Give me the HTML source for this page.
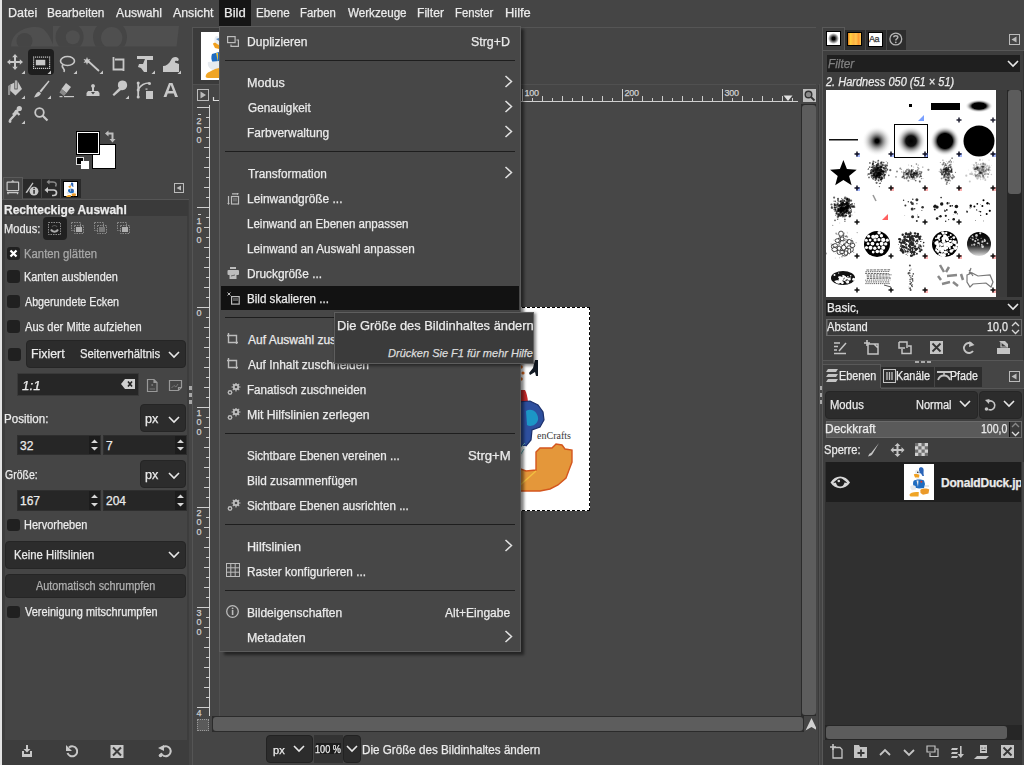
<!DOCTYPE html><html><head><meta charset="utf-8"><style>
html,body{margin:0;padding:0;width:1024px;height:765px;overflow:hidden;background:#454545;}
body{position:relative;font-family:"Liberation Sans", sans-serif;}
div{-webkit-text-stroke:0.25px currentColor;}
div,svg{position:absolute;box-sizing:border-box;}
</style></head><body>
<div style="left:0px;top:0px;width:2px;height:765px;background:#e4e4e4;"></div>
<div style="left:2px;top:0px;width:1022px;height:26px;background:#454545;"></div>
<div style="top:6.8px;font-size:12px;line-height:12px;color:#ebebeb;white-space:pre;left:7.86px;transform:scaleX(1.0423);transform-origin:0 0;">Datei</div>
<div style="top:6.8px;font-size:12px;line-height:12px;color:#ebebeb;white-space:pre;left:47.21px;transform:scaleX(0.9893);transform-origin:0 0;">Bearbeiten</div>
<div style="top:6.8px;font-size:12px;line-height:12px;color:#ebebeb;white-space:pre;left:115.50px;transform:scaleX(1.0156);transform-origin:0 0;">Auswahl</div>
<div style="top:6.8px;font-size:12px;line-height:12px;color:#ebebeb;white-space:pre;left:172.60px;transform:scaleX(1.0282);transform-origin:0 0;">Ansicht</div>
<div style="top:6.8px;font-size:12px;line-height:12px;color:#ebebeb;white-space:pre;left:256.13px;transform:scaleX(0.9697);transform-origin:0 0;">Ebene</div>
<div style="top:6.8px;font-size:12px;line-height:12px;color:#ebebeb;white-space:pre;left:300.06px;transform:scaleX(0.9444);transform-origin:0 0;">Farben</div>
<div style="top:6.8px;font-size:12px;line-height:12px;color:#ebebeb;white-space:pre;left:347.70px;transform:scaleX(0.9683);transform-origin:0 0;">Werkzeuge</div>
<div style="top:6.8px;font-size:12px;line-height:12px;color:#ebebeb;white-space:pre;left:416.69px;transform:scaleX(1.0115);transform-origin:0 0;">Filter</div>
<div style="top:6.8px;font-size:12px;line-height:12px;color:#ebebeb;white-space:pre;left:455.06px;transform:scaleX(0.9400);transform-origin:0 0;">Fenster</div>
<div style="top:6.8px;font-size:12px;line-height:12px;color:#ebebeb;white-space:pre;left:504.73px;transform:scaleX(1.0739);transform-origin:0 0;">Hilfe</div>
<div style="left:219px;top:0px;width:32px;height:26px;background:#151515;"></div>
<div style="top:6.8px;font-size:12px;line-height:12px;color:#ebebeb;white-space:pre;left:223.51px;transform:scaleX(1.0889);transform-origin:0 0;">Bild</div>
<div style="left:2px;top:26px;width:188px;height:739px;background:#454545;"></div>
<svg style="left:0px;top:26px;" width="190" height="21" viewBox="0 0 190 21">
<defs><clipPath id="wb"><rect x="0" y="0" width="190" height="20.5"/></clipPath></defs>
<g clip-path="url(#wb)">
<path d="M11 21 C11 8 22 1 36 1 C44 1 48 6 54 21 Z" fill="#4f4f4f"/>
<circle cx="24.5" cy="15" r="8" fill="#454545"/>
<path d="M53 0 L179 0 L176.5 21 L53 21 Z" fill="#4f4f4f"/>
<circle cx="69.6" cy="11" r="14" fill="#454545"/>
<circle cx="110" cy="11" r="17" fill="#454545"/>
<circle cx="72.8" cy="11.3" r="7" fill="#4f4f4f"/>
<circle cx="111.7" cy="11.8" r="10.7" fill="#4f4f4f"/>
</g>
</svg>
<div style="left:28px;top:49px;width:26px;height:26px;background:#1e1e1e;border-radius:4px;"></div>
<svg style="left:0px;top:26px;" width="190" height="100" viewBox="0 0 190 100">
<g fill="#c8c8c8" stroke="none">
<!-- move -->
<rect x="10" y="35" width="10" height="2"/><rect x="14" y="31" width="2" height="10"/>
<path d="M7 36 L10.2 33.2 L10.2 38.8 Z M23 36 L19.8 33.2 L19.8 38.8 Z M15 28 L12.2 31.2 L17.8 31.2 Z M15 44 L12.2 40.8 L17.8 40.8 Z"/>
<path d="M21.5 48 L25 48 L25 44.5 Z" fill="#c8c8c8"/>
<!-- rect select dots -->
<rect x="35.8" y="33.8" width="9.5" height="5.5"/>
</g>
<g fill="#c8c8c8"><rect x="33" y="30.5" width="1.2" height="1.2"/><rect x="33" y="41.8" width="1.2" height="1.2"/><rect x="35" y="30.5" width="1.2" height="1.2"/><rect x="35" y="41.8" width="1.2" height="1.2"/><rect x="37" y="30.5" width="1.2" height="1.2"/><rect x="37" y="41.8" width="1.2" height="1.2"/><rect x="39" y="30.5" width="1.2" height="1.2"/><rect x="39" y="41.8" width="1.2" height="1.2"/><rect x="41" y="30.5" width="1.2" height="1.2"/><rect x="41" y="41.8" width="1.2" height="1.2"/><rect x="43" y="30.5" width="1.2" height="1.2"/><rect x="43" y="41.8" width="1.2" height="1.2"/><rect x="45" y="30.5" width="1.2" height="1.2"/><rect x="45" y="41.8" width="1.2" height="1.2"/><rect x="47" y="30.5" width="1.2" height="1.2"/><rect x="47" y="41.8" width="1.2" height="1.2"/><rect x="49" y="30.5" width="1.2" height="1.2"/><rect x="49" y="41.8" width="1.2" height="1.2"/><rect x="33" y="32.4" width="1.2" height="1.2"/><rect x="49" y="32.4" width="1.2" height="1.2"/><rect x="33" y="34.3" width="1.2" height="1.2"/><rect x="49" y="34.3" width="1.2" height="1.2"/><rect x="33" y="36.2" width="1.2" height="1.2"/><rect x="49" y="36.2" width="1.2" height="1.2"/><rect x="33" y="38.1" width="1.2" height="1.2"/><rect x="49" y="38.1" width="1.2" height="1.2"/><rect x="33" y="40.0" width="1.2" height="1.2"/><rect x="49" y="40.0" width="1.2" height="1.2"/></g>
<path d="M47.5 48 L51 48 L51 44.5 Z" fill="#c8c8c8"/>
<!-- lasso -->
<g fill="none" stroke="#c8c8c8" stroke-width="1.6">
<ellipse cx="67.5" cy="35" rx="7" ry="4.5"/>
<path d="M63 38.5 C60 42 66 42 64 46"/>
</g>
<path d="M73.5 48 L77 48 L77 44.5 Z" fill="#c8c8c8"/>
<!-- fuzzy wand -->
<path d="M88 35 L99 45" stroke="#c8c8c8" stroke-width="1.8"/>
<path d="M87 31 L88 33.5 L90.5 33 L89 35 L90.5 37 L88 36.5 L87 39 L86 36.5 L83.5 37 L85 35 L83.5 33 L86 33.5 Z" fill="#c8c8c8"/>
<path d="M99.5 48 L103 48 L103 44.5 Z" fill="#c8c8c8"/>
<!-- crop -->
<g fill="none" stroke="#c8c8c8" stroke-width="1.8">
<path d="M113.5 31 L113.5 43.5 L124 43.5"/>
<path d="M115 33.5 L123.5 33.5 L123.5 45"/>
</g>
<!-- unified transform -->
<path d="M137 30 L153 30 L153 34 L147 34 L147 46 L144 46 L141 42 L138 41 L139 38 L143 38 L145 33 L137 33 Z" fill="#c8c8c8"/>
<path d="M151.5 48 L155 48 L155 44.5 Z" fill="#c8c8c8"/>
<!-- warp -->
<path d="M163 46 L163 40 C166 40 169 38 171 34 C172 31 176 30 178 32 C179.5 33.5 178.5 35.5 177 35 C176 34.5 174.5 35 175 36.5 L179 38 L179 46 Z" fill="#c8c8c8"/>
<path d="M177.5 48 L181 48 L181 44.5 Z" fill="#c8c8c8"/>
<!-- bucket -->
<path d="M10.5 58.5 L17.5 55 L22 63 L15.5 69.5 L9.5 64 Z" fill="#c8c8c8"/>
<path d="M8 60 L11 58 L10 69 L8 69 Z" fill="#8e8e8e"/>
<rect x="14.8" y="54" width="2.4" height="9" fill="#c8c8c8" stroke="#454545" stroke-width="0.8"/>
<path d="M21.5 73 L25 73 L25 69.5 Z" fill="#c8c8c8"/>
<!-- brush -->
<path d="M48.5 54.5 L49.5 55.5 L41 66.5 L39.5 65 Z" fill="#c8c8c8"/>
<path d="M39 65.5 L41 67.5 C40 70 37.5 71 34 71.5 C35.5 69 36 66.5 39 65.5 Z" fill="#c8c8c8"/>
<path d="M47.5 73 L51 73 L51 69.5 Z" fill="#c8c8c8"/>
<!-- eraser -->
<path d="M66 57 L71 61 L66.5 67 L61.5 63 Z" fill="#c8c8c8"/>
<path d="M61.5 63 L66.5 67 L64 70 L59.5 66.5 Z" fill="#8a8a8a"/>
<rect x="59.5" y="70" width="3" height="1.2" fill="#c8c8c8"/><rect x="64" y="70" width="10" height="1.2" fill="#c8c8c8"/>
<!-- clone -->
<circle cx="93" cy="60" r="2"/>
<g fill="#c8c8c8"><circle cx="93" cy="60" r="2"/><rect x="92" y="61" width="2" height="4"/><path d="M88 65 L98 65 L99.5 67 L99.5 70 L86.5 70 L86.5 67 Z"/></g>
<path d="M91 66 L95 66 L93 68.5 Z" fill="#454545"/>
<!-- smudge -->
<path d="M118 58 C118 54 126 53 127 58 C128 62 124 65 121 64 L114 70 L112.5 68.5 L119 62 C117.5 61 118 59 118 58 Z" fill="#c8c8c8"/>
<path d="M125.5 73 L129 73 L129 69.5 Z" fill="#c8c8c8"/>
<!-- paths -->
<g fill="#c8c8c8"><rect x="137.3" y="56" width="1.8" height="16"/><circle cx="138.2" cy="57" r="1.5"/><circle cx="138.2" cy="64" r="1.5"/><circle cx="138.2" cy="71" r="1.5"/>
<rect x="145.5" y="62.5" width="2" height="1.2"/><rect x="146" y="65" width="7" height="8"/></g>
<path d="M138.5 63 C141 59 145 57 149 57" fill="none" stroke="#c8c8c8" stroke-width="1.5"/>
<circle cx="149.5" cy="57.5" r="1.5" fill="#c8c8c8"/>
<!-- text A -->
<path d="M169 57 L172.5 57 L178 71 L175 71 L173.8 67.5 L167.7 67.5 L166.5 71 L163.5 71 Z M168.5 65 L173 65 L170.7 59 Z" fill="#c8c8c8" fill-rule="evenodd"/>
<!-- color picker -->
<circle cx="19.3" cy="82.5" r="2.6" fill="#c8c8c8"/>
<path d="M15 84.5 L19.5 89 M17 86.5 L11 93 L9.5 95" stroke="#c8c8c8" stroke-width="2.2" fill="none"/>
<path d="M18.5 83.5 L13 89" stroke="#c8c8c8" stroke-width="2.6"/>
<circle cx="10" cy="95.5" r="1.4" fill="#c8c8c8"/>
<path d="M21.5 98 L25 98 L25 94.5 Z" fill="#c8c8c8"/>
<!-- zoom -->
<circle cx="39.5" cy="86.5" r="4.3" fill="none" stroke="#c8c8c8" stroke-width="1.8"/>
<path d="M42.5 89.5 L47.5 94.5" stroke="#c8c8c8" stroke-width="2.2"/>
</svg>
<div style="left:92px;top:144px;width:24px;height:25px;background:#ffffff;border:1px solid #000;"></div>
<div style="left:76px;top:131px;width:24px;height:24px;background:#000;border:1px solid #000;box-shadow:inset 0 0 0 1px #fff, inset 0 0 0 2px #000;"></div>
<div style="left:76px;top:157px;width:8px;height:8px;background:#000;border:1px solid #ddd;"></div>
<div style="left:81px;top:161px;width:8px;height:8px;background:#fff;"></div>
<svg style="left:104px;top:130px;" width="13" height="14" viewBox="0 0 13 14"><path d="M1 3.5 L4.5 0.5 L4.5 2.5 L9.5 2.5 L9.5 9 L11.5 9 L8.5 12.5 L5.5 9 L7.5 9 L7.5 4.5 L4.5 4.5 L4.5 6.5 Z" fill="#bdbdbd"/></svg>
<div style="left:3px;top:177px;width:20px;height:23px;background:#454545;border:1px solid #5a5a5a;border-bottom:none;"></div>
<div style="left:23px;top:179px;width:18px;height:19px;background:#2a2a2a;"></div>
<div style="left:42px;top:179px;width:18px;height:19px;background:#2a2a2a;"></div>
<div style="left:61px;top:179px;width:20px;height:19px;background:#2a2a2a;"></div>
<svg style="left:3px;top:176px;" width="80" height="24" viewBox="0 0 80 24">
<g fill="none" stroke="#c8c8c8" stroke-width="1.2">
<rect x="4.1" y="6.1" width="11.5" height="8.5" rx="0.5"/>
<path d="M4 16.6 L15.5 16.6 M5 16.6 L5 18.3 M14.5 16.6 L14.5 18.3"/>
</g>
<path d="M8 5.8 L9.8 4 L11.6 5.8 Z" fill="#c8c8c8"/>
<path d="M22.5 16.5 L29.5 6.5 L30.5 7.3 L24 17 Z" fill="#c8c8c8"/>
<circle cx="31" cy="15.2" r="4.4" fill="#c8c8c8"/>
<rect x="30.3" y="14" width="1.5" height="3.8" fill="#2a2a2a"/><rect x="30.3" y="11.8" width="1.5" height="1.3" fill="#2a2a2a"/>
<path d="M52.5 10.5 C54 8 53 6 50 6 L46 6" fill="none" stroke="#8a8a8a" stroke-width="1.5"/>
<path d="M46.5 3.5 L43.5 6 L46.5 8.5 Z" fill="#8a8a8a"/>
<path d="M44.5 14 L50.5 14 C54.5 14 54.5 19.5 50.5 19.5 L49 19.5" fill="none" stroke="#c8c8c8" stroke-width="1.7"/>
<path d="M45 11 L41.5 14 L45 17 Z" fill="#c8c8c8"/>
</svg>
<div style="left:63px;top:181px;width:15px;height:16px;background:#ffffff;border:1px solid #000;"></div>
<svg style="left:63px;top:181px;" width="15" height="16" viewBox="0 0 15 16"><g transform="translate(0.5,0) scale(0.5)"><g>
<path d="M15 5 C15 2.5 19 2.5 19.5 5 C20 7 19 9 20 12 L18.5 12 L17 9.5 L15 9 Z" fill="#2a64b8"/>
<path d="M11 8 C11 5.5 15 5 15.5 7.5 L15.5 12.5 L12 12.5 Z" fill="#e6ebf0"/>
<circle cx="13.8" cy="8.2" r="0.8" fill="#222"/>
<path d="M9.8 10.5 C11 9.8 14 10 15.3 11 L15 13.7 L11 13.5 Z" fill="#f0a020"/>
<path d="M12 13.7 L16 13.7 L16.5 16.5 L12.5 16.5 Z" fill="#f0f2f4"/>
<path d="M9.5 17 C11 15.5 17 15 20 16.5 L21 20 L20 24 L15 24.5 L10 23.5 C8.8 21 8.8 19 9.5 17 Z" fill="#1f6cc0"/>
<path d="M12.5 16.5 L14.5 16.5 L14 23 Z" fill="#e8e8e8"/>
<circle cx="17.4" cy="17.8" r="1" fill="#d83a2a"/>
<path d="M6.4 22 C8 21 10 21 11.6 22 L12 25.5 L8 26.3 C6.5 25 6 23.5 6.4 22 Z" fill="#e4e8ec"/>
<path d="M21 21 L25 21 L25 23 L21 23 Z" fill="#e4e8ec"/>
<path d="M5.3 31 C6 28.5 10 27.5 14.8 28 L14.5 32.6 L6.5 32.6 Z" fill="#f0a526"/>
<path d="M16.3 26 C18 24 23 24 25.2 25.5 L24.5 29.5 L19 30.7 L16.5 29 Z" fill="#eb9a2a"/>
</g></g></svg>
<div style="left:174px;top:183px;width:10px;height:10px;border:1px solid #bbb;"></div>
<svg style="left:174px;top:183px;" width="10" height="10" viewBox="0 0 10 10"><path d="M7 2.5 L7 7.5 L2.5 5 Z" fill="#bbb"/></svg>
<div style="left:2px;top:199px;width:188px;height:566px;background:#3d3d3d;"></div>
<div style="left:2px;top:199px;width:188px;height:1px;background:#555;"></div>
<div style="left:189px;top:199px;width:1px;height:566px;background:#4e4e4e;"></div>
<div style="left:5px;top:216px;width:182px;height:524px;background:#454545;"></div>
<div style="left:4px;top:200px;width:184px;height:16px;background:#3a3a3a;"></div>
<div style="top:203.8px;font-size:12px;line-height:12px;color:#ebebeb;white-space:pre;font-weight:bold;left:4.20px;transform:scaleX(0.9983);transform-origin:0 0;">Rechteckige Auswahl</div>
<div style="top:222.8px;font-size:12px;line-height:12px;color:#ebebeb;white-space:pre;left:3.68px;transform:scaleX(0.9237);transform-origin:0 0;">Modus:</div>
<div style="left:43px;top:217px;width:24px;height:23px;background:#202020;border-radius:4px;"></div>
<svg style="left:43px;top:217px;" width="90" height="23" viewBox="0 0 90 23">
<g fill="none" stroke="#8a8a8a" stroke-width="1" stroke-dasharray="1.5 1">
<rect x="5.5" y="5.5" width="12" height="12"/>
<rect x="28.5" y="5.5" width="9" height="8"/><rect x="31.5" y="8.5" width="9" height="8"/>
<rect x="51.5" y="5.5" width="9" height="8"/><rect x="54.5" y="8.5" width="9" height="8"/>
<rect x="74.5" y="5.5" width="9" height="8"/><rect x="77.5" y="8.5" width="9" height="8"/>
</g>
<path d="M8 12.5 C9.5 15.5 13.5 15.5 15 12.5" fill="none" stroke="#aaa" stroke-width="2"/>
<path d="M9 10 C10 8 13 8 14 10" fill="none" stroke="#555" stroke-width="1.2"/>
<rect x="33" y="10" width="6" height="5" fill="#b0b0b0"/>
<rect x="56" y="10" width="6" height="5" fill="#777"/>
<rect x="79" y="10" width="6" height="5" fill="#b0b0b0"/>
</svg>
<div style="left:7px;top:247px;width:13px;height:13px;background:#202020;border-radius:3px;"></div>
<div style="top:247.8px;font-size:12px;line-height:12px;color:#a8a8a8;white-space:pre;left:23.56px;transform:scaleX(0.9434);transform-origin:0 0;">Kanten glätten</div>
<div style="left:7px;top:270px;width:13px;height:13px;background:#202020;border-radius:3px;"></div>
<div style="top:270.8px;font-size:12px;line-height:12px;color:#ebebeb;white-space:pre;left:23.59px;transform:scaleX(0.9069);transform-origin:0 0;">Kanten ausblenden</div>
<div style="left:7px;top:295px;width:13px;height:13px;background:#202020;border-radius:3px;"></div>
<div style="top:295.8px;font-size:12px;line-height:12px;color:#ebebeb;white-space:pre;left:24.50px;transform:scaleX(0.8924);transform-origin:0 0;">Abgerundete Ecken</div>
<div style="left:7px;top:320px;width:13px;height:13px;background:#202020;border-radius:3px;"></div>
<div style="top:320.8px;font-size:12px;line-height:12px;color:#ebebeb;white-space:pre;left:24.50px;transform:scaleX(0.9262);transform-origin:0 0;">Aus der Mitte aufziehen</div>
<svg style="left:7px;top:247px;" width="13" height="13" viewBox="0 0 13 13"><path d="M3.5 3.5 L9.5 9.5 M9.5 3.5 L3.5 9.5" stroke="#fff" stroke-width="2.2"/></svg>
<div style="left:8px;top:348px;width:13px;height:13px;background:#202020;border-radius:3px;"></div>
<div style="left:26px;top:340px;width:160px;height:28px;background:#2c2c2c;border-radius:4px;border:1px solid #252525;"></div>
<div style="top:347.8px;font-size:12px;line-height:12px;color:#ebebeb;white-space:pre;left:30.97px;transform:scaleX(1.0281);transform-origin:0 0;">Fixiert</div>
<div style="top:347.8px;font-size:12px;line-height:12px;color:#ebebeb;white-space:pre;left:80.26px;transform:scaleX(0.9381);transform-origin:0 0;">Seitenverhältnis</div>
<svg style="left:168px;top:351px;" width="12" height="8" viewBox="0 0 12 8"><path d="M1 1 L6 6 L11 1" fill="none" stroke="#e8e8e8" stroke-width="1.6"/></svg>
<div style="left:17px;top:373px;width:122px;height:23px;background:#262626;border:1px solid #393939;"></div>
<div style="top:379.8px;font-size:12px;line-height:12px;color:#ebebeb;white-space:pre;font-style:italic;left:22.00px;transform:scaleX(1.1250);transform-origin:0 0;">1:1</div>
<svg style="left:121px;top:377px;" width="16" height="14" viewBox="0 0 16 14"><path d="M4 2 L14 2 L14 12 L4 12 L0 7 Z" fill="#d0d0d0"/><path d="M7 4.5 L11 9.5 M11 4.5 L7 9.5" stroke="#222" stroke-width="1.6"/></svg>
<svg style="left:145px;top:378px;" width="40" height="16" viewBox="0 0 40 16"><path d="M2.5 1.5 L9 1.5 L12 4.5 L12 13.5 L2.5 13.5 Z M9 1.5 L9 4.5 L12 4.5" fill="none" stroke="#999" stroke-width="1.2"/><circle cx="7.2" cy="7" r="1" fill="#777"/><path d="M4.5 11 L10 11" stroke="#777" stroke-width="1"/><path d="M24.5 2.5 L36.5 2.5 L36.5 9.5 L33.5 12.5 L24.5 12.5 Z M33.5 12.5 L33.5 9.5 L36.5 9.5" fill="none" stroke="#999" stroke-width="1.2"/><path d="M26.5 10 L29 7.5 L31 9 L33 6" fill="none" stroke="#777" stroke-width="1"/></svg>
<div style="top:412.8px;font-size:12px;line-height:12px;color:#ebebeb;white-space:pre;left:3.64px;transform:scaleX(0.9636);transform-origin:0 0;">Position:</div>
<div style="left:140px;top:404px;width:46px;height:28px;background:#2c2c2c;border-radius:4px;border:1px solid #252525;"></div>
<div style="top:412.8px;font-size:12px;line-height:12px;color:#ebebeb;white-space:pre;left:144.75px;transform:scaleX(1.0500);transform-origin:0 0;">px</div>
<svg style="left:168px;top:416px;" width="12" height="8" viewBox="0 0 12 8"><path d="M1 1 L6 6 L11 1" fill="none" stroke="#e8e8e8" stroke-width="1.6"/></svg>
<div style="left:17px;top:435px;width:84px;height:20px;background:#262626;border:1px solid #2e2e2e;"></div>
<div style="left:89px;top:436px;width:11px;height:18px;background:#1c1c1c;"></div>
<svg style="left:89px;top:436px;" width="11" height="18" viewBox="0 0 11 18"><path d="M2 7 L5.5 3.5 L9 7 Z M2 11 L5.5 14.5 L9 11 Z" fill="#d8d8d8"/></svg>
<div style="top:439.8px;font-size:12px;line-height:12px;color:#ebebeb;white-space:pre;left:20px;">32</div>
<div style="left:103px;top:435px;width:84px;height:20px;background:#262626;border:1px solid #2e2e2e;"></div>
<div style="left:175px;top:436px;width:11px;height:18px;background:#1c1c1c;"></div>
<svg style="left:175px;top:436px;" width="11" height="18" viewBox="0 0 11 18"><path d="M2 7 L5.5 3.5 L9 7 Z M2 11 L5.5 14.5 L9 11 Z" fill="#d8d8d8"/></svg>
<div style="top:439.8px;font-size:12px;line-height:12px;color:#ebebeb;white-space:pre;left:106px;">7</div>
<div style="top:468.8px;font-size:12px;line-height:12px;color:#ebebeb;white-space:pre;left:4.60px;transform:scaleX(0.8757);transform-origin:0 0;">Größe:</div>
<div style="left:140px;top:460px;width:46px;height:28px;background:#2c2c2c;border-radius:4px;border:1px solid #252525;"></div>
<div style="top:468.8px;font-size:12px;line-height:12px;color:#ebebeb;white-space:pre;left:144.75px;transform:scaleX(1.0500);transform-origin:0 0;">px</div>
<svg style="left:168px;top:472px;" width="12" height="8" viewBox="0 0 12 8"><path d="M1 1 L6 6 L11 1" fill="none" stroke="#e8e8e8" stroke-width="1.6"/></svg>
<div style="left:17px;top:490px;width:84px;height:21px;background:#262626;border:1px solid #2e2e2e;"></div>
<div style="left:89px;top:491px;width:11px;height:19px;background:#1c1c1c;"></div>
<svg style="left:89px;top:491px;" width="11" height="19" viewBox="0 0 11 19"><path d="M2 7 L5.5 3.5 L9 7 Z M2 12 L5.5 15.5 L9 12 Z" fill="#d8d8d8"/></svg>
<div style="top:494.8px;font-size:12px;line-height:12px;color:#ebebeb;white-space:pre;left:20px;">167</div>
<div style="left:103px;top:490px;width:84px;height:21px;background:#262626;border:1px solid #2e2e2e;"></div>
<div style="left:175px;top:491px;width:11px;height:19px;background:#1c1c1c;"></div>
<svg style="left:175px;top:491px;" width="11" height="19" viewBox="0 0 11 19"><path d="M2 7 L5.5 3.5 L9 7 Z M2 12 L5.5 15.5 L9 12 Z" fill="#d8d8d8"/></svg>
<div style="top:494.8px;font-size:12px;line-height:12px;color:#ebebeb;white-space:pre;left:106px;">204</div>
<div style="left:7px;top:519px;width:13px;height:12px;background:#202020;border-radius:3px;"></div>
<div style="top:518.8px;font-size:12px;line-height:12px;color:#ebebeb;white-space:pre;left:23.79px;transform:scaleX(0.9132);transform-origin:0 0;">Hervorheben</div>
<div style="left:5px;top:541px;width:181px;height:28px;background:#2c2c2c;border-radius:4px;border:1px solid #252525;"></div>
<div style="top:548.8px;font-size:12px;line-height:12px;color:#ebebeb;white-space:pre;left:14.06px;transform:scaleX(0.9405);transform-origin:0 0;">Keine Hilfslinien</div>
<svg style="left:168px;top:551px;" width="12" height="8" viewBox="0 0 12 8"><path d="M1 1 L6 6 L11 1" fill="none" stroke="#e8e8e8" stroke-width="1.6"/></svg>
<div style="left:5px;top:574px;width:181px;height:24px;background:#2c2c2c;border-radius:4px;border:1px solid #252525;"></div>
<div style="top:579.8px;font-size:12px;line-height:12px;color:#b0b0b0;white-space:pre;left:36.00px;transform:scaleX(0.9030);transform-origin:0 0;">Automatisch schrumpfen</div>
<div style="left:7px;top:606px;width:13px;height:12px;background:#202020;border-radius:3px;"></div>
<div style="top:605.8px;font-size:12px;line-height:12px;color:#ebebeb;white-space:pre;left:24.70px;transform:scaleX(0.9124);transform-origin:0 0;">Vereinigung mitschrumpfen</div>
<svg style="left:3px;top:740px;" width="187" height="25" viewBox="0 0 187 25">
<g fill="#c8c8c8">
<rect x="23" y="5" width="2" height="6"/><path d="M20.5 9 L27.5 9 L24 12.5 Z"/>
<path d="M19 11 L21 11 L21 14 L27 14 L27 11 L29 11 L29 17 L19 17 Z"/>
</g>
<path d="M66 7.5 A5 5 0 1 1 64.5 13" fill="none" stroke="#c8c8c8" stroke-width="2"/>
<path d="M63 5 L63 11 L69 11 Z" fill="#c8c8c8"/>
<rect x="107.5" y="5" width="13" height="13" fill="#c8c8c8"/>
<path d="M110 7.5 L118 15.5 M118 7.5 L110 15.5" stroke="#3c3c3c" stroke-width="2"/>
<path d="M158 13 A5 5 0 1 0 160 7" fill="none" stroke="#c8c8c8" stroke-width="2"/>
<circle cx="157.5" cy="15.5" r="1.8" fill="#c8c8c8"/>
<path d="M155 8 L161 5 L161 11 Z" fill="#c8c8c8"/>
</svg>
<div style="left:189px;top:26px;width:4px;height:739px;background:#454545;"></div>
<div style="left:192px;top:27px;width:627px;height:738px;background:#454545;border-left:1px solid #555;border-top:1px solid #555;"></div>
<div style="left:193px;top:28px;width:33px;height:57px;background:#3b3b3b;"></div>
<div style="left:201px;top:32px;width:21px;height:48px;background:#ffffff;"></div>
<svg style="left:201px;top:32px;" width="18" height="48" viewBox="0 0 18 48"><path d="M14 5 C16 3 18 4 18 6 L18 14 L15 13 C13 11 13 7 14 5 Z" fill="#e8eef4"/><path d="M15 7 L18 6 L18 9 Z" fill="#5a8ac0"/><path d="M12 12 C13 10 15 11 16 12 L18 13 L18 17 L14 16 Z" fill="#f0a020"/><path d="M11 22 L18 20 L18 31 L12 31 C10 28 10 25 11 22 Z" fill="#1f6cc0"/><path d="M15 21 L17 21 L17 30 Z" fill="#e8c040"/><path d="M7 30 L18 29 L18 38 L12 38 C8 37 6 33 7 30 Z" fill="#e6eaee"/><path d="M5 43 C6 40 11 39 14 37 L18 36 L18 46 L7 46 C5 46 4 45 5 43 Z" fill="#f0a526"/></svg>
<div style="left:193px;top:84px;width:626px;height:1px;background:#505050;"></div>
<div style="left:193px;top:85px;width:626px;height:17px;background:#454545;"></div>
<div style="left:193px;top:85px;width:27px;height:632px;background:#454545;"></div>
<div style="left:220px;top:102px;width:581px;height:615px;background:#474747;"></div>
<div style="left:219px;top:102px;width:1px;height:615px;background:#505050;"></div>
<div style="left:220px;top:101px;width:580px;height:1px;background:#4a4a4a;"></div>
<div style="left:197px;top:89px;width:12px;height:12px;border:1px solid #bbb;"></div>
<svg style="left:197px;top:89px;" width="12" height="12" viewBox="0 0 12 12"><path d="M3.5 2.5 L9 6 L3.5 9.5 Z" fill="#bbb"/></svg>
<svg style="left:212px;top:97px;" width="8" height="5" viewBox="0 0 8 5"><path d="M1.5 0 L1.5 3.5 L8 3.5" fill="none" stroke="#ddd" stroke-width="1.2"/></svg>
<svg style="left:220px;top:85px;" width="580" height="17" viewBox="0 0 580 17"><rect x="0" y="16" width="578" height="1" fill="#cfcfcf"/><path d="M2.5 4 L2.5 16" stroke="#cfcfcf" stroke-width="1"/><path d="M12.5 13 L12.5 16" stroke="#cfcfcf" stroke-width="1"/><path d="M22.5 11 L22.5 16" stroke="#cfcfcf" stroke-width="1"/><path d="M32.5 13 L32.5 16" stroke="#cfcfcf" stroke-width="1"/><path d="M42.5 11 L42.5 16" stroke="#cfcfcf" stroke-width="1"/><path d="M52.5 13 L52.5 16" stroke="#cfcfcf" stroke-width="1"/><path d="M62.5 11 L62.5 16" stroke="#cfcfcf" stroke-width="1"/><path d="M72.5 13 L72.5 16" stroke="#cfcfcf" stroke-width="1"/><path d="M82.5 11 L82.5 16" stroke="#cfcfcf" stroke-width="1"/><path d="M92.5 13 L92.5 16" stroke="#cfcfcf" stroke-width="1"/><path d="M102.5 4 L102.5 16" stroke="#cfcfcf" stroke-width="1"/><path d="M112.5 13 L112.5 16" stroke="#cfcfcf" stroke-width="1"/><path d="M122.5 11 L122.5 16" stroke="#cfcfcf" stroke-width="1"/><path d="M132.5 13 L132.5 16" stroke="#cfcfcf" stroke-width="1"/><path d="M142.5 11 L142.5 16" stroke="#cfcfcf" stroke-width="1"/><path d="M152.5 13 L152.5 16" stroke="#cfcfcf" stroke-width="1"/><path d="M162.5 11 L162.5 16" stroke="#cfcfcf" stroke-width="1"/><path d="M172.5 13 L172.5 16" stroke="#cfcfcf" stroke-width="1"/><path d="M182.5 11 L182.5 16" stroke="#cfcfcf" stroke-width="1"/><path d="M192.5 13 L192.5 16" stroke="#cfcfcf" stroke-width="1"/><path d="M202.5 4 L202.5 16" stroke="#cfcfcf" stroke-width="1"/><path d="M212.5 13 L212.5 16" stroke="#cfcfcf" stroke-width="1"/><path d="M222.5 11 L222.5 16" stroke="#cfcfcf" stroke-width="1"/><path d="M232.5 13 L232.5 16" stroke="#cfcfcf" stroke-width="1"/><path d="M242.5 11 L242.5 16" stroke="#cfcfcf" stroke-width="1"/><path d="M252.5 13 L252.5 16" stroke="#cfcfcf" stroke-width="1"/><path d="M262.5 11 L262.5 16" stroke="#cfcfcf" stroke-width="1"/><path d="M272.5 13 L272.5 16" stroke="#cfcfcf" stroke-width="1"/><path d="M282.5 11 L282.5 16" stroke="#cfcfcf" stroke-width="1"/><path d="M292.5 13 L292.5 16" stroke="#cfcfcf" stroke-width="1"/><path d="M302.5 4 L302.5 16" stroke="#cfcfcf" stroke-width="1"/><path d="M312.5 13 L312.5 16" stroke="#cfcfcf" stroke-width="1"/><path d="M322.5 11 L322.5 16" stroke="#cfcfcf" stroke-width="1"/><path d="M332.5 13 L332.5 16" stroke="#cfcfcf" stroke-width="1"/><path d="M342.5 11 L342.5 16" stroke="#cfcfcf" stroke-width="1"/><path d="M352.5 13 L352.5 16" stroke="#cfcfcf" stroke-width="1"/><path d="M362.5 11 L362.5 16" stroke="#cfcfcf" stroke-width="1"/><path d="M372.5 13 L372.5 16" stroke="#cfcfcf" stroke-width="1"/><path d="M382.5 11 L382.5 16" stroke="#cfcfcf" stroke-width="1"/><path d="M392.5 13 L392.5 16" stroke="#cfcfcf" stroke-width="1"/><path d="M402.5 4 L402.5 16" stroke="#cfcfcf" stroke-width="1"/><path d="M412.5 13 L412.5 16" stroke="#cfcfcf" stroke-width="1"/><path d="M422.5 11 L422.5 16" stroke="#cfcfcf" stroke-width="1"/><path d="M432.5 13 L432.5 16" stroke="#cfcfcf" stroke-width="1"/><path d="M442.5 11 L442.5 16" stroke="#cfcfcf" stroke-width="1"/><path d="M452.5 13 L452.5 16" stroke="#cfcfcf" stroke-width="1"/><path d="M462.5 11 L462.5 16" stroke="#cfcfcf" stroke-width="1"/><path d="M472.5 13 L472.5 16" stroke="#cfcfcf" stroke-width="1"/><path d="M482.5 11 L482.5 16" stroke="#cfcfcf" stroke-width="1"/><path d="M492.5 13 L492.5 16" stroke="#cfcfcf" stroke-width="1"/><path d="M502.5 4 L502.5 16" stroke="#cfcfcf" stroke-width="1"/><path d="M512.5 13 L512.5 16" stroke="#cfcfcf" stroke-width="1"/><path d="M522.5 11 L522.5 16" stroke="#cfcfcf" stroke-width="1"/><path d="M532.5 13 L532.5 16" stroke="#cfcfcf" stroke-width="1"/><path d="M542.5 11 L542.5 16" stroke="#cfcfcf" stroke-width="1"/><path d="M552.5 13 L552.5 16" stroke="#cfcfcf" stroke-width="1"/><path d="M562.5 11 L562.5 16" stroke="#cfcfcf" stroke-width="1"/><path d="M572.5 13 L572.5 16" stroke="#cfcfcf" stroke-width="1"/></svg>
<div style="top:89.4px;font-size:9px;line-height:9px;color:#d0d0d0;white-space:pre;left:524.6px;letter-spacing:-0.3px;">100</div>
<div style="top:89.4px;font-size:9px;line-height:9px;color:#d0d0d0;white-space:pre;left:624.6px;letter-spacing:-0.3px;">200</div>
<div style="top:89.4px;font-size:9px;line-height:9px;color:#d0d0d0;white-space:pre;left:724.6px;letter-spacing:-0.3px;">300</div>
<svg style="left:193px;top:102px;" width="27" height="615" viewBox="0 0 27 615"><rect x="16" y="3" width="1" height="611" fill="#cfcfcf"/><path d="M4 5.5 L16 5.5" stroke="#cfcfcf" stroke-width="1"/><path d="M13 15.5 L16 15.5" stroke="#cfcfcf" stroke-width="1"/><path d="M11 25.5 L16 25.5" stroke="#cfcfcf" stroke-width="1"/><path d="M13 35.5 L16 35.5" stroke="#cfcfcf" stroke-width="1"/><path d="M11 45.5 L16 45.5" stroke="#cfcfcf" stroke-width="1"/><path d="M13 55.5 L16 55.5" stroke="#cfcfcf" stroke-width="1"/><path d="M11 65.5 L16 65.5" stroke="#cfcfcf" stroke-width="1"/><path d="M13 75.5 L16 75.5" stroke="#cfcfcf" stroke-width="1"/><path d="M11 85.5 L16 85.5" stroke="#cfcfcf" stroke-width="1"/><path d="M13 95.5 L16 95.5" stroke="#cfcfcf" stroke-width="1"/><path d="M4 105.5 L16 105.5" stroke="#cfcfcf" stroke-width="1"/><path d="M13 115.5 L16 115.5" stroke="#cfcfcf" stroke-width="1"/><path d="M11 125.5 L16 125.5" stroke="#cfcfcf" stroke-width="1"/><path d="M13 135.5 L16 135.5" stroke="#cfcfcf" stroke-width="1"/><path d="M11 145.5 L16 145.5" stroke="#cfcfcf" stroke-width="1"/><path d="M13 155.5 L16 155.5" stroke="#cfcfcf" stroke-width="1"/><path d="M11 165.5 L16 165.5" stroke="#cfcfcf" stroke-width="1"/><path d="M13 175.5 L16 175.5" stroke="#cfcfcf" stroke-width="1"/><path d="M11 185.5 L16 185.5" stroke="#cfcfcf" stroke-width="1"/><path d="M13 195.5 L16 195.5" stroke="#cfcfcf" stroke-width="1"/><path d="M4 205.5 L16 205.5" stroke="#cfcfcf" stroke-width="1"/><path d="M13 215.5 L16 215.5" stroke="#cfcfcf" stroke-width="1"/><path d="M11 225.5 L16 225.5" stroke="#cfcfcf" stroke-width="1"/><path d="M13 235.5 L16 235.5" stroke="#cfcfcf" stroke-width="1"/><path d="M11 245.5 L16 245.5" stroke="#cfcfcf" stroke-width="1"/><path d="M13 255.5 L16 255.5" stroke="#cfcfcf" stroke-width="1"/><path d="M11 265.5 L16 265.5" stroke="#cfcfcf" stroke-width="1"/><path d="M13 275.5 L16 275.5" stroke="#cfcfcf" stroke-width="1"/><path d="M11 285.5 L16 285.5" stroke="#cfcfcf" stroke-width="1"/><path d="M13 295.5 L16 295.5" stroke="#cfcfcf" stroke-width="1"/><path d="M4 305.5 L16 305.5" stroke="#cfcfcf" stroke-width="1"/><path d="M13 315.5 L16 315.5" stroke="#cfcfcf" stroke-width="1"/><path d="M11 325.5 L16 325.5" stroke="#cfcfcf" stroke-width="1"/><path d="M13 335.5 L16 335.5" stroke="#cfcfcf" stroke-width="1"/><path d="M11 345.5 L16 345.5" stroke="#cfcfcf" stroke-width="1"/><path d="M13 355.5 L16 355.5" stroke="#cfcfcf" stroke-width="1"/><path d="M11 365.5 L16 365.5" stroke="#cfcfcf" stroke-width="1"/><path d="M13 375.5 L16 375.5" stroke="#cfcfcf" stroke-width="1"/><path d="M11 385.5 L16 385.5" stroke="#cfcfcf" stroke-width="1"/><path d="M13 395.5 L16 395.5" stroke="#cfcfcf" stroke-width="1"/><path d="M4 405.5 L16 405.5" stroke="#cfcfcf" stroke-width="1"/><path d="M13 415.5 L16 415.5" stroke="#cfcfcf" stroke-width="1"/><path d="M11 425.5 L16 425.5" stroke="#cfcfcf" stroke-width="1"/><path d="M13 435.5 L16 435.5" stroke="#cfcfcf" stroke-width="1"/><path d="M11 445.5 L16 445.5" stroke="#cfcfcf" stroke-width="1"/><path d="M13 455.5 L16 455.5" stroke="#cfcfcf" stroke-width="1"/><path d="M11 465.5 L16 465.5" stroke="#cfcfcf" stroke-width="1"/><path d="M13 475.5 L16 475.5" stroke="#cfcfcf" stroke-width="1"/><path d="M11 485.5 L16 485.5" stroke="#cfcfcf" stroke-width="1"/><path d="M13 495.5 L16 495.5" stroke="#cfcfcf" stroke-width="1"/><path d="M4 505.5 L16 505.5" stroke="#cfcfcf" stroke-width="1"/><path d="M13 515.5 L16 515.5" stroke="#cfcfcf" stroke-width="1"/><path d="M11 525.5 L16 525.5" stroke="#cfcfcf" stroke-width="1"/><path d="M13 535.5 L16 535.5" stroke="#cfcfcf" stroke-width="1"/><path d="M11 545.5 L16 545.5" stroke="#cfcfcf" stroke-width="1"/><path d="M13 555.5 L16 555.5" stroke="#cfcfcf" stroke-width="1"/><path d="M11 565.5 L16 565.5" stroke="#cfcfcf" stroke-width="1"/><path d="M13 575.5 L16 575.5" stroke="#cfcfcf" stroke-width="1"/><path d="M11 585.5 L16 585.5" stroke="#cfcfcf" stroke-width="1"/><path d="M13 595.5 L16 595.5" stroke="#cfcfcf" stroke-width="1"/><path d="M4 605.5 L16 605.5" stroke="#cfcfcf" stroke-width="1"/></svg>
<div style="left:198px;top:114px;width:3px;height:1px;background:#cfcfcf;"></div>
<div style="top:117.4px;font-size:9px;line-height:9px;color:#d0d0d0;white-space:pre;left:196.5px;">2</div>
<div style="top:126.4px;font-size:9px;line-height:9px;color:#d0d0d0;white-space:pre;left:196.5px;">0</div>
<div style="top:136.4px;font-size:9px;line-height:9px;color:#d0d0d0;white-space:pre;left:196.5px;">0</div>
<div style="left:198px;top:214px;width:3px;height:1px;background:#cfcfcf;"></div>
<div style="top:217.4px;font-size:9px;line-height:9px;color:#d0d0d0;white-space:pre;left:196.5px;">1</div>
<div style="top:226.4px;font-size:9px;line-height:9px;color:#d0d0d0;white-space:pre;left:196.5px;">0</div>
<div style="top:236.4px;font-size:9px;line-height:9px;color:#d0d0d0;white-space:pre;left:196.5px;">0</div>
<div style="top:309.4px;font-size:9px;line-height:9px;color:#d0d0d0;white-space:pre;left:196.5px;">0</div>
<div style="top:409.4px;font-size:9px;line-height:9px;color:#d0d0d0;white-space:pre;left:196.5px;">1</div>
<div style="top:418.4px;font-size:9px;line-height:9px;color:#d0d0d0;white-space:pre;left:196.5px;">0</div>
<div style="top:428.4px;font-size:9px;line-height:9px;color:#d0d0d0;white-space:pre;left:196.5px;">0</div>
<div style="top:509.4px;font-size:9px;line-height:9px;color:#d0d0d0;white-space:pre;left:196.5px;">2</div>
<div style="top:518.4px;font-size:9px;line-height:9px;color:#d0d0d0;white-space:pre;left:196.5px;">0</div>
<div style="top:528.4px;font-size:9px;line-height:9px;color:#d0d0d0;white-space:pre;left:196.5px;">0</div>
<div style="top:609.4px;font-size:9px;line-height:9px;color:#d0d0d0;white-space:pre;left:196.5px;">3</div>
<div style="top:618.4px;font-size:9px;line-height:9px;color:#d0d0d0;white-space:pre;left:196.5px;">0</div>
<div style="top:628.4px;font-size:9px;line-height:9px;color:#d0d0d0;white-space:pre;left:196.5px;">0</div>
<div style="top:709.4px;font-size:9px;line-height:9px;color:#d0d0d0;white-space:pre;left:196.5px;">4</div>
<svg style="left:783px;top:95px;" width="10" height="7" viewBox="0 0 10 7"><path d="M0.5 0.5 L9.5 0.5 L5 6 Z" fill="#e0e0e0"/></svg>
<div style="left:803px;top:89px;width:13px;height:13px;background:#bdbdbd;"></div>
<svg style="left:803px;top:89px;" width="13" height="13" viewBox="0 0 13 13"><circle cx="5.5" cy="5.5" r="3.3" fill="#8a8a8a" stroke="#333" stroke-width="1.4"/><path d="M8 8 L11.5 11.5" stroke="#333" stroke-width="1.8"/></svg>
<div style="left:801px;top:104px;width:16px;height:613px;background:#2b2b2b;"></div>
<div style="left:802px;top:105px;width:14px;height:610px;background:#5d5d5d;border-radius:3px;"></div>
<div style="left:212px;top:716px;width:592px;height:16px;background:#2b2b2b;"></div>
<div style="left:213px;top:717px;width:590px;height:14px;background:#5d5d5d;border-radius:3px;"></div>
<div style="left:193px;top:717px;width:19px;height:15px;background:#454545;"></div>
<div style="left:197px;top:719px;width:12px;height:12px;background:#5a5a5a;border:1px dotted #999;"></div>
<div style="left:804px;top:716px;width:15px;height:16px;background:#454545;"></div>
<svg style="left:804px;top:716px;" width="15" height="16" viewBox="0 0 15 16"><path d="M7.5 2 L13.5 14.5 L7.5 11 L1.5 14.5 Z" fill="#d0d0d0"/></svg>
<div style="left:193px;top:732px;width:626px;height:33px;background:#454545;"></div>
<div style="left:266px;top:735px;width:47px;height:28px;background:#2c2c2c;border-radius:4px;border:1px solid #222;"></div>
<div style="top:745.5px;font-size:10px;line-height:10px;color:#ebebeb;white-space:pre;left:272.90px;transform:scaleX(1.1100);transform-origin:0 0;">px</div>
<svg style="left:293px;top:745px;" width="12" height="8" viewBox="0 0 12 8"><path d="M1 1 L6 6 L11 1" fill="none" stroke="#e8e8e8" stroke-width="1.6"/></svg>
<div style="left:314px;top:735px;width:29px;height:28px;background:#333;"></div>
<div style="left:316px;top:743px;width:25px;height:11px;background:#1d1d1d;"></div>
<div style="top:744.5px;font-size:10px;line-height:10px;color:#ebebeb;white-space:pre;left:315.39px;transform:scaleX(0.9111);transform-origin:0 0;">100 %</div>
<div style="left:343px;top:735px;width:18px;height:28px;background:#2c2c2c;border-radius:4px;border:1px solid #222;"></div>
<svg style="left:346px;top:745px;" width="12" height="8" viewBox="0 0 12 8"><path d="M1 1 L6 6 L11 1" fill="none" stroke="#e8e8e8" stroke-width="1.6"/></svg>
<div style="top:743.8px;font-size:12px;line-height:12px;color:#ebebeb;white-space:pre;left:361.83px;transform:scaleX(0.9714);transform-origin:0 0;">Die Größe des Bildinhaltes ändern</div>
<div style="left:422px;top:307px;width:168px;height:204px;background:#ffffff;"></div>
<svg style="left:422px;top:307px;" width="168" height="204" viewBox="0 0 168 204">
<path d="M107 66 L111 61 L113 53 L116 53 L116 69 L114 69 L113 65 L108 68 Z" fill="#121a24"/>
<g fill="#e06a20"><circle cx="99" cy="60" r="1.8"/><circle cx="101" cy="66" r="1.6"/><circle cx="99" cy="72" r="1.8"/></g>
<path d="M96 83 L103 83 C106 88 107 100 106 112 L96 112 Z" fill="#c62a2a"/>
<path d="M96 97 L101 96 L102 106 L96 107 Z" fill="#e8961e"/>
<path d="M96 95 L108 94 L116 98 L121 105 L122 113 L118 120 L110 123 L109 133 L104 139 L96 139 Z" fill="#2d4f9e" stroke="#1b2f6a" stroke-width="1.2"/>
<path d="M104 104 C110 100 117 106 116 113 C114 119 108 120 105 118 Z" fill="#1c96c6"/>
<path d="M96 139 L104 139 L101 147 L96 154 Z" fill="#e8eef0"/>
<path d="M98 141 L103 136 M97 150 L102 142" stroke="#5aa8b0" stroke-width="1"/>
<path d="M114 145 L118 141 L130 141 L134 137 L140 138 L143 142 L150 143 L150 155 L147 163 L144 171 L136 178 L128 182 L118 184 L96 184 L96 161 L104 164 L114 163 Z" fill="#e4973a" stroke="#d4561e" stroke-width="1.4"/>
<path d="M96 180 L114 164" stroke="#f2c040" stroke-width="1.3"/>
<text x="115" y="132" font-family="Liberation Serif" font-size="10" fill="#3a3a3a" textLength="34">enCrafts</text>
</svg>
<div style="left:422px;top:307px;width:168px;height:204px;border:1px dashed #000;"></div>
<div style="left:189px;top:386px;width:3px;height:4px;background:#a8a8a8;"></div>
<div style="left:189px;top:393px;width:3px;height:4px;background:#a8a8a8;"></div>
<div style="left:189px;top:400px;width:3px;height:4px;background:#a8a8a8;"></div>
<div style="left:816px;top:26px;width:208px;height:739px;background:#454545;"></div>
<div style="left:818px;top:85px;width:1px;height:680px;background:#3a3a3a;"></div>
<div style="left:819px;top:84px;width:1px;height:681px;background:#505050;"></div>
<div style="left:822px;top:27px;width:1px;height:738px;background:#575757;"></div>
<div style="left:822px;top:27px;width:23px;height:24px;background:#3f3f3f;border:1px solid #595959;border-bottom:none;"></div>
<div style="left:845px;top:30px;width:20px;height:20px;background:#2d2d2d;"></div>
<div style="left:866px;top:30px;width:20px;height:20px;background:#2d2d2d;"></div>
<div style="left:887px;top:30px;width:19px;height:20px;background:#2d2d2d;"></div>
<div style="left:822px;top:50px;width:202px;height:311px;background:#3e3e3e;border:1px solid #575757;border-right:1px solid #333;"></div>
<div style="left:845px;top:50px;width:179px;height:1px;background:#575757;"></div>
<div style="left:826px;top:31px;width:15px;height:15px;background:#fff;border:1px solid #000;"></div>
<svg style="left:827px;top:32px;" width="13" height="13" viewBox="0 0 13 13"><defs><radialGradient id="rg1"><stop offset="0" stop-color="#000"/><stop offset="0.25" stop-color="#000"/><stop offset="1" stop-color="#fff"/></radialGradient></defs><circle cx="6.5" cy="6.5" r="5.5" fill="url(#rg1)"/></svg>
<svg style="left:847px;top:32px;" width="15" height="14" viewBox="0 0 15 14"><defs><linearGradient id="lg1"><stop offset="0" stop-color="#d86818"/><stop offset="0.2" stop-color="#ffd040"/><stop offset="0.45" stop-color="#ffb040"/><stop offset="0.6" stop-color="#ffc850"/><stop offset="0.8" stop-color="#ff9830"/><stop offset="1" stop-color="#ffd860"/></linearGradient></defs><rect x="0.5" y="0.5" width="14" height="13" fill="url(#lg1)" stroke="#000" stroke-width="1"/></svg>
<div style="left:868px;top:32px;width:15px;height:15px;background:#fff;border:1px solid #000;"></div>
<div style="left:869px;top:34px;font-size:9px;line-height:10px;color:#333;letter-spacing:-0.5px;">Aa</div>
<svg style="left:889px;top:32px;" width="14" height="14" viewBox="0 0 14 14"><circle cx="6.8" cy="7" r="5.9" fill="none" stroke="#b4b4b4" stroke-width="1.3"/><path d="M4.8 5.3 C4.8 3.2 8.8 3.2 8.8 5.3 C8.8 6.8 6.8 6.8 6.8 8.5" fill="none" stroke="#b4b4b4" stroke-width="1.5"/><circle cx="6.8" cy="10.3" r="0.9" fill="#b4b4b4"/></svg>
<div style="left:1009px;top:34px;width:11px;height:11px;border:1px solid #bbb;"></div>
<svg style="left:1009px;top:34px;" width="11" height="11" viewBox="0 0 11 11"><path d="M7.5 2.5 L7.5 8.5 L2.5 5.5 Z" fill="#bbb"/></svg>
<div style="left:827px;top:55px;width:193px;height:17px;background:#1f1f1f;"></div>
<div style="top:57.8px;font-size:12px;line-height:12px;color:#808080;white-space:pre;font-style:italic;left:828.00px;transform:scaleX(0.9815);transform-origin:0 0;">Filter</div>
<svg style="left:1007px;top:60px;" width="12" height="8" viewBox="0 0 12 8"><path d="M1 1 L6 6 L11 1" fill="none" stroke="#e8e8e8" stroke-width="1.6"/></svg>
<div style="top:75.8px;font-size:12px;line-height:12px;color:#ebebeb;white-space:pre;font-style:italic;left:826.30px;transform:scaleX(0.9173);transform-origin:0 0;">2. Hardness 050 (51 × 51)</div>
<div style="left:826px;top:90px;width:170px;height:207px;background:#ffffff;"></div>
<div style="left:996px;top:90px;width:11px;height:207px;background:#3b3b3b;"></div>
<div style="left:1007px;top:90px;width:15px;height:207px;background:#262626;"></div>
<div style="left:1008px;top:90px;width:13px;height:104px;background:#5c5c5c;border-radius:3px;"></div>
<svg style="left:826px;top:90px;overflow:hidden;" width="170" height="207" viewBox="0 0 170 207"><rect x="83" y="14" width="3" height="3" fill="#000"/><rect x="105" y="13" width="29" height="7" fill="#000"/><defs><radialGradient id="rg2"><stop offset="0" stop-color="#000"/><stop offset="0.5" stop-color="#000"/><stop offset="1" stop-color="#fff" stop-opacity="0"/></radialGradient><radialGradient id="rg3"><stop offset="0" stop-color="#000"/><stop offset="0.12" stop-color="#000"/><stop offset="1" stop-color="#fff" stop-opacity="0"/></radialGradient><radialGradient id="rg4"><stop offset="0" stop-color="#000"/><stop offset="0.35" stop-color="#111"/><stop offset="1" stop-color="#fff" stop-opacity="0"/></radialGradient></defs><ellipse cx="153" cy="16" rx="14" ry="6.5" fill="url(#rg2)"/><path d="M98 31 L98 25 L92 31 Z" fill="#7aa0ff"/><rect x="130.5" y="29.25" width="5" height="1.5" fill="#223"/><rect x="132.25" y="27.5" width="1.5" height="5" fill="#223"/><rect x="164.5" y="29.25" width="5" height="1.5" fill="#223"/><rect x="166.25" y="27.5" width="1.5" height="5" fill="#223"/><rect x="3" y="49" width="29" height="1.5" fill="#111"/><circle cx="51" cy="51" r="15" fill="url(#rg3)"/><circle cx="85" cy="51" r="15" fill="url(#rg4)"/><rect x="68.5" y="34.5" width="33" height="33" fill="none" stroke="#000" stroke-width="1"/><circle cx="119" cy="51" r="15" fill="url(#rg2)"/><circle cx="153" cy="51" r="15.5" fill="#000"/><rect x="30" y="63" width="4" height="4" fill="#7090ff" opacity="0.6"/><rect x="28.5" y="63.25" width="5" height="1.5" fill="#112"/><rect x="30.25" y="61.5" width="1.5" height="5" fill="#112"/><rect x="64" y="63" width="4" height="4" fill="#7090ff" opacity="0.6"/><rect x="62.5" y="63.25" width="5" height="1.5" fill="#112"/><rect x="64.25" y="61.5" width="1.5" height="5" fill="#112"/><rect x="98" y="63" width="4" height="4" fill="#7090ff" opacity="0.6"/><rect x="96.5" y="63.25" width="5" height="1.5" fill="#112"/><rect x="98.25" y="61.5" width="1.5" height="5" fill="#112"/><rect x="132" y="63" width="4" height="4" fill="#7090ff" opacity="0.6"/><rect x="130.5" y="63.25" width="5" height="1.5" fill="#112"/><rect x="132.25" y="61.5" width="1.5" height="5" fill="#112"/><rect x="166" y="63" width="4" height="4" fill="#7090ff" opacity="0.6"/><rect x="164.5" y="63.25" width="5" height="1.5" fill="#112"/><rect x="166.25" y="61.5" width="1.5" height="5" fill="#112"/><polygon points="17.4,70.0 20.9,79.1 30.7,79.7 23.1,85.9 25.6,95.3 17.4,90.0 9.2,95.3 11.7,85.9 4.1,79.7 13.9,79.1" fill="#000"/><g fill="#000" fill-opacity="0.6"><circle cx="52.4" cy="87.6" r="0.6"/><circle cx="47.1" cy="78.2" r="0.4"/><circle cx="60.4" cy="82.7" r="0.5"/><circle cx="53.4" cy="96.6" r="0.7"/><circle cx="54.6" cy="77.7" r="0.9"/><circle cx="55.7" cy="87.1" r="1.1"/><circle cx="44.8" cy="80.9" r="0.9"/><circle cx="58.9" cy="84.9" r="0.8"/><circle cx="51.6" cy="83.1" r="1.1"/><circle cx="45.0" cy="83.2" r="1.1"/><circle cx="49.8" cy="72.2" r="0.7"/><circle cx="53.5" cy="77.4" r="1.1"/><circle cx="53.5" cy="80.6" r="0.4"/><circle cx="54.4" cy="93.3" r="0.7"/><circle cx="49.4" cy="79.3" r="0.8"/><circle cx="48.9" cy="84.7" r="0.8"/><circle cx="43.7" cy="77.1" r="0.9"/><circle cx="59.9" cy="78.2" r="1.2"/><circle cx="50.7" cy="79.7" r="1.1"/><circle cx="61.4" cy="79.9" r="0.8"/><circle cx="51.3" cy="79.0" r="1.0"/><circle cx="48.7" cy="80.4" r="0.4"/><circle cx="60.2" cy="71.3" r="0.4"/><circle cx="53.4" cy="77.7" r="0.4"/><circle cx="49.9" cy="89.3" r="1.1"/><circle cx="57.9" cy="83.7" r="0.3"/><circle cx="51.2" cy="78.1" r="1.1"/><circle cx="57.2" cy="81.4" r="1.2"/><circle cx="51.3" cy="83.7" r="0.8"/><circle cx="54.9" cy="82.6" r="0.7"/><circle cx="50.0" cy="80.3" r="0.3"/><circle cx="54.6" cy="79.2" r="1.2"/><circle cx="55.4" cy="79.4" r="0.7"/><circle cx="45.7" cy="81.2" r="0.8"/><circle cx="46.2" cy="79.8" r="1.1"/><circle cx="47.3" cy="81.8" r="0.9"/><circle cx="52.3" cy="85.8" r="1.2"/><circle cx="46.4" cy="81.3" r="0.3"/><circle cx="47.0" cy="85.0" r="0.3"/><circle cx="47.3" cy="77.8" r="0.4"/><circle cx="48.5" cy="78.4" r="0.9"/><circle cx="47.8" cy="87.6" r="1.0"/><circle cx="53.6" cy="82.2" r="0.9"/><circle cx="55.3" cy="81.2" r="0.7"/><circle cx="48.7" cy="79.9" r="0.6"/><circle cx="50.4" cy="85.9" r="0.8"/><circle cx="50.7" cy="86.1" r="1.0"/><circle cx="57.7" cy="83.0" r="1.0"/><circle cx="50.8" cy="84.9" r="1.0"/><circle cx="52.2" cy="84.9" r="0.7"/><circle cx="51.3" cy="80.0" r="0.6"/><circle cx="47.8" cy="89.3" r="0.7"/><circle cx="53.7" cy="79.9" r="0.6"/><circle cx="46.6" cy="74.5" r="0.7"/><circle cx="52.4" cy="84.2" r="0.8"/><circle cx="54.9" cy="89.5" r="1.1"/><circle cx="53.5" cy="85.3" r="1.0"/><circle cx="46.9" cy="75.7" r="0.6"/><circle cx="54.5" cy="84.7" r="1.0"/><circle cx="51.5" cy="86.1" r="0.7"/><circle cx="48.0" cy="84.2" r="1.1"/><circle cx="52.2" cy="82.4" r="1.1"/><circle cx="61.5" cy="73.0" r="0.7"/><circle cx="61.7" cy="78.9" r="0.5"/><circle cx="51.8" cy="73.5" r="0.9"/><circle cx="48.4" cy="81.6" r="0.6"/><circle cx="52.2" cy="83.7" r="0.8"/><circle cx="50.1" cy="89.9" r="0.3"/><circle cx="57.6" cy="78.1" r="1.1"/><circle cx="59.6" cy="76.2" r="0.8"/><circle cx="59.3" cy="82.6" r="0.5"/><circle cx="50.0" cy="88.2" r="0.8"/><circle cx="43.0" cy="87.4" r="0.9"/><circle cx="50.2" cy="84.8" r="1.1"/><circle cx="44.3" cy="83.1" r="0.6"/><circle cx="53.8" cy="87.2" r="1.0"/><circle cx="55.7" cy="88.9" r="1.1"/><circle cx="54.9" cy="74.2" r="0.3"/><circle cx="45.9" cy="75.6" r="0.3"/><circle cx="51.5" cy="85.5" r="0.8"/><circle cx="47.5" cy="84.3" r="1.0"/><circle cx="53.5" cy="82.0" r="0.4"/><circle cx="53.2" cy="83.2" r="1.2"/><circle cx="53.2" cy="80.5" r="0.8"/><circle cx="50.4" cy="85.5" r="0.6"/><circle cx="48.4" cy="77.3" r="0.6"/><circle cx="53.4" cy="85.7" r="0.4"/><circle cx="45.4" cy="79.6" r="0.6"/><circle cx="54.4" cy="83.3" r="0.6"/><circle cx="45.8" cy="77.3" r="0.6"/><circle cx="54.0" cy="76.1" r="0.7"/><circle cx="48.4" cy="85.7" r="0.9"/><circle cx="46.0" cy="85.3" r="0.7"/><circle cx="52.2" cy="87.5" r="0.9"/><circle cx="56.2" cy="84.0" r="0.7"/><circle cx="59.6" cy="74.8" r="0.6"/><circle cx="58.3" cy="77.3" r="0.5"/><circle cx="49.8" cy="82.5" r="1.0"/><circle cx="47.1" cy="74.1" r="1.0"/><circle cx="48.4" cy="75.7" r="0.8"/><circle cx="56.7" cy="85.6" r="0.3"/><circle cx="56.8" cy="88.0" r="0.3"/><circle cx="53.7" cy="83.1" r="1.1"/><circle cx="52.4" cy="82.9" r="1.1"/><circle cx="58.2" cy="87.9" r="0.9"/><circle cx="57.7" cy="72.6" r="0.8"/><circle cx="52.4" cy="80.8" r="1.0"/><circle cx="45.0" cy="81.5" r="0.4"/><circle cx="51.9" cy="71.6" r="0.4"/><circle cx="49.4" cy="87.1" r="1.0"/><circle cx="52.1" cy="84.8" r="0.5"/><circle cx="46.5" cy="77.0" r="0.7"/><circle cx="49.0" cy="85.3" r="0.6"/><circle cx="50.4" cy="82.9" r="0.8"/><circle cx="56.5" cy="81.2" r="1.0"/><circle cx="55.6" cy="87.8" r="1.0"/><circle cx="49.5" cy="77.2" r="0.7"/><circle cx="46.1" cy="74.6" r="0.4"/><circle cx="58.1" cy="86.2" r="1.1"/><circle cx="47.2" cy="81.5" r="0.9"/><circle cx="53.4" cy="85.2" r="0.5"/><circle cx="48.7" cy="80.0" r="0.5"/><circle cx="48.0" cy="71.7" r="0.6"/><circle cx="50.7" cy="77.6" r="1.1"/><circle cx="49.0" cy="80.2" r="0.5"/><circle cx="57.0" cy="82.7" r="0.6"/><circle cx="54.0" cy="85.7" r="0.6"/><circle cx="52.4" cy="79.6" r="1.2"/><circle cx="46.0" cy="82.8" r="0.7"/><circle cx="56.2" cy="74.9" r="0.8"/><circle cx="45.0" cy="82.8" r="1.1"/><circle cx="46.1" cy="86.2" r="1.2"/><circle cx="48.9" cy="82.7" r="0.5"/><circle cx="50.7" cy="75.5" r="1.2"/><circle cx="54.0" cy="79.4" r="0.5"/><circle cx="51.8" cy="84.9" r="0.9"/><circle cx="58.0" cy="74.6" r="0.5"/><circle cx="54.6" cy="79.1" r="0.7"/><circle cx="51.8" cy="80.1" r="0.4"/><circle cx="53.9" cy="78.8" r="0.6"/><circle cx="46.2" cy="78.8" r="0.3"/><circle cx="49.6" cy="86.1" r="0.7"/><circle cx="53.5" cy="87.7" r="1.2"/><circle cx="47.7" cy="85.5" r="0.4"/><circle cx="51.0" cy="88.5" r="0.4"/><circle cx="59.4" cy="75.7" r="0.4"/><circle cx="56.0" cy="80.4" r="1.0"/><circle cx="52.2" cy="78.3" r="0.9"/><circle cx="47.4" cy="75.4" r="0.5"/><circle cx="52.3" cy="70.7" r="0.9"/><circle cx="49.9" cy="81.5" r="0.7"/><circle cx="47.8" cy="87.7" r="0.9"/><circle cx="49.4" cy="80.9" r="0.9"/><circle cx="50.1" cy="80.0" r="1.1"/><circle cx="50.7" cy="80.1" r="1.1"/><circle cx="54.5" cy="85.1" r="0.9"/><circle cx="47.4" cy="78.8" r="0.9"/><circle cx="48.3" cy="83.0" r="0.5"/><circle cx="58.4" cy="84.9" r="1.0"/><circle cx="45.0" cy="80.0" r="0.6"/><circle cx="51.6" cy="86.3" r="1.1"/><circle cx="57.1" cy="83.4" r="0.5"/><circle cx="52.5" cy="77.9" r="0.6"/><circle cx="47.4" cy="85.2" r="1.0"/><circle cx="46.8" cy="88.9" r="0.4"/><circle cx="51.7" cy="84.0" r="0.4"/><circle cx="53.3" cy="75.0" r="0.5"/><circle cx="53.7" cy="86.3" r="1.0"/><circle cx="55.0" cy="75.2" r="0.8"/><circle cx="54.7" cy="85.6" r="0.5"/><circle cx="46.3" cy="81.0" r="0.5"/><circle cx="52.0" cy="89.8" r="0.3"/><circle cx="55.1" cy="73.2" r="1.2"/><circle cx="47.8" cy="85.8" r="0.8"/><circle cx="43.9" cy="72.9" r="0.9"/><circle cx="49.3" cy="90.4" r="0.7"/><circle cx="46.2" cy="77.7" r="0.3"/><circle cx="52.8" cy="75.5" r="0.7"/><circle cx="47.1" cy="81.3" r="0.5"/><circle cx="50.8" cy="81.8" r="0.8"/><circle cx="49.1" cy="78.2" r="0.8"/><circle cx="61.1" cy="79.6" r="0.4"/><circle cx="53.6" cy="76.0" r="0.3"/><circle cx="49.9" cy="84.5" r="0.4"/><circle cx="42.1" cy="79.5" r="0.6"/><circle cx="56.7" cy="77.0" r="0.4"/><circle cx="55.8" cy="77.3" r="1.1"/><circle cx="50.5" cy="74.9" r="0.6"/><circle cx="55.6" cy="72.3" r="1.1"/><circle cx="45.1" cy="84.9" r="0.7"/><circle cx="53.0" cy="82.8" r="0.4"/><circle cx="52.8" cy="84.5" r="0.7"/><circle cx="50.3" cy="76.8" r="0.7"/><circle cx="49.8" cy="78.9" r="0.7"/><circle cx="52.2" cy="77.5" r="0.5"/><circle cx="57.7" cy="77.8" r="0.6"/><circle cx="48.2" cy="86.0" r="0.8"/><circle cx="52.1" cy="82.3" r="0.5"/><circle cx="52.5" cy="79.6" r="0.7"/><circle cx="53.0" cy="84.9" r="0.5"/><circle cx="49.8" cy="83.5" r="0.3"/><circle cx="54.1" cy="83.7" r="0.7"/><circle cx="52.9" cy="82.3" r="0.7"/><circle cx="46.2" cy="85.8" r="0.3"/><circle cx="48.3" cy="84.6" r="0.3"/><circle cx="55.1" cy="81.3" r="0.4"/><circle cx="49.4" cy="82.4" r="0.9"/><circle cx="50.7" cy="83.9" r="0.3"/><circle cx="51.5" cy="78.5" r="1.0"/><circle cx="41.9" cy="84.2" r="0.6"/><circle cx="52.0" cy="85.5" r="1.0"/><circle cx="49.2" cy="79.0" r="0.4"/><circle cx="47.2" cy="71.3" r="0.8"/><circle cx="53.1" cy="82.0" r="0.4"/><circle cx="52.6" cy="83.1" r="0.3"/><circle cx="46.6" cy="74.1" r="0.5"/><circle cx="57.0" cy="81.2" r="1.0"/><circle cx="61.2" cy="76.8" r="0.3"/><circle cx="50.0" cy="87.7" r="1.2"/><circle cx="55.2" cy="83.9" r="1.1"/><circle cx="55.3" cy="84.9" r="0.6"/><circle cx="47.7" cy="72.8" r="0.5"/><circle cx="51.5" cy="74.8" r="1.1"/><circle cx="42.5" cy="78.7" r="0.6"/><circle cx="49.2" cy="83.6" r="1.0"/><circle cx="48.5" cy="82.4" r="0.5"/><circle cx="50.9" cy="76.0" r="0.9"/><circle cx="48.1" cy="85.4" r="0.4"/><circle cx="51.8" cy="81.1" r="0.7"/><circle cx="52.4" cy="75.3" r="0.4"/><circle cx="52.7" cy="90.5" r="0.9"/><circle cx="58.5" cy="75.8" r="0.7"/><circle cx="57.8" cy="77.6" r="0.6"/><circle cx="50.8" cy="83.3" r="0.7"/><circle cx="54.0" cy="81.4" r="0.8"/><circle cx="53.4" cy="83.2" r="0.9"/><circle cx="52.1" cy="83.4" r="0.4"/><circle cx="48.4" cy="77.3" r="0.3"/><circle cx="53.5" cy="93.5" r="0.5"/><circle cx="47.7" cy="80.2" r="1.0"/><circle cx="45.8" cy="77.2" r="0.8"/><circle cx="53.1" cy="84.6" r="0.4"/><circle cx="53.0" cy="80.1" r="0.3"/><circle cx="54.9" cy="81.4" r="1.1"/><circle cx="56.3" cy="84.6" r="0.5"/><circle cx="54.9" cy="76.6" r="0.9"/><circle cx="52.6" cy="73.0" r="0.6"/><circle cx="48.2" cy="79.1" r="0.4"/><circle cx="55.1" cy="76.9" r="1.0"/><circle cx="53.5" cy="87.3" r="0.7"/><circle cx="51.8" cy="80.2" r="0.6"/><circle cx="50.3" cy="82.2" r="0.8"/><circle cx="51.6" cy="77.4" r="0.9"/><circle cx="49.6" cy="80.1" r="0.6"/><circle cx="56.0" cy="81.9" r="0.7"/><circle cx="54.7" cy="83.6" r="0.4"/><circle cx="58.5" cy="79.0" r="1.1"/><circle cx="58.1" cy="81.5" r="1.1"/><circle cx="47.5" cy="81.0" r="1.2"/><circle cx="60.9" cy="75.8" r="0.7"/><circle cx="52.7" cy="77.5" r="1.2"/><circle cx="55.2" cy="80.2" r="1.1"/><circle cx="52.8" cy="83.8" r="1.0"/><circle cx="50.5" cy="87.2" r="0.9"/><circle cx="59.1" cy="83.9" r="0.5"/><circle cx="48.3" cy="83.7" r="1.0"/><circle cx="51.9" cy="78.3" r="0.4"/><circle cx="50.6" cy="86.4" r="0.4"/><circle cx="56.3" cy="88.2" r="0.9"/><circle cx="64.3" cy="80.2" r="1.1"/><circle cx="50.2" cy="83.9" r="0.6"/><circle cx="46.7" cy="83.2" r="0.8"/><circle cx="46.5" cy="88.7" r="0.6"/><circle cx="43.0" cy="84.1" r="1.0"/><circle cx="51.0" cy="85.2" r="1.0"/><circle cx="54.4" cy="82.1" r="0.8"/><circle cx="49.4" cy="81.4" r="0.3"/><circle cx="54.2" cy="89.3" r="0.7"/><circle cx="59.7" cy="81.0" r="1.2"/><circle cx="54.8" cy="82.6" r="0.3"/><circle cx="48.3" cy="83.7" r="0.3"/><circle cx="50.1" cy="81.4" r="0.6"/><circle cx="52.1" cy="90.0" r="0.7"/><circle cx="51.9" cy="83.3" r="0.7"/><circle cx="47.4" cy="77.2" r="1.1"/><circle cx="53.2" cy="78.9" r="0.4"/><circle cx="52.4" cy="74.2" r="0.8"/><circle cx="54.7" cy="77.1" r="0.6"/><circle cx="52.4" cy="82.7" r="0.9"/><circle cx="59.7" cy="76.2" r="0.7"/><circle cx="46.8" cy="73.2" r="1.0"/><circle cx="48.3" cy="79.2" r="0.8"/><circle cx="53.3" cy="84.5" r="0.9"/><circle cx="57.6" cy="81.7" r="0.7"/><circle cx="49.1" cy="85.9" r="1.0"/><circle cx="41.3" cy="85.3" r="0.4"/><circle cx="49.9" cy="87.0" r="0.7"/><circle cx="56.9" cy="75.3" r="1.1"/><circle cx="51.2" cy="81.3" r="0.8"/><circle cx="47.1" cy="80.4" r="0.6"/><circle cx="49.5" cy="72.5" r="0.4"/><circle cx="49.9" cy="78.3" r="0.8"/><circle cx="61.0" cy="75.1" r="0.9"/><circle cx="55.4" cy="91.4" r="0.5"/><circle cx="45.8" cy="87.6" r="0.6"/><circle cx="50.6" cy="92.8" r="1.1"/><circle cx="50.2" cy="86.0" r="0.6"/><circle cx="54.3" cy="84.5" r="1.2"/><circle cx="54.8" cy="83.5" r="0.5"/><circle cx="56.8" cy="84.6" r="1.0"/><circle cx="55.3" cy="76.7" r="1.0"/><circle cx="55.6" cy="82.1" r="1.2"/><circle cx="55.2" cy="83.5" r="0.7"/><circle cx="51.4" cy="87.6" r="0.3"/><circle cx="53.0" cy="93.1" r="0.4"/><circle cx="54.3" cy="80.4" r="1.2"/><circle cx="49.1" cy="76.3" r="0.4"/><circle cx="59.1" cy="84.5" r="0.5"/><circle cx="55.1" cy="89.7" r="1.1"/><circle cx="62.8" cy="85.4" r="0.8"/></g><g fill="#000" fill-opacity="0.45"><circle cx="84.2" cy="85.1" r="0.6"/><circle cx="90.2" cy="83.8" r="0.4"/><circle cx="87.7" cy="85.4" r="0.6"/><circle cx="87.8" cy="83.3" r="0.5"/><circle cx="102.4" cy="79.8" r="1.1"/><circle cx="86.1" cy="87.1" r="1.1"/><circle cx="78.0" cy="84.5" r="0.6"/><circle cx="90.7" cy="84.4" r="0.9"/><circle cx="87.3" cy="79.8" r="0.7"/><circle cx="80.6" cy="83.1" r="0.7"/><circle cx="87.7" cy="82.1" r="0.8"/><circle cx="95.2" cy="81.3" r="0.4"/><circle cx="95.7" cy="82.5" r="0.4"/><circle cx="85.7" cy="86.2" r="0.3"/><circle cx="91.3" cy="83.5" r="1.0"/><circle cx="86.7" cy="84.4" r="1.0"/><circle cx="90.4" cy="74.1" r="0.8"/><circle cx="77.3" cy="83.1" r="0.4"/><circle cx="80.6" cy="83.1" r="0.4"/><circle cx="82.3" cy="82.3" r="0.7"/><circle cx="82.8" cy="86.1" r="0.6"/><circle cx="74.3" cy="78.5" r="1.0"/><circle cx="92.4" cy="79.2" r="0.5"/><circle cx="90.1" cy="83.6" r="0.4"/><circle cx="77.6" cy="84.0" r="0.6"/><circle cx="83.4" cy="81.9" r="1.1"/><circle cx="80.3" cy="85.1" r="0.7"/><circle cx="96.8" cy="77.1" r="0.7"/><circle cx="79.3" cy="85.7" r="0.4"/><circle cx="77.0" cy="86.9" r="0.9"/><circle cx="95.5" cy="86.4" r="0.6"/><circle cx="90.9" cy="83.6" r="0.5"/><circle cx="75.7" cy="81.9" r="0.6"/><circle cx="91.5" cy="80.1" r="0.6"/><circle cx="84.1" cy="87.8" r="0.6"/><circle cx="80.8" cy="87.5" r="1.0"/><circle cx="83.5" cy="83.1" r="0.5"/><circle cx="81.1" cy="87.3" r="0.4"/><circle cx="90.0" cy="85.4" r="0.5"/><circle cx="92.3" cy="84.8" r="1.0"/><circle cx="77.7" cy="82.8" r="1.0"/><circle cx="92.0" cy="77.7" r="0.7"/><circle cx="84.9" cy="82.5" r="1.0"/><circle cx="81.8" cy="86.6" r="1.0"/><circle cx="85.2" cy="86.1" r="1.0"/><circle cx="84.2" cy="83.2" r="0.3"/><circle cx="85.6" cy="84.3" r="1.0"/><circle cx="87.7" cy="86.4" r="0.6"/><circle cx="80.5" cy="83.7" r="0.8"/><circle cx="83.0" cy="81.0" r="0.4"/><circle cx="93.9" cy="83.3" r="0.4"/><circle cx="77.9" cy="86.0" r="1.1"/><circle cx="86.7" cy="84.2" r="0.7"/><circle cx="76.3" cy="87.3" r="1.0"/><circle cx="83.4" cy="87.0" r="0.8"/><circle cx="88.6" cy="82.5" r="0.6"/><circle cx="92.3" cy="86.5" r="0.3"/><circle cx="91.8" cy="82.4" r="0.8"/><circle cx="89.2" cy="85.2" r="0.7"/><circle cx="90.0" cy="80.8" r="0.5"/><circle cx="93.6" cy="83.4" r="0.7"/><circle cx="87.3" cy="86.7" r="1.0"/><circle cx="90.3" cy="87.0" r="0.8"/><circle cx="80.6" cy="88.5" r="1.0"/><circle cx="91.3" cy="79.7" r="0.5"/><circle cx="91.1" cy="85.3" r="0.5"/><circle cx="89.6" cy="90.3" r="0.5"/><circle cx="91.4" cy="77.0" r="0.4"/><circle cx="90.5" cy="82.3" r="0.5"/><circle cx="86.6" cy="84.9" r="0.7"/><circle cx="78.4" cy="88.3" r="1.0"/><circle cx="90.9" cy="85.2" r="0.6"/><circle cx="87.7" cy="86.3" r="0.5"/><circle cx="84.4" cy="81.1" r="0.4"/><circle cx="87.0" cy="87.5" r="0.8"/><circle cx="86.2" cy="89.2" r="0.5"/><circle cx="82.6" cy="80.0" r="0.4"/><circle cx="86.0" cy="80.7" r="0.7"/><circle cx="80.0" cy="81.3" r="0.7"/><circle cx="94.6" cy="86.0" r="1.0"/><circle cx="79.2" cy="84.3" r="0.5"/><circle cx="92.3" cy="81.0" r="0.5"/><circle cx="92.2" cy="75.1" r="0.6"/><circle cx="92.0" cy="83.9" r="0.4"/><circle cx="85.0" cy="81.0" r="0.9"/><circle cx="83.9" cy="83.2" r="0.7"/><circle cx="89.5" cy="80.9" r="0.7"/><circle cx="89.7" cy="81.3" r="0.7"/><circle cx="77.6" cy="80.9" r="0.5"/><circle cx="93.3" cy="87.1" r="0.7"/><circle cx="82.4" cy="90.7" r="1.0"/><circle cx="71.0" cy="81.4" r="1.0"/><circle cx="85.9" cy="81.2" r="0.3"/><circle cx="82.3" cy="79.1" r="0.6"/><circle cx="79.3" cy="84.6" r="0.5"/><circle cx="83.8" cy="79.9" r="0.6"/><circle cx="91.1" cy="86.7" r="0.6"/><circle cx="85.5" cy="82.0" r="0.6"/><circle cx="87.8" cy="87.2" r="0.8"/><circle cx="87.4" cy="84.7" r="0.7"/><circle cx="87.8" cy="87.8" r="0.4"/><circle cx="91.2" cy="86.4" r="1.0"/><circle cx="90.2" cy="81.0" r="0.6"/><circle cx="89.8" cy="85.1" r="0.6"/><circle cx="88.4" cy="83.4" r="1.1"/><circle cx="80.5" cy="84.5" r="0.5"/><circle cx="89.2" cy="83.5" r="0.8"/><circle cx="82.5" cy="83.8" r="0.5"/><circle cx="95.1" cy="83.5" r="0.9"/><circle cx="87.9" cy="83.1" r="0.9"/><circle cx="86.0" cy="81.6" r="0.7"/><circle cx="90.6" cy="83.5" r="0.9"/><circle cx="89.9" cy="88.3" r="0.5"/><circle cx="81.0" cy="83.8" r="1.0"/><circle cx="85.8" cy="80.1" r="0.8"/><circle cx="77.6" cy="86.6" r="0.5"/><circle cx="79.4" cy="82.8" r="0.6"/><circle cx="89.0" cy="84.6" r="0.8"/><circle cx="88.1" cy="89.5" r="0.7"/><circle cx="95.6" cy="82.1" r="0.9"/><circle cx="84.9" cy="84.7" r="0.7"/><circle cx="85.7" cy="76.5" r="0.5"/><circle cx="93.9" cy="91.8" r="0.9"/><circle cx="77.5" cy="84.5" r="0.4"/><circle cx="78.6" cy="82.6" r="0.8"/><circle cx="87.5" cy="85.5" r="0.8"/><circle cx="88.1" cy="82.8" r="0.3"/><circle cx="93.9" cy="86.9" r="0.6"/><circle cx="70.0" cy="86.9" r="0.8"/><circle cx="85.3" cy="89.2" r="0.3"/><circle cx="84.4" cy="89.1" r="0.4"/><circle cx="92.1" cy="84.8" r="0.6"/><circle cx="88.4" cy="83.7" r="0.9"/><circle cx="78.8" cy="87.9" r="0.7"/><circle cx="83.7" cy="81.4" r="0.5"/><circle cx="77.1" cy="85.8" r="0.6"/><circle cx="86.7" cy="87.4" r="0.4"/><circle cx="83.3" cy="88.0" r="0.7"/><circle cx="82.5" cy="82.4" r="0.3"/><circle cx="90.7" cy="84.5" r="0.5"/><circle cx="82.3" cy="82.9" r="0.9"/><circle cx="79.9" cy="81.1" r="0.9"/><circle cx="80.6" cy="83.5" r="0.5"/><circle cx="94.5" cy="86.3" r="0.7"/><circle cx="95.6" cy="88.5" r="0.8"/><circle cx="82.0" cy="81.5" r="0.4"/><circle cx="89.1" cy="84.0" r="0.6"/><circle cx="88.6" cy="84.0" r="0.7"/><circle cx="82.1" cy="84.3" r="1.0"/><circle cx="85.3" cy="84.3" r="0.7"/><circle cx="94.1" cy="84.2" r="1.0"/><circle cx="87.3" cy="83.4" r="0.8"/><circle cx="84.0" cy="87.6" r="0.5"/><circle cx="85.1" cy="85.7" r="0.8"/><circle cx="97.4" cy="88.5" r="0.3"/><circle cx="89.3" cy="83.5" r="0.4"/><circle cx="85.8" cy="79.9" r="0.9"/><circle cx="78.7" cy="83.8" r="0.4"/><circle cx="83.1" cy="80.5" r="1.1"/><circle cx="87.9" cy="84.0" r="0.8"/><circle cx="90.9" cy="82.4" r="0.9"/><circle cx="81.2" cy="82.8" r="0.7"/><circle cx="85.0" cy="83.5" r="0.5"/><circle cx="85.7" cy="81.4" r="0.7"/><circle cx="85.8" cy="87.1" r="0.8"/><circle cx="85.5" cy="75.6" r="0.7"/><circle cx="87.4" cy="86.9" r="0.3"/><circle cx="86.5" cy="88.4" r="0.8"/><circle cx="86.2" cy="86.1" r="0.4"/><circle cx="88.7" cy="87.5" r="0.5"/><circle cx="91.0" cy="81.1" r="0.6"/><circle cx="84.7" cy="84.4" r="0.9"/><circle cx="86.0" cy="80.8" r="0.9"/><circle cx="85.5" cy="86.3" r="0.5"/><circle cx="88.3" cy="88.3" r="0.8"/><circle cx="85.7" cy="82.5" r="0.9"/><circle cx="81.0" cy="84.4" r="0.7"/><circle cx="82.8" cy="84.9" r="0.6"/><circle cx="81.0" cy="79.8" r="1.0"/><circle cx="89.7" cy="90.6" r="0.9"/><circle cx="82.7" cy="75.0" r="0.4"/><circle cx="87.8" cy="77.0" r="0.4"/><circle cx="75.6" cy="79.5" r="0.5"/><circle cx="92.9" cy="78.3" r="0.6"/><circle cx="88.2" cy="85.8" r="1.0"/><circle cx="82.0" cy="85.4" r="0.7"/><circle cx="89.6" cy="82.9" r="0.3"/><circle cx="90.3" cy="83.1" r="0.6"/><circle cx="90.2" cy="83.6" r="0.4"/><circle cx="89.0" cy="82.4" r="0.5"/><circle cx="89.5" cy="83.1" r="1.0"/><circle cx="83.8" cy="86.5" r="0.5"/><circle cx="79.6" cy="82.9" r="0.6"/><circle cx="81.6" cy="83.9" r="1.0"/><circle cx="93.9" cy="81.7" r="1.0"/><circle cx="89.6" cy="85.1" r="0.5"/><circle cx="93.7" cy="91.2" r="1.0"/><circle cx="91.7" cy="81.8" r="0.4"/><circle cx="84.4" cy="84.5" r="1.0"/><circle cx="85.6" cy="86.7" r="1.1"/></g><g fill="#000" fill-opacity="0.45"><circle cx="123.3" cy="93.2" r="0.5"/><circle cx="120.2" cy="79.9" r="1.0"/><circle cx="118.5" cy="84.8" r="0.8"/><circle cx="118.9" cy="79.8" r="0.4"/><circle cx="120.3" cy="81.5" r="1.0"/><circle cx="119.9" cy="84.6" r="0.6"/><circle cx="123.2" cy="85.0" r="0.7"/><circle cx="118.5" cy="84.6" r="0.5"/><circle cx="115.2" cy="82.8" r="0.7"/><circle cx="121.4" cy="76.1" r="0.4"/><circle cx="124.1" cy="90.8" r="0.7"/><circle cx="118.0" cy="86.2" r="1.0"/><circle cx="118.8" cy="85.5" r="0.6"/><circle cx="125.2" cy="82.4" r="0.7"/><circle cx="117.3" cy="82.2" r="0.7"/><circle cx="120.5" cy="78.8" r="1.1"/><circle cx="126.0" cy="88.9" r="0.4"/><circle cx="121.7" cy="78.1" r="0.4"/><circle cx="114.8" cy="79.5" r="1.0"/><circle cx="127.7" cy="71.9" r="0.3"/><circle cx="119.9" cy="83.7" r="0.9"/><circle cx="115.8" cy="84.6" r="0.9"/><circle cx="126.0" cy="82.0" r="1.0"/><circle cx="119.7" cy="81.4" r="1.0"/><circle cx="122.2" cy="83.2" r="1.0"/><circle cx="120.1" cy="89.5" r="0.3"/><circle cx="122.3" cy="90.0" r="0.3"/><circle cx="113.2" cy="81.2" r="0.5"/><circle cx="119.5" cy="73.8" r="0.8"/><circle cx="121.5" cy="74.0" r="0.3"/><circle cx="122.5" cy="88.0" r="1.1"/><circle cx="121.9" cy="88.7" r="0.4"/><circle cx="123.1" cy="77.4" r="0.7"/><circle cx="120.1" cy="79.5" r="0.9"/><circle cx="123.0" cy="72.2" r="0.5"/><circle cx="121.2" cy="85.1" r="1.0"/><circle cx="117.9" cy="84.0" r="0.7"/><circle cx="120.1" cy="77.7" r="0.6"/><circle cx="121.6" cy="73.1" r="0.5"/><circle cx="127.8" cy="87.3" r="0.9"/><circle cx="118.2" cy="79.1" r="1.1"/><circle cx="118.9" cy="83.5" r="0.4"/><circle cx="118.3" cy="87.7" r="0.6"/><circle cx="125.6" cy="79.5" r="0.7"/><circle cx="118.6" cy="76.1" r="0.8"/><circle cx="116.9" cy="82.2" r="0.7"/><circle cx="122.1" cy="79.0" r="0.9"/><circle cx="119.1" cy="91.6" r="0.4"/><circle cx="117.4" cy="82.5" r="0.9"/><circle cx="121.8" cy="85.9" r="0.4"/><circle cx="117.0" cy="79.4" r="0.3"/><circle cx="122.0" cy="85.1" r="1.1"/><circle cx="116.9" cy="83.9" r="0.5"/><circle cx="117.7" cy="74.0" r="0.8"/><circle cx="124.6" cy="82.1" r="0.7"/><circle cx="126.7" cy="84.5" r="0.6"/><circle cx="119.7" cy="89.0" r="0.8"/><circle cx="114.4" cy="82.2" r="0.7"/><circle cx="120.3" cy="83.6" r="0.7"/><circle cx="118.3" cy="86.9" r="0.6"/><circle cx="121.9" cy="82.1" r="0.4"/><circle cx="126.4" cy="87.6" r="0.8"/><circle cx="121.4" cy="90.1" r="0.8"/><circle cx="126.1" cy="85.3" r="0.5"/><circle cx="122.8" cy="82.0" r="0.5"/><circle cx="121.0" cy="92.3" r="1.0"/><circle cx="119.3" cy="80.6" r="0.6"/><circle cx="120.7" cy="80.3" r="1.0"/><circle cx="125.2" cy="71.9" r="0.9"/><circle cx="114.3" cy="72.5" r="0.5"/><circle cx="120.4" cy="84.5" r="0.4"/><circle cx="121.4" cy="79.8" r="0.9"/><circle cx="115.6" cy="88.4" r="0.9"/><circle cx="118.5" cy="72.8" r="0.3"/><circle cx="120.7" cy="86.9" r="0.6"/><circle cx="117.7" cy="72.6" r="0.9"/><circle cx="125.6" cy="78.5" r="0.6"/><circle cx="115.5" cy="81.6" r="1.0"/><circle cx="118.9" cy="85.5" r="0.8"/><circle cx="121.9" cy="92.6" r="0.3"/><circle cx="118.7" cy="77.2" r="0.5"/><circle cx="117.6" cy="79.5" r="1.1"/><circle cx="124.3" cy="77.4" r="1.0"/><circle cx="122.5" cy="79.9" r="1.0"/><circle cx="126.1" cy="68.2" r="0.9"/><circle cx="119.2" cy="84.2" r="0.8"/><circle cx="122.4" cy="90.5" r="0.8"/><circle cx="122.4" cy="77.7" r="0.5"/><circle cx="125.1" cy="77.7" r="0.6"/><circle cx="117.7" cy="79.9" r="0.8"/><circle cx="118.3" cy="81.6" r="1.1"/><circle cx="125.2" cy="76.2" r="0.5"/><circle cx="122.9" cy="89.9" r="1.0"/><circle cx="119.7" cy="79.1" r="0.9"/><circle cx="117.8" cy="81.3" r="0.8"/><circle cx="116.4" cy="84.4" r="0.9"/><circle cx="122.6" cy="81.7" r="0.8"/><circle cx="125.6" cy="79.4" r="0.8"/><circle cx="121.5" cy="81.0" r="0.9"/><circle cx="117.8" cy="77.2" r="0.5"/><circle cx="119.7" cy="80.2" r="0.7"/><circle cx="120.6" cy="94.0" r="0.9"/><circle cx="115.5" cy="83.5" r="0.6"/><circle cx="119.0" cy="81.5" r="1.0"/><circle cx="121.5" cy="73.3" r="0.4"/><circle cx="121.2" cy="81.3" r="0.8"/><circle cx="119.8" cy="82.1" r="0.6"/><circle cx="124.5" cy="77.3" r="0.6"/><circle cx="122.2" cy="77.5" r="1.0"/><circle cx="119.9" cy="83.2" r="1.1"/><circle cx="123.3" cy="83.7" r="0.9"/><circle cx="124.1" cy="86.3" r="1.0"/><circle cx="118.4" cy="79.4" r="0.9"/><circle cx="123.0" cy="75.9" r="0.8"/><circle cx="119.5" cy="86.8" r="1.1"/><circle cx="121.2" cy="81.9" r="0.5"/><circle cx="121.9" cy="91.1" r="0.5"/><circle cx="123.8" cy="89.7" r="0.4"/><circle cx="124.6" cy="81.2" r="1.0"/><circle cx="122.0" cy="78.8" r="0.9"/><circle cx="119.0" cy="83.9" r="0.3"/><circle cx="119.8" cy="75.6" r="0.5"/><circle cx="122.1" cy="79.0" r="0.7"/><circle cx="123.6" cy="84.5" r="1.0"/><circle cx="119.1" cy="82.0" r="0.5"/><circle cx="119.3" cy="78.7" r="1.0"/><circle cx="127.2" cy="85.9" r="0.8"/><circle cx="122.4" cy="77.6" r="0.4"/><circle cx="123.2" cy="88.4" r="0.3"/><circle cx="125.5" cy="87.8" r="1.0"/><circle cx="124.9" cy="74.2" r="0.7"/><circle cx="124.7" cy="76.3" r="0.7"/><circle cx="120.3" cy="82.5" r="0.4"/><circle cx="121.0" cy="87.8" r="0.4"/><circle cx="125.3" cy="80.7" r="0.9"/><circle cx="122.9" cy="79.7" r="1.0"/><circle cx="123.5" cy="80.9" r="0.4"/><circle cx="123.2" cy="71.6" r="0.9"/><circle cx="117.2" cy="85.8" r="0.4"/><circle cx="121.3" cy="87.4" r="0.9"/><circle cx="127.5" cy="88.3" r="0.3"/><circle cx="123.4" cy="81.3" r="1.0"/><circle cx="124.4" cy="70.3" r="0.7"/><circle cx="120.1" cy="77.9" r="1.0"/><circle cx="126.4" cy="88.8" r="0.8"/><circle cx="128.3" cy="86.7" r="0.6"/><circle cx="123.3" cy="83.7" r="0.3"/><circle cx="120.0" cy="90.0" r="1.1"/><circle cx="116.6" cy="74.5" r="1.0"/><circle cx="120.3" cy="77.0" r="0.5"/><circle cx="123.3" cy="87.4" r="0.5"/><circle cx="120.8" cy="77.5" r="0.8"/><circle cx="116.5" cy="79.9" r="0.4"/><circle cx="120.8" cy="89.9" r="0.5"/><circle cx="116.9" cy="70.2" r="0.6"/><circle cx="125.5" cy="80.3" r="1.1"/><circle cx="115.5" cy="80.6" r="0.8"/><circle cx="122.4" cy="87.9" r="0.8"/><circle cx="116.2" cy="83.7" r="1.0"/><circle cx="122.7" cy="72.9" r="0.4"/><circle cx="119.6" cy="75.0" r="1.1"/><circle cx="123.1" cy="82.1" r="1.1"/><circle cx="117.4" cy="87.8" r="0.8"/><circle cx="118.1" cy="85.3" r="0.7"/><circle cx="125.1" cy="81.4" r="0.9"/><circle cx="119.3" cy="89.7" r="0.8"/><circle cx="120.7" cy="71.3" r="0.4"/><circle cx="125.5" cy="80.5" r="0.5"/><circle cx="119.5" cy="82.5" r="0.5"/><circle cx="123.8" cy="75.0" r="1.0"/><circle cx="121.8" cy="84.1" r="0.6"/><circle cx="115.8" cy="82.2" r="0.5"/><circle cx="120.6" cy="75.2" r="0.5"/><circle cx="121.3" cy="80.0" r="0.8"/><circle cx="121.4" cy="83.4" r="0.7"/><circle cx="116.4" cy="81.1" r="0.6"/><circle cx="126.3" cy="78.1" r="0.4"/><circle cx="129.5" cy="82.4" r="0.6"/><circle cx="122.6" cy="84.0" r="0.9"/><circle cx="122.4" cy="86.5" r="0.8"/></g><g fill="#000" fill-opacity="0.22"><circle cx="151.1" cy="85.2" r="1.2"/><circle cx="156.7" cy="74.0" r="0.9"/><circle cx="152.7" cy="85.9" r="0.9"/><circle cx="150.6" cy="77.3" r="1.0"/><circle cx="157.0" cy="86.7" r="1.2"/><circle cx="158.3" cy="80.8" r="1.2"/><circle cx="162.1" cy="84.1" r="0.8"/><circle cx="160.7" cy="82.7" r="0.3"/><circle cx="157.2" cy="76.9" r="1.1"/><circle cx="156.9" cy="78.6" r="0.7"/><circle cx="159.3" cy="86.1" r="0.4"/><circle cx="157.0" cy="81.0" r="1.1"/><circle cx="155.1" cy="83.9" r="0.7"/><circle cx="150.7" cy="78.5" r="1.2"/><circle cx="152.3" cy="84.3" r="1.1"/><circle cx="155.1" cy="82.7" r="1.1"/><circle cx="151.2" cy="88.6" r="1.0"/><circle cx="152.2" cy="82.9" r="0.4"/><circle cx="158.4" cy="76.6" r="0.6"/><circle cx="156.4" cy="82.8" r="1.1"/><circle cx="158.9" cy="84.1" r="0.9"/><circle cx="149.8" cy="79.3" r="0.7"/><circle cx="158.0" cy="87.7" r="1.1"/><circle cx="151.9" cy="78.7" r="1.1"/><circle cx="155.8" cy="82.6" r="0.9"/><circle cx="157.8" cy="74.9" r="0.4"/><circle cx="157.6" cy="79.7" r="0.6"/><circle cx="162.9" cy="79.4" r="1.0"/><circle cx="162.7" cy="84.0" r="0.7"/><circle cx="162.8" cy="80.5" r="1.1"/><circle cx="159.7" cy="81.4" r="1.1"/><circle cx="153.1" cy="83.3" r="1.0"/><circle cx="140.3" cy="85.7" r="1.1"/><circle cx="159.4" cy="74.6" r="0.5"/><circle cx="152.7" cy="74.6" r="0.7"/><circle cx="151.5" cy="78.5" r="0.5"/><circle cx="158.6" cy="77.8" r="0.4"/><circle cx="160.3" cy="79.2" r="0.9"/><circle cx="153.7" cy="82.1" r="0.6"/><circle cx="156.8" cy="76.9" r="1.1"/><circle cx="151.8" cy="88.9" r="0.5"/><circle cx="152.8" cy="80.8" r="0.4"/><circle cx="150.8" cy="79.4" r="0.8"/><circle cx="155.8" cy="83.7" r="0.6"/><circle cx="156.5" cy="78.9" r="0.7"/><circle cx="158.5" cy="75.4" r="0.5"/><circle cx="157.1" cy="80.0" r="0.4"/><circle cx="159.8" cy="80.5" r="1.1"/><circle cx="154.3" cy="83.6" r="1.0"/><circle cx="155.7" cy="80.4" r="0.9"/><circle cx="159.6" cy="82.9" r="0.4"/><circle cx="148.0" cy="74.8" r="0.7"/><circle cx="154.1" cy="86.1" r="0.9"/><circle cx="158.1" cy="81.2" r="0.6"/><circle cx="151.4" cy="79.9" r="0.9"/><circle cx="154.7" cy="89.6" r="0.6"/><circle cx="155.3" cy="81.8" r="0.4"/><circle cx="157.0" cy="89.0" r="0.7"/><circle cx="144.4" cy="83.9" r="1.2"/><circle cx="155.3" cy="76.7" r="0.6"/><circle cx="151.6" cy="79.9" r="0.6"/><circle cx="155.8" cy="83.2" r="1.0"/><circle cx="151.2" cy="77.1" r="0.7"/><circle cx="149.9" cy="75.6" r="0.3"/><circle cx="157.7" cy="75.9" r="0.6"/><circle cx="162.2" cy="78.1" r="0.6"/><circle cx="159.7" cy="80.7" r="0.7"/><circle cx="153.6" cy="81.4" r="0.8"/><circle cx="154.8" cy="87.5" r="0.8"/><circle cx="152.8" cy="88.0" r="0.7"/><circle cx="158.1" cy="81.8" r="0.3"/><circle cx="146.2" cy="84.2" r="1.1"/><circle cx="153.5" cy="77.9" r="0.5"/><circle cx="156.2" cy="84.1" r="0.9"/><circle cx="160.1" cy="80.7" r="0.7"/><circle cx="150.6" cy="72.9" r="0.7"/><circle cx="152.2" cy="77.9" r="0.7"/><circle cx="154.0" cy="78.9" r="0.8"/><circle cx="152.2" cy="80.0" r="0.5"/><circle cx="156.9" cy="76.3" r="0.5"/><circle cx="153.8" cy="85.3" r="0.7"/><circle cx="152.7" cy="83.2" r="0.5"/><circle cx="149.0" cy="79.8" r="0.4"/><circle cx="151.8" cy="77.9" r="1.2"/><circle cx="157.2" cy="79.1" r="0.9"/><circle cx="153.8" cy="81.8" r="1.1"/><circle cx="161.6" cy="75.7" r="0.9"/><circle cx="160.6" cy="79.2" r="0.9"/><circle cx="149.9" cy="72.8" r="1.1"/><circle cx="154.0" cy="82.9" r="0.8"/><circle cx="151.5" cy="77.8" r="1.1"/><circle cx="158.9" cy="74.5" r="0.8"/><circle cx="154.0" cy="77.2" r="1.0"/><circle cx="161.7" cy="86.9" r="0.9"/><circle cx="154.5" cy="82.8" r="0.8"/><circle cx="148.3" cy="81.5" r="0.4"/><circle cx="158.3" cy="76.7" r="0.7"/><circle cx="154.6" cy="73.9" r="0.7"/><circle cx="153.7" cy="84.8" r="0.3"/><circle cx="154.7" cy="88.3" r="0.4"/><circle cx="162.4" cy="84.4" r="0.6"/><circle cx="149.2" cy="78.9" r="0.9"/><circle cx="151.8" cy="86.9" r="0.3"/><circle cx="157.2" cy="76.9" r="0.9"/><circle cx="152.6" cy="87.0" r="0.6"/><circle cx="151.9" cy="77.7" r="1.0"/><circle cx="155.5" cy="77.1" r="1.0"/><circle cx="158.1" cy="78.8" r="0.5"/><circle cx="165.4" cy="75.2" r="0.4"/><circle cx="156.6" cy="69.9" r="0.5"/><circle cx="155.7" cy="76.3" r="1.0"/><circle cx="150.0" cy="79.7" r="0.4"/><circle cx="151.0" cy="74.4" r="0.6"/><circle cx="156.9" cy="80.5" r="0.5"/><circle cx="162.3" cy="79.8" r="1.1"/><circle cx="155.0" cy="77.6" r="0.6"/><circle cx="163.3" cy="77.3" r="1.2"/><circle cx="158.0" cy="73.7" r="1.0"/><circle cx="159.1" cy="77.6" r="0.3"/><circle cx="154.7" cy="80.7" r="0.5"/><circle cx="152.0" cy="78.1" r="0.5"/><circle cx="158.5" cy="82.3" r="0.8"/><circle cx="146.1" cy="74.2" r="0.4"/><circle cx="154.9" cy="81.8" r="1.1"/><circle cx="150.6" cy="75.2" r="1.0"/><circle cx="164.6" cy="80.2" r="0.6"/><circle cx="151.9" cy="76.7" r="1.0"/><circle cx="153.9" cy="83.4" r="0.5"/><circle cx="154.2" cy="75.2" r="0.4"/><circle cx="151.5" cy="84.5" r="0.6"/><circle cx="147.9" cy="75.3" r="0.9"/><circle cx="156.2" cy="76.4" r="1.1"/><circle cx="160.1" cy="78.0" r="0.3"/><circle cx="161.4" cy="83.8" r="1.1"/><circle cx="154.2" cy="74.8" r="0.8"/><circle cx="159.5" cy="84.0" r="1.2"/><circle cx="156.7" cy="85.9" r="1.1"/><circle cx="152.6" cy="76.7" r="0.5"/><circle cx="153.9" cy="69.9" r="1.1"/><circle cx="149.0" cy="84.3" r="1.0"/><circle cx="149.7" cy="85.3" r="0.6"/><circle cx="155.0" cy="80.1" r="1.0"/><circle cx="155.0" cy="78.7" r="0.4"/><circle cx="153.7" cy="82.8" r="1.0"/><circle cx="157.2" cy="85.5" r="0.8"/><circle cx="149.9" cy="87.1" r="0.7"/><circle cx="148.4" cy="79.5" r="0.7"/><circle cx="159.3" cy="90.1" r="1.0"/><circle cx="150.0" cy="78.5" r="0.9"/><circle cx="154.5" cy="81.7" r="0.8"/><circle cx="156.6" cy="78.8" r="1.2"/><circle cx="143.8" cy="91.4" r="1.0"/><circle cx="154.6" cy="83.0" r="1.1"/><circle cx="163.0" cy="79.0" r="0.8"/><circle cx="147.5" cy="77.9" r="1.0"/><circle cx="156.9" cy="76.8" r="1.0"/><circle cx="160.6" cy="78.3" r="0.3"/><circle cx="157.4" cy="86.0" r="0.7"/><circle cx="160.5" cy="76.9" r="0.9"/><circle cx="158.1" cy="84.4" r="0.9"/><circle cx="163.3" cy="75.2" r="0.5"/><circle cx="142.7" cy="79.9" r="0.4"/><circle cx="157.5" cy="81.2" r="1.0"/><circle cx="151.8" cy="86.2" r="1.0"/><circle cx="155.5" cy="78.8" r="0.9"/><circle cx="157.1" cy="73.4" r="1.1"/><circle cx="157.5" cy="74.4" r="1.1"/><circle cx="153.0" cy="79.4" r="0.6"/><circle cx="158.7" cy="78.3" r="0.7"/><circle cx="159.7" cy="75.2" r="1.0"/><circle cx="149.8" cy="81.0" r="0.4"/><circle cx="155.8" cy="82.5" r="0.8"/><circle cx="153.3" cy="79.7" r="0.9"/><circle cx="158.5" cy="82.6" r="0.3"/><circle cx="152.5" cy="80.4" r="1.1"/><circle cx="149.6" cy="86.4" r="0.7"/><circle cx="151.0" cy="87.5" r="0.5"/><circle cx="148.7" cy="79.4" r="1.2"/><circle cx="154.6" cy="78.6" r="0.7"/><circle cx="163.3" cy="77.4" r="0.6"/><circle cx="157.4" cy="82.5" r="1.0"/><circle cx="159.0" cy="88.5" r="0.5"/><circle cx="152.5" cy="73.7" r="0.5"/><circle cx="148.8" cy="79.3" r="0.5"/><circle cx="148.9" cy="78.8" r="1.2"/><circle cx="154.4" cy="82.7" r="0.8"/><circle cx="150.8" cy="77.1" r="1.1"/><circle cx="156.6" cy="85.1" r="0.7"/><circle cx="156.6" cy="84.6" r="0.7"/><circle cx="149.6" cy="85.4" r="1.2"/><circle cx="158.1" cy="79.4" r="0.6"/><circle cx="156.8" cy="79.4" r="0.4"/><circle cx="165.4" cy="84.5" r="0.8"/><circle cx="153.2" cy="80.8" r="1.1"/><circle cx="161.8" cy="79.7" r="1.1"/><circle cx="151.5" cy="78.4" r="0.5"/><circle cx="154.2" cy="82.4" r="0.6"/><circle cx="156.2" cy="80.4" r="1.1"/><circle cx="159.7" cy="73.3" r="0.6"/><circle cx="149.7" cy="81.7" r="1.0"/><circle cx="153.2" cy="85.0" r="0.8"/><circle cx="157.2" cy="76.5" r="0.3"/><circle cx="147.4" cy="85.2" r="0.5"/><circle cx="153.3" cy="78.3" r="0.5"/><circle cx="153.5" cy="78.5" r="0.7"/><circle cx="151.2" cy="77.7" r="1.0"/><circle cx="157.0" cy="77.0" r="1.0"/><circle cx="155.2" cy="74.0" r="0.8"/><circle cx="148.4" cy="77.0" r="0.9"/><circle cx="154.2" cy="86.4" r="0.9"/><circle cx="145.8" cy="82.2" r="0.6"/><circle cx="149.5" cy="78.2" r="0.8"/><circle cx="157.7" cy="86.0" r="0.4"/><circle cx="150.2" cy="79.0" r="0.9"/><circle cx="163.0" cy="70.0" r="0.5"/><circle cx="159.2" cy="77.3" r="0.8"/><circle cx="163.5" cy="82.2" r="0.5"/><circle cx="154.3" cy="83.7" r="0.5"/><circle cx="154.1" cy="83.6" r="0.8"/><circle cx="150.2" cy="85.8" r="1.1"/></g><rect x="30" y="97" width="4" height="4" fill="#7090ff" opacity="0.6"/><rect x="28.5" y="97.25" width="5" height="1.5" fill="#112"/><rect x="30.25" y="95.5" width="1.5" height="5" fill="#112"/><rect x="64" y="97" width="4" height="4" fill="#ff8080" opacity="0.6"/><rect x="62.5" y="97.25" width="5" height="1.5" fill="#111"/><rect x="64.25" y="95.5" width="1.5" height="5" fill="#111"/><rect x="98" y="97" width="4" height="4" fill="#ff8080" opacity="0.6"/><rect x="96.5" y="97.25" width="5" height="1.5" fill="#111"/><rect x="98.25" y="95.5" width="1.5" height="5" fill="#111"/><rect x="132" y="97" width="4" height="4" fill="#ff8080" opacity="0.6"/><rect x="130.5" y="97.25" width="5" height="1.5" fill="#111"/><rect x="132.25" y="95.5" width="1.5" height="5" fill="#111"/><rect x="166" y="97" width="4" height="4" fill="#ff8080" opacity="0.6"/><rect x="164.5" y="97.25" width="5" height="1.5" fill="#111"/><rect x="166.25" y="95.5" width="1.5" height="5" fill="#111"/><g fill="#000" fill-opacity="0.6"><circle cx="21.2" cy="116.1" r="1.0"/><circle cx="16.2" cy="110.3" r="0.7"/><circle cx="19.9" cy="125.6" r="1.0"/><circle cx="12.8" cy="123.7" r="0.4"/><circle cx="19.2" cy="107.9" r="1.3"/><circle cx="22.6" cy="122.9" r="1.1"/><circle cx="21.2" cy="123.1" r="0.5"/><circle cx="17.2" cy="119.1" r="0.6"/><circle cx="20.7" cy="112.8" r="1.1"/><circle cx="19.7" cy="117.5" r="1.1"/><circle cx="22.5" cy="113.8" r="0.6"/><circle cx="19.3" cy="122.6" r="0.7"/><circle cx="16.5" cy="125.2" r="0.9"/><circle cx="16.8" cy="121.0" r="0.8"/><circle cx="15.3" cy="111.1" r="0.9"/><circle cx="23.5" cy="113.1" r="0.7"/><circle cx="16.8" cy="110.9" r="0.6"/><circle cx="19.3" cy="122.1" r="1.0"/><circle cx="17.0" cy="113.9" r="0.8"/><circle cx="22.8" cy="120.9" r="0.7"/><circle cx="18.1" cy="108.5" r="0.4"/><circle cx="19.9" cy="117.4" r="1.3"/><circle cx="20.4" cy="117.7" r="0.6"/><circle cx="23.5" cy="126.4" r="1.1"/><circle cx="25.5" cy="116.2" r="0.7"/><circle cx="17.7" cy="113.5" r="0.6"/><circle cx="10.3" cy="121.4" r="0.6"/><circle cx="11.2" cy="115.7" r="1.1"/><circle cx="12.1" cy="118.9" r="0.9"/><circle cx="9.4" cy="119.9" r="0.4"/><circle cx="17.6" cy="119.2" r="0.7"/><circle cx="20.8" cy="112.7" r="0.9"/><circle cx="25.2" cy="114.5" r="0.6"/><circle cx="18.0" cy="123.9" r="0.5"/><circle cx="15.4" cy="116.9" r="0.7"/><circle cx="16.4" cy="114.4" r="0.4"/><circle cx="17.0" cy="114.8" r="1.2"/><circle cx="9.3" cy="111.4" r="0.8"/><circle cx="13.3" cy="118.3" r="0.4"/><circle cx="20.2" cy="117.0" r="0.4"/><circle cx="22.4" cy="115.5" r="0.9"/><circle cx="23.8" cy="114.2" r="0.6"/><circle cx="15.5" cy="124.9" r="1.0"/><circle cx="17.6" cy="121.6" r="0.8"/><circle cx="25.1" cy="121.2" r="1.0"/><circle cx="20.7" cy="123.2" r="0.9"/><circle cx="21.3" cy="120.7" r="1.1"/><circle cx="9.5" cy="120.2" r="0.5"/><circle cx="24.2" cy="117.9" r="0.9"/><circle cx="21.5" cy="118.3" r="0.3"/><circle cx="14.2" cy="119.1" r="0.5"/><circle cx="16.1" cy="120.5" r="0.6"/><circle cx="14.4" cy="117.9" r="0.9"/><circle cx="24.3" cy="115.6" r="1.3"/><circle cx="22.5" cy="122.5" r="0.5"/><circle cx="22.2" cy="115.8" r="1.0"/><circle cx="17.4" cy="115.5" r="0.4"/><circle cx="20.3" cy="109.7" r="0.7"/><circle cx="18.1" cy="118.2" r="1.1"/><circle cx="15.4" cy="113.6" r="1.0"/><circle cx="17.2" cy="117.5" r="1.0"/><circle cx="26.6" cy="116.7" r="1.2"/><circle cx="10.9" cy="120.4" r="0.4"/><circle cx="18.9" cy="111.2" r="0.7"/><circle cx="19.9" cy="118.9" r="0.7"/><circle cx="21.8" cy="115.4" r="1.2"/><circle cx="18.4" cy="121.4" r="0.5"/><circle cx="15.0" cy="126.3" r="0.7"/><circle cx="13.9" cy="124.6" r="0.7"/><circle cx="22.4" cy="112.9" r="1.1"/><circle cx="12.7" cy="120.1" r="0.8"/><circle cx="28.5" cy="117.1" r="0.9"/><circle cx="15.1" cy="118.1" r="1.2"/><circle cx="13.2" cy="114.8" r="0.5"/><circle cx="9.6" cy="119.4" r="0.6"/><circle cx="16.4" cy="123.7" r="0.8"/><circle cx="18.7" cy="118.1" r="0.7"/><circle cx="15.8" cy="113.4" r="0.3"/><circle cx="17.1" cy="121.2" r="1.1"/><circle cx="18.9" cy="131.4" r="0.6"/><circle cx="17.4" cy="118.9" r="0.8"/><circle cx="8.6" cy="117.2" r="1.0"/><circle cx="15.5" cy="117.6" r="1.2"/><circle cx="17.0" cy="121.5" r="0.5"/><circle cx="11.0" cy="114.3" r="0.6"/><circle cx="17.0" cy="118.7" r="0.9"/><circle cx="16.4" cy="115.6" r="0.5"/><circle cx="17.1" cy="110.4" r="0.4"/><circle cx="24.6" cy="117.4" r="1.0"/><circle cx="11.6" cy="129.3" r="0.7"/><circle cx="8.1" cy="107.6" r="1.1"/><circle cx="18.1" cy="120.3" r="0.5"/><circle cx="24.3" cy="124.8" r="0.8"/><circle cx="12.4" cy="118.7" r="0.8"/><circle cx="9.9" cy="121.0" r="0.7"/><circle cx="23.2" cy="111.1" r="1.2"/><circle cx="17.0" cy="115.0" r="0.7"/><circle cx="19.4" cy="114.2" r="0.9"/><circle cx="19.2" cy="126.7" r="0.6"/><circle cx="11.3" cy="124.8" r="0.4"/><circle cx="22.1" cy="118.2" r="0.7"/><circle cx="20.7" cy="121.1" r="1.1"/><circle cx="25.1" cy="110.7" r="1.1"/><circle cx="21.1" cy="120.1" r="0.7"/><circle cx="25.3" cy="119.5" r="0.6"/><circle cx="18.4" cy="110.9" r="0.6"/><circle cx="14.1" cy="122.4" r="0.5"/><circle cx="22.0" cy="118.4" r="0.5"/><circle cx="16.8" cy="126.5" r="1.0"/><circle cx="16.1" cy="118.6" r="1.1"/><circle cx="16.8" cy="120.2" r="1.1"/><circle cx="20.1" cy="115.9" r="0.8"/><circle cx="21.4" cy="114.2" r="0.6"/><circle cx="17.6" cy="118.9" r="1.2"/><circle cx="18.2" cy="115.2" r="0.9"/><circle cx="19.8" cy="125.5" r="0.7"/><circle cx="15.0" cy="112.4" r="0.4"/><circle cx="10.6" cy="115.0" r="0.3"/><circle cx="20.7" cy="118.9" r="1.0"/><circle cx="22.2" cy="117.2" r="1.2"/><circle cx="16.1" cy="114.3" r="0.7"/><circle cx="20.1" cy="113.4" r="0.8"/><circle cx="16.5" cy="115.3" r="0.8"/><circle cx="10.8" cy="117.2" r="1.0"/><circle cx="16.3" cy="123.4" r="0.8"/><circle cx="23.7" cy="123.1" r="1.3"/><circle cx="12.4" cy="116.2" r="0.7"/><circle cx="12.6" cy="119.3" r="0.6"/><circle cx="21.4" cy="116.5" r="0.5"/><circle cx="16.7" cy="117.6" r="0.7"/><circle cx="8.7" cy="114.7" r="0.6"/><circle cx="28.9" cy="122.1" r="0.3"/><circle cx="12.0" cy="120.8" r="1.3"/><circle cx="14.8" cy="120.8" r="0.6"/><circle cx="15.1" cy="119.9" r="1.2"/><circle cx="9.2" cy="117.3" r="0.6"/><circle cx="11.7" cy="108.8" r="0.5"/><circle cx="20.8" cy="116.9" r="1.0"/><circle cx="22.0" cy="116.1" r="1.2"/><circle cx="12.9" cy="121.2" r="1.2"/><circle cx="15.7" cy="117.0" r="0.4"/><circle cx="12.7" cy="117.0" r="0.4"/><circle cx="18.7" cy="114.1" r="1.2"/><circle cx="15.0" cy="120.3" r="0.7"/><circle cx="21.8" cy="108.7" r="0.9"/><circle cx="16.9" cy="123.9" r="0.6"/><circle cx="16.6" cy="118.4" r="0.3"/><circle cx="24.5" cy="114.6" r="0.5"/><circle cx="16.0" cy="117.1" r="1.1"/><circle cx="11.2" cy="113.0" r="0.7"/><circle cx="8.9" cy="121.5" r="0.6"/><circle cx="19.1" cy="119.1" r="1.2"/><circle cx="16.7" cy="119.7" r="0.9"/><circle cx="20.5" cy="121.7" r="1.1"/><circle cx="17.5" cy="123.0" r="1.2"/><circle cx="23.6" cy="110.9" r="0.3"/><circle cx="23.1" cy="116.9" r="0.5"/><circle cx="19.5" cy="117.8" r="1.3"/><circle cx="18.9" cy="118.4" r="0.8"/><circle cx="12.0" cy="114.0" r="1.1"/><circle cx="23.0" cy="122.9" r="0.6"/><circle cx="23.5" cy="116.1" r="1.0"/><circle cx="24.2" cy="125.9" r="0.6"/><circle cx="18.3" cy="122.9" r="1.1"/><circle cx="14.6" cy="122.9" r="0.9"/><circle cx="17.0" cy="120.4" r="0.7"/><circle cx="15.3" cy="110.9" r="0.5"/><circle cx="12.0" cy="110.3" r="1.0"/><circle cx="17.6" cy="119.3" r="1.3"/><circle cx="16.0" cy="114.3" r="1.0"/><circle cx="11.1" cy="114.7" r="0.7"/><circle cx="14.7" cy="113.9" r="0.7"/><circle cx="13.5" cy="125.0" r="1.2"/><circle cx="16.5" cy="119.8" r="0.6"/><circle cx="17.2" cy="113.5" r="0.3"/><circle cx="19.8" cy="113.7" r="0.4"/><circle cx="16.9" cy="112.3" r="1.1"/><circle cx="21.6" cy="110.3" r="1.2"/><circle cx="10.5" cy="123.8" r="0.8"/><circle cx="15.1" cy="115.3" r="0.9"/><circle cx="25.5" cy="122.3" r="0.5"/><circle cx="8.6" cy="114.1" r="1.1"/><circle cx="20.1" cy="114.0" r="0.4"/><circle cx="21.1" cy="117.6" r="1.2"/><circle cx="12.6" cy="120.8" r="0.8"/><circle cx="9.0" cy="115.6" r="0.9"/><circle cx="19.9" cy="123.2" r="0.4"/><circle cx="18.8" cy="115.6" r="0.7"/><circle cx="13.3" cy="115.6" r="1.2"/><circle cx="18.1" cy="113.8" r="0.7"/><circle cx="16.6" cy="112.3" r="0.9"/><circle cx="13.8" cy="123.3" r="0.9"/><circle cx="20.6" cy="115.4" r="1.1"/><circle cx="17.9" cy="121.9" r="0.5"/><circle cx="18.9" cy="117.1" r="0.6"/><circle cx="9.6" cy="119.5" r="1.0"/><circle cx="20.5" cy="121.3" r="1.0"/><circle cx="18.5" cy="119.9" r="1.1"/><circle cx="19.0" cy="118.0" r="0.5"/><circle cx="19.3" cy="114.2" r="0.7"/><circle cx="7.2" cy="115.4" r="0.3"/><circle cx="18.7" cy="122.6" r="0.9"/><circle cx="20.5" cy="121.8" r="0.9"/><circle cx="21.0" cy="119.7" r="0.4"/><circle cx="17.6" cy="117.6" r="0.5"/><circle cx="14.4" cy="115.7" r="0.9"/><circle cx="9.0" cy="130.3" r="0.9"/><circle cx="15.2" cy="120.4" r="0.8"/><circle cx="18.1" cy="110.4" r="1.0"/><circle cx="5.8" cy="116.9" r="0.7"/><circle cx="5.5" cy="114.5" r="1.1"/><circle cx="8.5" cy="119.4" r="1.1"/><circle cx="15.7" cy="122.7" r="1.1"/><circle cx="13.9" cy="121.2" r="0.8"/><circle cx="20.3" cy="119.7" r="1.3"/><circle cx="17.1" cy="126.7" r="0.3"/><circle cx="15.0" cy="123.4" r="0.6"/><circle cx="28.4" cy="113.8" r="0.6"/><circle cx="24.0" cy="126.2" r="1.1"/><circle cx="15.3" cy="117.8" r="0.3"/><circle cx="14.2" cy="111.2" r="0.8"/><circle cx="15.1" cy="121.4" r="0.7"/><circle cx="11.2" cy="121.3" r="0.7"/><circle cx="15.2" cy="120.9" r="1.0"/><circle cx="19.8" cy="116.8" r="1.1"/><circle cx="14.9" cy="115.2" r="0.4"/><circle cx="18.4" cy="115.7" r="0.4"/><circle cx="24.4" cy="122.8" r="0.7"/><circle cx="20.9" cy="118.0" r="0.8"/><circle cx="14.3" cy="118.4" r="1.1"/><circle cx="15.7" cy="114.4" r="0.6"/><circle cx="17.0" cy="119.0" r="0.9"/><circle cx="15.9" cy="125.0" r="1.1"/><circle cx="15.3" cy="121.6" r="0.7"/><circle cx="15.5" cy="118.2" r="0.7"/><circle cx="16.1" cy="120.2" r="1.1"/><circle cx="15.2" cy="112.7" r="0.4"/><circle cx="16.3" cy="113.3" r="1.2"/><circle cx="14.8" cy="115.2" r="1.1"/><circle cx="13.2" cy="115.5" r="1.1"/><circle cx="15.7" cy="120.4" r="0.3"/><circle cx="14.1" cy="115.5" r="0.5"/><circle cx="24.9" cy="120.5" r="0.6"/><circle cx="23.4" cy="110.1" r="1.1"/><circle cx="18.9" cy="129.4" r="0.9"/><circle cx="23.0" cy="109.4" r="0.6"/><circle cx="9.7" cy="125.2" r="0.6"/><circle cx="18.1" cy="118.8" r="0.9"/><circle cx="12.9" cy="128.9" r="0.3"/><circle cx="10.9" cy="122.5" r="0.9"/><circle cx="20.5" cy="112.0" r="1.2"/><circle cx="26.4" cy="116.1" r="0.9"/><circle cx="12.2" cy="121.5" r="0.5"/><circle cx="16.8" cy="123.8" r="0.7"/><circle cx="15.5" cy="119.3" r="1.3"/><circle cx="14.3" cy="122.8" r="0.6"/><circle cx="9.1" cy="115.1" r="1.2"/><circle cx="8.0" cy="111.1" r="0.7"/><circle cx="12.7" cy="118.7" r="1.3"/><circle cx="19.4" cy="120.5" r="1.1"/><circle cx="17.1" cy="119.8" r="0.7"/><circle cx="11.8" cy="119.2" r="0.5"/><circle cx="14.7" cy="121.2" r="0.5"/><circle cx="13.5" cy="117.8" r="0.5"/><circle cx="26.1" cy="113.7" r="0.7"/><circle cx="14.9" cy="117.6" r="0.3"/><circle cx="5.4" cy="117.0" r="0.4"/><circle cx="8.8" cy="120.4" r="0.3"/><circle cx="13.8" cy="116.1" r="1.1"/><circle cx="21.4" cy="109.1" r="1.1"/><circle cx="23.0" cy="121.7" r="0.9"/><circle cx="16.0" cy="121.1" r="0.8"/><circle cx="12.7" cy="120.3" r="1.3"/><circle cx="18.2" cy="127.4" r="0.4"/><circle cx="15.1" cy="113.2" r="0.7"/><circle cx="14.5" cy="118.4" r="0.5"/><circle cx="14.3" cy="119.7" r="1.1"/><circle cx="14.5" cy="111.7" r="1.0"/><circle cx="17.4" cy="118.6" r="0.4"/><circle cx="21.1" cy="114.3" r="1.3"/><circle cx="14.9" cy="122.2" r="0.9"/><circle cx="19.9" cy="113.8" r="0.8"/><circle cx="14.8" cy="120.8" r="1.2"/><circle cx="21.3" cy="115.1" r="0.4"/><circle cx="20.7" cy="114.1" r="1.0"/><circle cx="15.3" cy="119.0" r="1.0"/><circle cx="25.9" cy="125.0" r="0.5"/><circle cx="16.8" cy="118.3" r="0.5"/><circle cx="15.8" cy="116.3" r="0.4"/><circle cx="17.7" cy="118.3" r="0.8"/><circle cx="18.2" cy="126.0" r="1.0"/><circle cx="6.0" cy="117.7" r="1.3"/><circle cx="14.1" cy="125.8" r="1.0"/><circle cx="20.3" cy="125.8" r="0.3"/><circle cx="12.1" cy="108.7" r="1.0"/><circle cx="14.7" cy="111.3" r="0.7"/><circle cx="20.6" cy="121.0" r="0.6"/><circle cx="20.8" cy="108.8" r="1.3"/><circle cx="11.9" cy="126.8" r="1.2"/><circle cx="23.0" cy="118.8" r="0.4"/><circle cx="21.6" cy="120.5" r="1.0"/><circle cx="18.8" cy="121.8" r="0.8"/><circle cx="14.6" cy="117.3" r="0.5"/><circle cx="21.2" cy="118.4" r="1.3"/><circle cx="20.2" cy="125.4" r="0.9"/><circle cx="22.5" cy="111.3" r="0.4"/><circle cx="12.6" cy="126.0" r="0.9"/><circle cx="17.8" cy="117.0" r="1.1"/><circle cx="10.3" cy="123.2" r="0.9"/><circle cx="13.4" cy="122.6" r="0.3"/><circle cx="26.0" cy="114.1" r="0.9"/><circle cx="12.3" cy="111.7" r="0.7"/><circle cx="17.3" cy="125.0" r="1.3"/><circle cx="22.8" cy="111.7" r="0.5"/><circle cx="15.5" cy="121.6" r="0.9"/><circle cx="22.4" cy="114.1" r="0.9"/><circle cx="14.3" cy="119.3" r="0.6"/><circle cx="27.5" cy="116.8" r="1.0"/><circle cx="15.7" cy="114.8" r="0.3"/><circle cx="17.9" cy="118.1" r="0.5"/><circle cx="23.3" cy="117.3" r="0.5"/><circle cx="17.8" cy="118.5" r="0.3"/><circle cx="19.9" cy="121.3" r="0.5"/><circle cx="17.9" cy="124.7" r="0.4"/><circle cx="22.4" cy="124.2" r="0.6"/><circle cx="14.3" cy="115.1" r="1.0"/><circle cx="20.8" cy="118.2" r="1.2"/><circle cx="15.2" cy="124.6" r="0.5"/><circle cx="21.0" cy="121.1" r="0.8"/><circle cx="22.8" cy="119.3" r="0.7"/><circle cx="11.9" cy="124.3" r="1.2"/><circle cx="13.6" cy="120.3" r="1.1"/><circle cx="17.3" cy="112.2" r="0.9"/><circle cx="12.8" cy="124.5" r="0.9"/><circle cx="19.6" cy="114.8" r="0.4"/><circle cx="21.2" cy="113.2" r="1.1"/><circle cx="16.8" cy="109.7" r="0.7"/><circle cx="21.4" cy="113.0" r="0.7"/><circle cx="18.1" cy="119.9" r="0.5"/><circle cx="15.2" cy="121.9" r="0.9"/><circle cx="23.0" cy="116.5" r="1.0"/><circle cx="24.4" cy="118.5" r="0.8"/><circle cx="17.8" cy="113.6" r="0.9"/><circle cx="8.6" cy="117.4" r="0.7"/><circle cx="21.4" cy="109.4" r="0.8"/><circle cx="9.5" cy="117.9" r="0.8"/><circle cx="28.0" cy="115.9" r="0.8"/><circle cx="16.1" cy="115.9" r="1.2"/><circle cx="16.2" cy="117.3" r="0.3"/><circle cx="21.7" cy="111.1" r="0.9"/><circle cx="14.0" cy="120.0" r="0.8"/><circle cx="22.7" cy="114.3" r="0.3"/><circle cx="17.5" cy="120.0" r="1.2"/><circle cx="23.3" cy="109.0" r="0.7"/><circle cx="16.3" cy="119.6" r="0.6"/><circle cx="14.3" cy="122.0" r="0.6"/><circle cx="15.7" cy="108.6" r="0.7"/><circle cx="18.6" cy="114.3" r="0.6"/><circle cx="17.6" cy="116.0" r="0.4"/><circle cx="22.4" cy="117.7" r="0.7"/></g><path d="M47 105 L50 111" stroke="#999" stroke-width="1.5"/><g fill="#000" opacity="0.8"><circle cx="86.8" cy="109.2" r="0.8"/><circle cx="86.2" cy="118.9" r="1.5"/><circle cx="78.8" cy="125.7" r="0.3"/><circle cx="91.6" cy="125.0" r="0.4"/><circle cx="77.6" cy="110.2" r="0.7"/><circle cx="85.2" cy="112.4" r="1.1"/><circle cx="86.4" cy="113.7" r="1.4"/><circle cx="90.8" cy="131.0" r="1.0"/><circle cx="86.6" cy="126.7" r="1.5"/><circle cx="79.4" cy="115.5" r="1.0"/><circle cx="90.9" cy="113.7" r="0.6"/><circle cx="96.6" cy="117.3" r="1.3"/><circle cx="82.3" cy="111.7" r="0.7"/><circle cx="95.9" cy="120.4" r="0.5"/><circle cx="87.8" cy="114.8" r="0.4"/><circle cx="88.6" cy="118.7" r="0.8"/><circle cx="92.4" cy="127.0" r="1.0"/><circle cx="90.9" cy="109.8" r="1.5"/></g><g fill="#000" opacity="0.9"><circle cx="115.7" cy="114.0" r="1.7"/><circle cx="119.8" cy="125.8" r="1.1"/><circle cx="113.1" cy="126.5" r="0.5"/><circle cx="119.0" cy="120.9" r="0.9"/><circle cx="119.7" cy="131.2" r="0.7"/><circle cx="122.7" cy="129.6" r="0.6"/><circle cx="123.4" cy="112.9" r="0.5"/><circle cx="115.1" cy="107.6" r="0.8"/><circle cx="111.0" cy="117.1" r="1.7"/><circle cx="120.8" cy="119.9" r="0.9"/><circle cx="121.5" cy="113.4" r="1.1"/><circle cx="118.5" cy="119.8" r="0.4"/><circle cx="124.4" cy="115.9" r="1.0"/><circle cx="109.1" cy="116.2" r="1.6"/><circle cx="127.2" cy="124.7" r="0.3"/><circle cx="108.2" cy="116.8" r="1.0"/><circle cx="111.1" cy="128.6" r="1.3"/><circle cx="126.3" cy="115.7" r="0.8"/><circle cx="116.2" cy="112.6" r="0.3"/><circle cx="127.7" cy="129.2" r="1.3"/><circle cx="129.4" cy="122.2" r="1.4"/><circle cx="131.3" cy="123.8" r="0.6"/><circle cx="108.8" cy="119.5" r="1.0"/><circle cx="114.5" cy="126.3" r="1.2"/><circle cx="130.4" cy="116.5" r="1.8"/><circle cx="121.6" cy="112.7" r="0.8"/></g><g fill="#000" opacity="1"><circle cx="163.4" cy="113.9" r="0.6"/><circle cx="154.4" cy="114.4" r="0.3"/><circle cx="141.1" cy="121.9" r="0.8"/><circle cx="157.5" cy="110.2" r="1.0"/><circle cx="149.4" cy="130.7" r="0.4"/><circle cx="150.7" cy="119.9" r="0.6"/><circle cx="161.5" cy="113.2" r="1.2"/><circle cx="145.4" cy="117.2" r="0.4"/><circle cx="140.9" cy="121.0" r="0.6"/><circle cx="156.4" cy="115.9" r="1.0"/><circle cx="157.6" cy="130.9" r="0.4"/><circle cx="160.7" cy="123.9" r="1.0"/><circle cx="151.3" cy="113.8" r="0.9"/><circle cx="154.7" cy="125.3" r="0.6"/><circle cx="153.2" cy="121.3" r="0.5"/><circle cx="144.1" cy="117.8" r="0.6"/><circle cx="148.4" cy="116.4" r="1.0"/><circle cx="163.8" cy="120.8" r="1.1"/><circle cx="144.7" cy="115.8" r="1.2"/><circle cx="154.5" cy="121.8" r="0.8"/></g><path d="M62 130 L62 124 L56 130 Z" fill="#ff6060"/><rect x="28.5" y="131.25" width="5" height="1.5" fill="#111"/><rect x="30.25" y="129.5" width="1.5" height="5" fill="#111"/><rect x="96.5" y="131.25" width="5" height="1.5" fill="#111"/><rect x="98.25" y="129.5" width="1.5" height="5" fill="#111"/><rect x="130.5" y="131.25" width="5" height="1.5" fill="#111"/><rect x="132.25" y="129.5" width="1.5" height="5" fill="#111"/><g fill="#000" fill-opacity="0.35"><circle cx="12.2" cy="163.9" r="0.4"/><circle cx="17.0" cy="151.6" r="0.6"/><circle cx="9.4" cy="158.0" r="0.3"/><circle cx="21.3" cy="158.2" r="0.9"/><circle cx="5.2" cy="153.9" r="0.6"/><circle cx="19.4" cy="153.8" r="0.8"/><circle cx="16.8" cy="158.2" r="0.6"/><circle cx="0.2" cy="163.5" r="0.9"/><circle cx="16.3" cy="149.6" r="0.4"/><circle cx="12.1" cy="155.9" r="0.4"/><circle cx="18.3" cy="158.5" r="0.5"/><circle cx="20.9" cy="157.3" r="0.9"/><circle cx="21.3" cy="147.0" r="0.9"/><circle cx="19.4" cy="153.0" r="0.3"/><circle cx="13.3" cy="160.3" r="0.9"/><circle cx="26.1" cy="155.5" r="0.8"/><circle cx="16.2" cy="164.1" r="0.8"/><circle cx="24.2" cy="158.8" r="0.6"/><circle cx="17.4" cy="150.7" r="0.7"/><circle cx="18.5" cy="154.1" r="0.6"/><circle cx="13.4" cy="159.2" r="0.4"/><circle cx="23.1" cy="153.8" r="0.6"/><circle cx="9.3" cy="163.5" r="0.4"/><circle cx="20.5" cy="152.4" r="0.8"/><circle cx="9.8" cy="157.5" r="0.4"/><circle cx="18.7" cy="150.2" r="0.8"/><circle cx="10.1" cy="143.4" r="0.9"/><circle cx="18.2" cy="150.5" r="0.8"/><circle cx="25.7" cy="160.5" r="0.9"/><circle cx="18.1" cy="155.3" r="0.8"/><circle cx="11.7" cy="161.2" r="0.8"/><circle cx="23.7" cy="151.4" r="0.8"/><circle cx="25.6" cy="148.6" r="0.5"/><circle cx="22.4" cy="150.9" r="0.8"/><circle cx="11.9" cy="158.6" r="0.3"/><circle cx="27.7" cy="162.4" r="0.6"/><circle cx="16.2" cy="147.3" r="0.7"/><circle cx="13.7" cy="153.5" r="0.5"/><circle cx="14.7" cy="151.4" r="0.9"/><circle cx="24.1" cy="156.8" r="0.8"/><circle cx="16.6" cy="150.7" r="0.4"/><circle cx="15.4" cy="148.1" r="0.4"/><circle cx="23.2" cy="160.2" r="0.3"/><circle cx="13.6" cy="167.7" r="0.5"/><circle cx="17.8" cy="152.9" r="0.4"/><circle cx="26.1" cy="156.9" r="0.6"/><circle cx="18.2" cy="143.2" r="0.7"/><circle cx="22.1" cy="158.1" r="0.3"/><circle cx="18.7" cy="148.5" r="0.6"/><circle cx="31.2" cy="142.6" r="0.7"/><circle cx="7.9" cy="161.8" r="0.8"/><circle cx="18.4" cy="160.4" r="0.9"/><circle cx="30.1" cy="152.7" r="0.6"/><circle cx="23.5" cy="164.7" r="0.4"/><circle cx="12.3" cy="150.5" r="0.8"/><circle cx="13.1" cy="158.3" r="0.8"/><circle cx="13.8" cy="133.0" r="0.4"/><circle cx="23.0" cy="160.5" r="0.6"/><circle cx="22.2" cy="149.9" r="0.3"/><circle cx="12.6" cy="154.7" r="0.8"/><circle cx="21.3" cy="143.0" r="0.4"/><circle cx="13.4" cy="152.5" r="0.9"/><circle cx="22.1" cy="160.9" r="0.7"/><circle cx="19.4" cy="161.5" r="0.4"/><circle cx="21.6" cy="155.6" r="0.3"/><circle cx="8.7" cy="157.3" r="0.9"/><circle cx="16.5" cy="160.7" r="0.7"/><circle cx="15.0" cy="158.7" r="0.5"/><circle cx="19.8" cy="149.2" r="0.8"/><circle cx="20.1" cy="158.1" r="0.5"/><circle cx="17.5" cy="157.4" r="0.5"/><circle cx="20.4" cy="146.0" r="0.9"/><circle cx="15.0" cy="158.6" r="0.4"/><circle cx="14.0" cy="154.1" r="0.8"/><circle cx="15.5" cy="154.8" r="0.6"/><circle cx="13.5" cy="155.7" r="0.5"/><circle cx="6.7" cy="135.4" r="0.7"/><circle cx="16.9" cy="155.5" r="0.5"/><circle cx="17.4" cy="160.2" r="0.6"/><circle cx="16.3" cy="157.5" r="0.9"/><circle cx="26.0" cy="151.0" r="0.9"/><circle cx="8.1" cy="150.0" r="0.6"/><circle cx="11.0" cy="144.2" r="0.7"/><circle cx="19.4" cy="146.2" r="0.5"/><circle cx="21.1" cy="142.1" r="0.4"/><circle cx="17.4" cy="154.6" r="0.4"/><circle cx="18.7" cy="157.6" r="0.4"/><circle cx="15.5" cy="157.3" r="0.9"/><circle cx="17.9" cy="154.4" r="0.9"/><circle cx="9.7" cy="160.6" r="0.5"/><circle cx="18.6" cy="154.1" r="0.9"/><circle cx="23.1" cy="156.0" r="0.5"/><circle cx="13.4" cy="149.5" r="0.8"/><circle cx="18.6" cy="161.2" r="0.9"/><circle cx="2.6" cy="151.1" r="0.3"/><circle cx="21.3" cy="150.0" r="0.9"/><circle cx="15.6" cy="149.7" r="0.8"/><circle cx="20.6" cy="160.3" r="0.7"/><circle cx="18.0" cy="155.8" r="0.8"/><circle cx="20.8" cy="163.3" r="0.6"/><circle cx="21.0" cy="165.0" r="0.5"/><circle cx="16.0" cy="166.6" r="0.9"/><circle cx="9.2" cy="168.0" r="0.4"/><circle cx="19.1" cy="146.4" r="0.4"/><circle cx="12.8" cy="157.1" r="0.7"/><circle cx="11.5" cy="156.9" r="0.7"/><circle cx="15.6" cy="156.0" r="0.6"/><circle cx="19.9" cy="150.7" r="0.5"/><circle cx="20.0" cy="152.2" r="0.9"/><circle cx="15.7" cy="157.8" r="0.7"/><circle cx="22.1" cy="149.8" r="0.5"/><circle cx="17.5" cy="154.5" r="0.7"/><circle cx="16.7" cy="148.9" r="0.6"/><circle cx="17.9" cy="144.9" r="0.7"/><circle cx="20.8" cy="151.8" r="0.9"/><circle cx="13.4" cy="150.3" r="0.7"/><circle cx="14.9" cy="159.7" r="0.8"/><circle cx="19.8" cy="146.5" r="0.8"/><circle cx="20.9" cy="149.6" r="0.3"/><circle cx="18.9" cy="153.2" r="0.6"/></g><ellipse cx="15.7" cy="146.1" rx="2.2" ry="2.0" fill="#fff" stroke="#222" stroke-width="0.8"/><ellipse cx="7.0" cy="156.5" rx="1.6" ry="2.3" fill="#fff" stroke="#222" stroke-width="0.8"/><ellipse cx="25.4" cy="159.5" rx="1.9" ry="2.5" fill="#fff" stroke="#222" stroke-width="0.8"/><ellipse cx="13.3" cy="161.9" rx="2.3" ry="2.6" fill="#fff" stroke="#222" stroke-width="0.8"/><ellipse cx="9.2" cy="155.4" rx="2.3" ry="1.8" fill="#fff" stroke="#222" stroke-width="0.8"/><ellipse cx="23.0" cy="151.7" rx="1.7" ry="1.7" fill="#fff" stroke="#222" stroke-width="0.8"/><ellipse cx="15.0" cy="143.7" rx="2.4" ry="2.6" fill="#fff" stroke="#222" stroke-width="0.8"/><ellipse cx="18.7" cy="164.2" rx="2.7" ry="1.8" fill="#fff" stroke="#222" stroke-width="0.8"/><ellipse cx="23.0" cy="157.9" rx="2.1" ry="2.1" fill="#fff" stroke="#222" stroke-width="0.8"/><ellipse cx="16.1" cy="148.8" rx="1.9" ry="1.9" fill="#fff" stroke="#222" stroke-width="0.8"/><ellipse cx="20.9" cy="160.2" rx="2.4" ry="1.8" fill="#fff" stroke="#222" stroke-width="0.8"/><ellipse cx="23.2" cy="161.1" rx="1.6" ry="2.5" fill="#fff" stroke="#222" stroke-width="0.8"/><ellipse cx="13.1" cy="150.5" rx="1.5" ry="2.5" fill="#fff" stroke="#222" stroke-width="0.8"/><ellipse cx="26.5" cy="155.3" rx="2.3" ry="2.3" fill="#fff" stroke="#222" stroke-width="0.8"/><ellipse cx="19.9" cy="163.0" rx="1.9" ry="2.2" fill="#fff" stroke="#222" stroke-width="0.8"/><ellipse cx="25.3" cy="152.1" rx="1.7" ry="1.8" fill="#fff" stroke="#222" stroke-width="0.8"/><ellipse cx="8.6" cy="159.5" rx="2.7" ry="2.0" fill="#fff" stroke="#222" stroke-width="0.8"/><ellipse cx="11.4" cy="150.6" rx="2.2" ry="1.9" fill="#fff" stroke="#222" stroke-width="0.8"/><ellipse cx="23.3" cy="151.7" rx="2.0" ry="2.2" fill="#fff" stroke="#222" stroke-width="0.8"/><ellipse cx="17.7" cy="157.6" rx="2.2" ry="2.5" fill="#fff" stroke="#222" stroke-width="0.8"/><ellipse cx="13.1" cy="158.3" rx="1.9" ry="2.2" fill="#fff" stroke="#222" stroke-width="0.8"/><ellipse cx="16.0" cy="162.0" rx="2.3" ry="1.5" fill="#fff" stroke="#222" stroke-width="0.8"/><circle cx="51" cy="154" r="13" fill="#000"/><g fill="#fff"><circle cx="40.3" cy="150.2" r="1.5"/><circle cx="40.5" cy="157.5" r="1.6"/><circle cx="42.6" cy="146.3" r="1.5"/><circle cx="44.1" cy="150.1" r="1.4"/><circle cx="42.1" cy="153.7" r="1.4"/><circle cx="44.5" cy="157.8" r="2.0"/><circle cx="47.2" cy="146.7" r="2.0"/><circle cx="49.1" cy="149.9" r="1.6"/><circle cx="46.5" cy="153.6" r="1.9"/><circle cx="48.8" cy="158.2" r="1.7"/><circle cx="47.2" cy="162.1" r="1.4"/><circle cx="53.1" cy="142.8" r="1.7"/><circle cx="50.6" cy="146.3" r="1.9"/><circle cx="52.9" cy="149.7" r="1.6"/><circle cx="51.5" cy="154.3" r="1.5"/><circle cx="52.9" cy="157.5" r="1.4"/><circle cx="51.3" cy="161.5" r="1.8"/><circle cx="55.4" cy="145.8" r="1.7"/><circle cx="57.2" cy="149.9" r="2.1"/><circle cx="55.6" cy="153.8" r="2.0"/><circle cx="57.2" cy="157.8" r="2.0"/><circle cx="55.4" cy="161.4" r="2.1"/><circle cx="61.3" cy="150.2" r="1.6"/><circle cx="59.7" cy="153.9" r="1.7"/></g><g fill="#000" opacity="0.85"><circle cx="85.7" cy="163.4" r="0.6"/><circle cx="89.0" cy="146.5" r="0.6"/><circle cx="89.7" cy="162.5" r="0.4"/><circle cx="86.2" cy="161.9" r="1.2"/><circle cx="81.0" cy="150.8" r="1.2"/><circle cx="85.2" cy="154.7" r="0.6"/><circle cx="83.3" cy="154.6" r="0.5"/><circle cx="79.0" cy="160.0" r="0.4"/><circle cx="77.2" cy="162.4" r="1.3"/><circle cx="79.5" cy="146.3" r="0.9"/><circle cx="85.8" cy="154.9" r="0.3"/><circle cx="93.6" cy="149.0" r="1.3"/><circle cx="94.4" cy="155.2" r="0.8"/><circle cx="84.3" cy="148.6" r="1.3"/><circle cx="92.6" cy="157.6" r="1.0"/><circle cx="93.5" cy="148.3" r="1.0"/><circle cx="88.3" cy="143.1" r="0.7"/><circle cx="80.2" cy="143.8" r="1.2"/><circle cx="75.4" cy="159.1" r="1.2"/><circle cx="76.6" cy="150.2" r="0.7"/><circle cx="77.0" cy="149.8" r="0.4"/><circle cx="76.7" cy="144.8" r="1.2"/><circle cx="84.1" cy="147.9" r="1.0"/><circle cx="78.6" cy="150.7" r="1.1"/><circle cx="94.2" cy="158.9" r="0.3"/><circle cx="78.7" cy="149.7" r="0.5"/><circle cx="82.5" cy="147.0" r="0.9"/><circle cx="89.4" cy="151.8" r="0.3"/><circle cx="81.9" cy="162.7" r="0.5"/><circle cx="90.9" cy="163.8" r="1.0"/><circle cx="73.8" cy="158.0" r="0.6"/><circle cx="82.9" cy="150.7" r="0.7"/><circle cx="89.2" cy="143.4" r="1.2"/><circle cx="78.3" cy="159.5" r="0.6"/><circle cx="90.2" cy="159.5" r="1.1"/><circle cx="91.0" cy="146.3" r="1.3"/><circle cx="84.4" cy="157.4" r="0.8"/><circle cx="84.3" cy="158.0" r="0.7"/><circle cx="79.4" cy="148.8" r="0.6"/><circle cx="91.8" cy="144.0" r="0.8"/><circle cx="86.0" cy="154.5" r="1.2"/><circle cx="94.9" cy="156.4" r="0.9"/><circle cx="81.0" cy="163.5" r="0.3"/><circle cx="89.9" cy="159.2" r="0.3"/><circle cx="87.3" cy="150.2" r="0.4"/><circle cx="94.0" cy="156.5" r="0.7"/><circle cx="78.4" cy="147.5" r="1.1"/><circle cx="94.6" cy="151.6" r="0.5"/><circle cx="81.2" cy="154.6" r="0.3"/><circle cx="74.9" cy="155.6" r="0.5"/><circle cx="84.1" cy="159.6" r="1.0"/><circle cx="75.8" cy="152.9" r="1.1"/><circle cx="76.3" cy="160.3" r="1.2"/><circle cx="95.6" cy="160.0" r="1.0"/><circle cx="90.1" cy="159.0" r="0.9"/><circle cx="90.5" cy="150.8" r="0.9"/><circle cx="93.0" cy="147.0" r="1.2"/><circle cx="75.6" cy="156.0" r="0.5"/><circle cx="83.0" cy="143.7" r="0.9"/><circle cx="84.1" cy="150.0" r="1.2"/><circle cx="97.7" cy="152.6" r="0.8"/><circle cx="86.5" cy="148.8" r="1.2"/><circle cx="88.8" cy="149.5" r="0.4"/><circle cx="77.0" cy="156.9" r="1.1"/><circle cx="83.9" cy="154.1" r="1.1"/><circle cx="95.2" cy="158.0" r="0.5"/><circle cx="79.4" cy="162.7" r="0.4"/><circle cx="89.9" cy="160.1" r="1.0"/><circle cx="90.4" cy="146.2" r="1.2"/><circle cx="72.5" cy="154.5" r="0.4"/><circle cx="86.5" cy="161.5" r="0.6"/><circle cx="83.7" cy="145.3" r="0.8"/><circle cx="89.8" cy="147.3" r="0.6"/><circle cx="76.5" cy="161.2" r="1.2"/><circle cx="88.0" cy="164.3" r="1.3"/><circle cx="76.3" cy="152.8" r="0.5"/><circle cx="77.2" cy="152.3" r="0.9"/><circle cx="97.5" cy="156.0" r="0.8"/><circle cx="76.0" cy="160.0" r="0.9"/><circle cx="75.0" cy="154.5" r="0.4"/><circle cx="78.2" cy="152.4" r="1.3"/><circle cx="89.6" cy="151.8" r="0.8"/><circle cx="90.1" cy="158.8" r="1.1"/><circle cx="91.3" cy="149.8" r="0.6"/><circle cx="88.3" cy="162.0" r="1.2"/><circle cx="92.5" cy="161.3" r="0.3"/><circle cx="86.6" cy="158.0" r="1.0"/><circle cx="82.2" cy="159.2" r="0.9"/><circle cx="93.3" cy="159.9" r="0.4"/><circle cx="80.1" cy="153.7" r="0.5"/><circle cx="77.9" cy="152.7" r="0.7"/><circle cx="77.9" cy="158.0" r="0.5"/><circle cx="87.7" cy="162.3" r="0.9"/><circle cx="73.6" cy="152.0" r="0.9"/><circle cx="87.9" cy="150.6" r="1.0"/><circle cx="89.5" cy="143.6" r="0.6"/><circle cx="80.1" cy="164.4" r="0.5"/><circle cx="97.0" cy="153.9" r="0.4"/><circle cx="85.7" cy="163.6" r="0.6"/><circle cx="94.4" cy="160.0" r="0.7"/><circle cx="85.8" cy="151.3" r="0.7"/><circle cx="84.7" cy="153.3" r="0.5"/><circle cx="80.0" cy="143.8" r="1.3"/><circle cx="91.0" cy="158.9" r="1.1"/><circle cx="75.0" cy="153.8" r="0.5"/><circle cx="87.4" cy="155.1" r="0.3"/><circle cx="77.3" cy="151.6" r="0.9"/><circle cx="87.4" cy="156.9" r="0.5"/><circle cx="91.9" cy="143.9" r="1.2"/><circle cx="86.5" cy="155.0" r="1.3"/><circle cx="74.5" cy="156.3" r="0.6"/><circle cx="77.0" cy="155.6" r="0.7"/><circle cx="84.5" cy="153.7" r="1.0"/><circle cx="87.2" cy="151.0" r="0.8"/><circle cx="84.5" cy="147.6" r="0.5"/><circle cx="89.1" cy="160.5" r="0.3"/><circle cx="93.7" cy="147.6" r="1.0"/><circle cx="91.0" cy="147.3" r="0.7"/><circle cx="78.5" cy="149.6" r="1.3"/><circle cx="86.7" cy="149.6" r="1.2"/><circle cx="84.6" cy="143.9" r="1.1"/><circle cx="75.0" cy="160.2" r="1.2"/><circle cx="81.3" cy="144.6" r="1.1"/><circle cx="76.4" cy="159.3" r="0.4"/><circle cx="80.8" cy="159.9" r="0.3"/><circle cx="79.1" cy="160.9" r="0.9"/><circle cx="86.4" cy="165.5" r="1.0"/><circle cx="79.9" cy="161.6" r="0.9"/><circle cx="78.4" cy="152.7" r="1.3"/><circle cx="78.6" cy="146.7" r="1.1"/><circle cx="85.9" cy="153.9" r="0.9"/><circle cx="84.6" cy="149.4" r="0.7"/><circle cx="88.9" cy="155.2" r="0.7"/><circle cx="89.0" cy="156.6" r="1.2"/><circle cx="77.3" cy="151.7" r="1.3"/><circle cx="73.2" cy="149.0" r="0.9"/><circle cx="85.8" cy="152.2" r="0.9"/><circle cx="85.1" cy="152.6" r="1.2"/><circle cx="89.1" cy="160.0" r="0.5"/><circle cx="75.8" cy="154.2" r="0.4"/><circle cx="91.7" cy="151.8" r="0.8"/><circle cx="79.7" cy="150.6" r="0.6"/><circle cx="80.1" cy="147.4" r="0.6"/><circle cx="83.8" cy="149.0" r="0.3"/><circle cx="85.0" cy="155.3" r="0.5"/><circle cx="85.2" cy="147.8" r="1.2"/><circle cx="85.0" cy="152.5" r="1.3"/><circle cx="87.0" cy="153.3" r="1.2"/><circle cx="78.0" cy="157.1" r="1.3"/><circle cx="85.3" cy="161.6" r="1.2"/><circle cx="83.7" cy="147.0" r="1.3"/><circle cx="88.7" cy="146.3" r="0.4"/><circle cx="79.7" cy="149.1" r="0.5"/><circle cx="92.9" cy="156.5" r="0.4"/><circle cx="75.8" cy="157.2" r="0.8"/><circle cx="84.3" cy="162.2" r="0.7"/><circle cx="86.5" cy="146.4" r="1.3"/><circle cx="95.0" cy="151.2" r="0.5"/><circle cx="94.1" cy="161.3" r="1.1"/><circle cx="80.5" cy="149.9" r="0.6"/><circle cx="81.5" cy="146.6" r="0.9"/><circle cx="77.9" cy="146.7" r="0.5"/><circle cx="85.1" cy="165.8" r="1.2"/><circle cx="86.0" cy="153.1" r="0.4"/><circle cx="84.1" cy="160.5" r="0.9"/><circle cx="91.8" cy="158.7" r="0.4"/><circle cx="93.5" cy="158.7" r="0.9"/><circle cx="80.6" cy="149.6" r="0.8"/><circle cx="86.5" cy="159.5" r="1.0"/><circle cx="86.1" cy="152.3" r="0.4"/><circle cx="88.4" cy="146.0" r="1.1"/><circle cx="86.6" cy="160.4" r="0.6"/><circle cx="87.4" cy="148.4" r="1.0"/><circle cx="90.9" cy="153.6" r="0.8"/><circle cx="84.7" cy="142.7" r="0.7"/><circle cx="83.3" cy="155.7" r="1.2"/><circle cx="87.0" cy="155.0" r="0.9"/><circle cx="75.1" cy="154.9" r="0.6"/><circle cx="85.3" cy="152.0" r="0.5"/><circle cx="83.8" cy="152.2" r="0.6"/><circle cx="83.4" cy="144.8" r="0.6"/><circle cx="88.9" cy="158.6" r="1.0"/><circle cx="83.1" cy="156.0" r="1.0"/><circle cx="73.9" cy="149.2" r="1.2"/><circle cx="91.2" cy="150.5" r="1.1"/><circle cx="83.0" cy="159.1" r="0.7"/><circle cx="96.0" cy="149.6" r="0.5"/><circle cx="80.9" cy="158.5" r="0.7"/><circle cx="79.7" cy="157.8" r="0.5"/><circle cx="74.8" cy="150.0" r="0.8"/><circle cx="89.5" cy="147.1" r="0.5"/><circle cx="85.7" cy="143.0" r="0.6"/><circle cx="93.1" cy="155.1" r="0.8"/><circle cx="73.4" cy="149.2" r="1.0"/><circle cx="85.6" cy="152.3" r="0.8"/><circle cx="85.5" cy="151.9" r="0.4"/><circle cx="84.0" cy="142.9" r="0.4"/><circle cx="82.8" cy="151.7" r="1.0"/><circle cx="82.1" cy="150.4" r="0.5"/><circle cx="85.8" cy="146.4" r="1.1"/><circle cx="80.2" cy="157.5" r="1.3"/><circle cx="81.3" cy="147.5" r="0.8"/><circle cx="83.1" cy="144.7" r="1.2"/><circle cx="75.4" cy="159.6" r="1.0"/><circle cx="91.8" cy="145.8" r="1.1"/><circle cx="94.6" cy="146.5" r="0.9"/><circle cx="74.9" cy="152.6" r="1.1"/><circle cx="78.8" cy="157.1" r="0.4"/><circle cx="84.3" cy="142.1" r="0.7"/><circle cx="87.1" cy="157.4" r="0.7"/><circle cx="81.7" cy="165.3" r="0.4"/><circle cx="84.0" cy="156.5" r="0.9"/><circle cx="85.6" cy="150.4" r="0.4"/><circle cx="76.4" cy="156.1" r="1.2"/><circle cx="87.7" cy="154.6" r="0.5"/><circle cx="86.0" cy="158.3" r="1.0"/><circle cx="81.2" cy="151.6" r="0.5"/><circle cx="84.3" cy="157.4" r="1.1"/><circle cx="81.8" cy="161.3" r="1.1"/><circle cx="80.0" cy="154.6" r="1.2"/></g><circle cx="119" cy="154" r="13" fill="#000"/><g fill="#fff" opacity="1"><circle cx="123.9" cy="151.1" r="1.2"/><circle cx="125.9" cy="152.1" r="0.7"/><circle cx="130.0" cy="157.6" r="1.6"/><circle cx="113.2" cy="159.1" r="1.1"/><circle cx="117.2" cy="165.8" r="1.4"/><circle cx="119.0" cy="154.5" r="1.1"/><circle cx="111.9" cy="161.4" r="1.4"/><circle cx="116.4" cy="152.0" r="0.6"/><circle cx="117.0" cy="158.2" r="1.7"/><circle cx="110.3" cy="153.1" r="1.9"/><circle cx="118.2" cy="161.7" r="0.5"/><circle cx="119.0" cy="153.9" r="1.6"/><circle cx="124.9" cy="145.4" r="0.4"/><circle cx="117.8" cy="163.4" r="0.5"/><circle cx="112.0" cy="154.9" r="1.8"/><circle cx="109.8" cy="148.4" r="0.8"/><circle cx="120.6" cy="147.7" r="1.8"/><circle cx="127.8" cy="159.7" r="0.6"/><circle cx="111.6" cy="151.9" r="0.6"/><circle cx="121.6" cy="149.4" r="0.8"/><circle cx="123.6" cy="156.4" r="1.0"/><circle cx="117.7" cy="148.3" r="1.4"/><circle cx="123.9" cy="157.9" r="1.0"/><circle cx="129.3" cy="151.8" r="1.3"/><circle cx="125.0" cy="154.5" r="1.4"/><circle cx="119.6" cy="162.0" r="1.0"/><circle cx="130.9" cy="154.8" r="1.6"/><circle cx="121.3" cy="162.2" r="0.8"/><circle cx="113.5" cy="159.5" r="0.8"/><circle cx="115.7" cy="159.3" r="1.4"/><circle cx="118.8" cy="157.9" r="1.5"/><circle cx="113.5" cy="164.1" r="1.2"/><circle cx="118.1" cy="148.5" r="1.6"/><circle cx="121.5" cy="155.7" r="0.5"/><circle cx="114.9" cy="145.5" r="0.6"/><circle cx="110.3" cy="160.1" r="1.2"/><circle cx="122.6" cy="156.3" r="0.6"/><circle cx="123.5" cy="158.5" r="0.4"/><circle cx="124.8" cy="150.8" r="1.1"/><circle cx="113.0" cy="146.0" r="1.6"/><circle cx="114.8" cy="157.6" r="1.0"/><circle cx="125.3" cy="154.6" r="1.4"/><circle cx="129.1" cy="152.8" r="1.4"/><circle cx="118.4" cy="153.5" r="0.8"/><circle cx="114.1" cy="161.4" r="0.5"/><circle cx="113.6" cy="159.2" r="1.6"/><circle cx="122.9" cy="146.4" r="0.6"/><circle cx="120.2" cy="142.9" r="1.2"/><circle cx="114.6" cy="159.9" r="0.5"/><circle cx="116.3" cy="142.4" r="1.1"/><circle cx="116.7" cy="143.7" r="0.6"/><circle cx="127.1" cy="151.1" r="0.6"/><circle cx="122.9" cy="156.2" r="1.2"/><circle cx="117.2" cy="148.8" r="1.8"/><circle cx="114.5" cy="159.4" r="0.5"/><circle cx="121.9" cy="153.5" r="1.7"/><circle cx="111.3" cy="151.8" r="1.2"/><circle cx="118.0" cy="165.2" r="1.9"/><circle cx="122.5" cy="146.3" r="0.5"/><circle cx="121.3" cy="149.5" r="1.7"/><circle cx="119.5" cy="162.1" r="1.6"/><circle cx="122.1" cy="161.2" r="0.4"/><circle cx="122.5" cy="154.7" r="1.9"/><circle cx="127.3" cy="150.7" r="0.8"/><circle cx="114.4" cy="145.5" r="0.9"/><circle cx="110.4" cy="148.4" r="0.3"/><circle cx="121.2" cy="160.7" r="0.5"/><circle cx="112.9" cy="159.3" r="0.6"/><circle cx="114.3" cy="153.4" r="1.2"/><circle cx="114.7" cy="161.7" r="0.4"/><circle cx="117.5" cy="151.3" r="1.8"/><circle cx="113.3" cy="149.8" r="1.0"/><circle cx="112.4" cy="147.5" r="1.5"/><circle cx="119.1" cy="146.8" r="1.9"/><circle cx="124.7" cy="144.9" r="1.0"/><circle cx="111.6" cy="157.2" r="1.7"/><circle cx="111.5" cy="152.8" r="1.0"/><circle cx="123.5" cy="150.9" r="0.4"/><circle cx="117.3" cy="143.0" r="1.5"/><circle cx="111.0" cy="148.3" r="0.8"/><circle cx="117.5" cy="153.0" r="0.5"/><circle cx="112.0" cy="156.4" r="0.9"/><circle cx="127.8" cy="157.0" r="1.1"/><circle cx="119.4" cy="159.2" r="0.9"/><circle cx="119.2" cy="155.8" r="1.8"/><circle cx="127.8" cy="152.1" r="1.7"/><circle cx="109.9" cy="158.9" r="0.7"/><circle cx="118.8" cy="145.9" r="1.7"/><circle cx="127.3" cy="159.9" r="0.5"/><circle cx="107.7" cy="151.3" r="0.3"/><circle cx="119.2" cy="159.2" r="0.8"/><circle cx="129.3" cy="158.3" r="1.6"/><circle cx="114.3" cy="157.5" r="1.2"/><circle cx="120.0" cy="154.3" r="1.7"/><circle cx="116.4" cy="160.9" r="1.8"/><circle cx="126.0" cy="153.0" r="0.6"/><circle cx="115.8" cy="164.9" r="1.7"/><circle cx="122.6" cy="164.0" r="0.9"/><circle cx="115.6" cy="154.6" r="1.7"/><circle cx="122.9" cy="153.9" r="1.3"/><circle cx="122.9" cy="164.2" r="0.4"/><circle cx="126.5" cy="159.9" r="0.8"/><circle cx="127.8" cy="147.6" r="1.4"/><circle cx="125.2" cy="161.0" r="1.8"/><circle cx="117.1" cy="154.7" r="0.7"/><circle cx="115.7" cy="162.8" r="0.6"/><circle cx="120.8" cy="158.0" r="1.4"/><circle cx="120.5" cy="148.2" r="1.4"/><circle cx="125.2" cy="148.5" r="0.7"/><circle cx="115.4" cy="164.8" r="1.4"/></g><defs><linearGradient id="lg2" x1="0" y1="0" x2="0" y2="1"><stop offset="0" stop-color="#000"/><stop offset="0.55" stop-color="#222"/><stop offset="1" stop-color="#ddd"/></linearGradient></defs><circle cx="153" cy="154" r="12" fill="url(#lg2)"/><g fill="#fff" opacity="0.8"><circle cx="151.8" cy="155.8" r="0.4"/><circle cx="158.6" cy="149.5" r="0.8"/><circle cx="151.9" cy="149.8" r="0.9"/><circle cx="152.2" cy="153.0" r="1.1"/><circle cx="156.5" cy="151.7" r="1.1"/><circle cx="153.1" cy="153.3" r="0.8"/><circle cx="156.6" cy="156.8" r="1.3"/><circle cx="158.7" cy="151.0" r="1.1"/><circle cx="145.9" cy="155.0" r="0.8"/><circle cx="155.8" cy="154.8" r="0.9"/><circle cx="148.3" cy="154.6" r="1.1"/><circle cx="146.8" cy="149.5" r="1.1"/><circle cx="150.5" cy="145.4" r="1.3"/><circle cx="156.9" cy="156.0" r="0.5"/><circle cx="150.2" cy="148.2" r="0.7"/><circle cx="154.2" cy="143.3" r="1.1"/><circle cx="153.5" cy="154.8" r="0.5"/><circle cx="147.6" cy="147.6" r="0.3"/><circle cx="146.5" cy="146.4" r="0.9"/><circle cx="155.1" cy="148.3" r="0.5"/><circle cx="159.1" cy="150.5" r="0.7"/><circle cx="149.3" cy="151.1" r="1.1"/><circle cx="161.4" cy="153.3" r="0.9"/><circle cx="144.8" cy="148.2" r="0.5"/><circle cx="155.7" cy="152.8" r="0.3"/></g><rect x="28.5" y="165.25" width="5" height="1.5" fill="#111"/><rect x="30.25" y="163.5" width="1.5" height="5" fill="#111"/><rect x="62.5" y="165.25" width="5" height="1.5" fill="#111"/><rect x="64.25" y="163.5" width="1.5" height="5" fill="#111"/><rect x="98" y="165" width="4" height="4" fill="#ff8080" opacity="0.6"/><rect x="96.5" y="165.25" width="5" height="1.5" fill="#111"/><rect x="98.25" y="163.5" width="1.5" height="5" fill="#111"/><rect x="132" y="165" width="4" height="4" fill="#ff8080" opacity="0.6"/><rect x="130.5" y="165.25" width="5" height="1.5" fill="#111"/><rect x="132.25" y="163.5" width="1.5" height="5" fill="#111"/><rect x="166" y="165" width="4" height="4" fill="#ff8080" opacity="0.6"/><rect x="164.5" y="165.25" width="5" height="1.5" fill="#111"/><rect x="166.25" y="163.5" width="1.5" height="5" fill="#111"/><ellipse cx="17" cy="188" rx="12" ry="7" fill="#111"/><g fill="#fff" opacity="1"><circle cx="13.9" cy="192.0" r="1.1"/><circle cx="16.3" cy="192.1" r="0.4"/><circle cx="18.4" cy="186.4" r="0.7"/><circle cx="21.6" cy="191.9" r="1.6"/><circle cx="17.4" cy="187.2" r="1.0"/><circle cx="14.5" cy="189.5" r="1.9"/><circle cx="23.4" cy="189.0" r="1.5"/><circle cx="19.8" cy="187.9" r="1.0"/><circle cx="17.0" cy="187.4" r="0.7"/><circle cx="19.2" cy="187.0" r="0.9"/><circle cx="15.2" cy="191.1" r="0.4"/><circle cx="27.7" cy="189.3" r="1.5"/><circle cx="16.6" cy="185.9" r="0.7"/><circle cx="13.1" cy="187.3" r="1.0"/><circle cx="21.9" cy="186.8" r="0.8"/><circle cx="24.7" cy="187.5" r="0.4"/><circle cx="10.3" cy="190.5" r="0.4"/><circle cx="12.3" cy="191.9" r="1.7"/><circle cx="8.5" cy="185.0" r="1.0"/><circle cx="9.4" cy="191.3" r="0.9"/><circle cx="17.7" cy="186.0" r="0.9"/><circle cx="19.9" cy="191.6" r="0.6"/><circle cx="18.1" cy="190.0" r="1.0"/><circle cx="14.7" cy="191.2" r="1.9"/><circle cx="12.7" cy="183.1" r="0.6"/><circle cx="15.7" cy="188.6" r="1.4"/><circle cx="14.1" cy="189.8" r="0.3"/><circle cx="18.8" cy="190.1" r="0.9"/><circle cx="24.7" cy="185.8" r="0.7"/><circle cx="15.1" cy="189.2" r="1.8"/><circle cx="11.2" cy="191.8" r="1.5"/><circle cx="17.6" cy="187.8" r="0.8"/><circle cx="15.6" cy="188.7" r="1.7"/><circle cx="12.8" cy="192.5" r="1.1"/><circle cx="22.4" cy="189.1" r="0.7"/><circle cx="19.8" cy="188.4" r="1.3"/><circle cx="21.8" cy="188.5" r="1.0"/><circle cx="14.4" cy="187.6" r="1.4"/><circle cx="16.4" cy="192.8" r="1.4"/><circle cx="19.2" cy="189.6" r="0.7"/></g><path d="M40.4 180.0 L64.2 179.8" stroke="#555" stroke-width="0.9" stroke-dasharray="2.7 0.8"/><path d="M39.5 181.7 L63.9 181.5" stroke="#555" stroke-width="0.9" stroke-dasharray="1.4 0.8"/><path d="M39.1 183.4 L63.1 183.6" stroke="#555" stroke-width="0.9" stroke-dasharray="2.1 0.8"/><path d="M40.6 185.1 L65.9 184.8" stroke="#555" stroke-width="0.9" stroke-dasharray="2.3 0.8"/><path d="M40.8 186.8 L63.6 187.1" stroke="#555" stroke-width="0.9" stroke-dasharray="2.3 0.8"/><path d="M40.9 188.5 L65.6 188.1" stroke="#555" stroke-width="0.9" stroke-dasharray="2.3 0.8"/><path d="M39.2 190.2 L64.3 190.0" stroke="#555" stroke-width="0.9" stroke-dasharray="1.1 0.8"/><path d="M39.8 191.9 L64.0 191.9" stroke="#555" stroke-width="0.9" stroke-dasharray="1.6 0.8"/><path d="M39.3 193.6 L64.2 193.6" stroke="#555" stroke-width="0.9" stroke-dasharray="1.3 0.8"/><path d="M58 195 L65 197" stroke="#555" stroke-width="1"/><g fill="#000" opacity="0.7"><circle cx="84.4" cy="183.6" r="0.4"/><circle cx="84.1" cy="194.4" r="0.4"/><circle cx="83.0" cy="182.6" r="0.7"/><circle cx="84.9" cy="187.0" r="0.6"/><circle cx="84.7" cy="189.5" r="0.6"/><circle cx="86.7" cy="190.9" r="0.8"/><circle cx="83.7" cy="189.2" r="0.5"/><circle cx="86.4" cy="189.0" r="1.0"/><circle cx="83.9" cy="185.8" r="0.8"/><circle cx="85.7" cy="195.6" r="0.8"/><circle cx="86.4" cy="186.1" r="0.8"/><circle cx="87.3" cy="183.9" r="0.8"/><circle cx="83.8" cy="182.8" r="0.6"/><circle cx="84.6" cy="200.1" r="1.0"/><circle cx="82.9" cy="196.9" r="0.3"/><circle cx="86.2" cy="194.6" r="0.5"/><circle cx="83.1" cy="198.6" r="0.4"/><circle cx="85.4" cy="192.7" r="0.8"/><circle cx="85.0" cy="188.1" r="0.7"/><circle cx="84.1" cy="191.2" r="0.7"/><circle cx="83.8" cy="180.6" r="0.8"/><circle cx="82.6" cy="183.4" r="1.1"/><circle cx="84.3" cy="193.8" r="1.0"/><circle cx="84.1" cy="198.2" r="0.9"/><circle cx="83.9" cy="175.4" r="1.0"/><circle cx="86.2" cy="196.5" r="0.7"/><circle cx="83.6" cy="185.3" r="0.5"/><circle cx="85.0" cy="179.0" r="0.5"/><circle cx="85.0" cy="194.4" r="0.4"/><circle cx="84.3" cy="187.7" r="0.4"/></g><g stroke="#888" stroke-width="2.5"><path d="M114 175 L118 182 M123 177 L120 182 M112 186 L115 190 M121 186 L131 185 M135 184 L137 190 M116 194 L124 192 M127 192 L132 196"/></g><g fill="none" stroke="#777" stroke-width="1.2"><path d="M141 185 L146 183 L152 186 L164 185 L167 192 L165 197 L160 193 L147 194 L144 197 L141 192 Z M143 180 L147 186 M145 178 L143 184"/></g><rect x="28.5" y="199.25" width="5" height="1.5" fill="#111"/><rect x="30.25" y="197.5" width="1.5" height="5" fill="#111"/><rect x="62.5" y="199.25" width="5" height="1.5" fill="#111"/><rect x="64.25" y="197.5" width="1.5" height="5" fill="#111"/><rect x="98" y="199" width="4" height="4" fill="#ff8080" opacity="0.6"/><rect x="96.5" y="199.25" width="5" height="1.5" fill="#111"/><rect x="98.25" y="197.5" width="1.5" height="5" fill="#111"/><rect x="166" y="199" width="4" height="4" fill="#ff8080" opacity="0.6"/><rect x="164.5" y="199.25" width="5" height="1.5" fill="#111"/><rect x="166.25" y="197.5" width="1.5" height="5" fill="#111"/></svg>
<div style="left:826px;top:300px;width:194px;height:16px;background:#1f1f1f;"></div>
<div style="top:301.8px;font-size:12px;line-height:12px;color:#ebebeb;white-space:pre;left:827.02px;transform:scaleX(0.9806);transform-origin:0 0;">Basic,</div>
<svg style="left:1007px;top:303px;" width="12" height="8" viewBox="0 0 12 8"><path d="M1 1 L6 6 L11 1" fill="none" stroke="#e8e8e8" stroke-width="1.6"/></svg>
<div style="left:826px;top:319px;width:196px;height:17px;background:#3a3a3a;border:1px solid #6a6a6a;"></div>
<div style="left:827px;top:320px;width:1px;height:15px;background:#555;"></div>
<div style="top:320.8px;font-size:12px;line-height:12px;color:#ebebeb;white-space:pre;left:827.00px;transform:scaleX(0.9256);transform-origin:0 0;">Abstand</div>
<div style="top:320.8px;font-size:12px;line-height:12px;color:#ebebeb;white-space:pre;left:987.00px;transform:scaleX(0.8955);transform-origin:0 0;">10,0</div>
<svg style="left:1010px;top:321px;" width="11" height="14" viewBox="0 0 11 14"><path d="M2 5 L5.5 1.5 L9 5 M2 9 L5.5 12.5 L9 9" fill="none" stroke="#d8d8d8" stroke-width="1.3"/></svg>
<svg style="left:826px;top:339px;" width="196" height="18" viewBox="0 0 196 18">
<g fill="none" stroke="#c4c4c4" stroke-width="1.5">
<path d="M8 4 L14 4 M8 7.5 L12 7.5 M8 11 L11 11 M8 14.5 L20 14.5"/>
<path d="M13 12 L20 4"/>
<path d="M42 5 L46 5 L52 5 L52 15 L42 15 Z M48 5 L52 9"/>
<path d="M73 3 L81 3 L81 9 M73 3 L73 9 L79 9"/>
<path d="M76 10 L76 14.5 L85 14.5 L85 7 L82 7"/>
</g>
<path d="M38 4 L44 4 M41 1 L41 7" stroke="#c4c4c4" stroke-width="1.6"/>
<rect x="104" y="2" width="13" height="13" fill="#c4c4c4"/>
<path d="M106.5 4.5 L114.5 12.5 M114.5 4.5 L106.5 12.5" stroke="#333" stroke-width="1.8"/>
<path d="M146 5 A5 5 0 1 0 147 12" fill="none" stroke="#c4c4c4" stroke-width="2"/>
<path d="M143.5 2 L148.5 6 L143 8 Z" fill="#c4c4c4"/>
<g fill="#c4c4c4"><path d="M173 2 L179 2 L182 5 L182 9 L175 9 L175 12 L171 12 L171 15 L184 15 L184 9 L182 9"/><rect x="171" y="9" width="13" height="6"/></g>
<path d="M175 3 L175 8 L181 8" fill="none" stroke="#c4c4c4" stroke-width="1.2"/>
</svg>
<div style="left:915px;top:361px;width:4px;height:2px;background:#aaa;"></div>
<div style="left:921px;top:361px;width:4px;height:2px;background:#aaa;"></div>
<div style="left:927px;top:361px;width:4px;height:2px;background:#aaa;"></div>
<div style="left:822px;top:364px;width:59px;height:25px;background:#3f3f3f;border:1px solid #595959;border-bottom:none;"></div>
<div style="left:881px;top:367px;width:53px;height:20px;background:#2d2d2d;"></div>
<div style="left:935px;top:367px;width:47px;height:20px;background:#2d2d2d;"></div>
<div style="left:822px;top:388px;width:202px;height:377px;background:#3e3e3e;border:1px solid #575757;border-right:1px solid #333;"></div>
<div style="left:881px;top:388px;width:143px;height:1px;background:#575757;"></div>
<div style="left:823px;top:388px;width:58px;height:1px;background:#3f3f3f;"></div>
<svg style="left:825px;top:368px;" width="14" height="16" viewBox="0 0 14 16"><g fill="#c4c4c4"><path d="M3 1 L13 1 L11 4 L1 4 Z"/><path d="M3 6 L13 6 L11 9 L1 9 Z"/><path d="M3 11 L13 11 L11 14 L1 14 Z"/></g></svg>
<div style="top:369.8px;font-size:12px;line-height:12px;color:#ebebeb;white-space:pre;left:838.80px;transform:scaleX(0.9000);transform-origin:0 0;">Ebenen</div>
<svg style="left:883px;top:369px;" width="14" height="15" viewBox="0 0 14 15"><rect x="0.5" y="0.5" width="12" height="13" fill="none" stroke="#c4c4c4" stroke-width="1"/><path d="M4 3 L4 11 M6.5 3 L6.5 11 M9 3 L9 11" stroke="#c4c4c4" stroke-width="1.3"/></svg>
<div style="top:369.8px;font-size:12px;line-height:12px;color:#ebebeb;white-space:pre;left:895.69px;transform:scaleX(0.9111);transform-origin:0 0;">Kanäle</div>
<svg style="left:936px;top:370px;" width="17" height="12" viewBox="0 0 17 12"><path d="M1 2 L15 2 M2 10 C4 4 12 4 14 10" fill="none" stroke="#c4c4c4" stroke-width="1.8"/><path d="M8 1 L8 5" stroke="#c4c4c4" stroke-width="1.5"/></svg>
<div style="top:369.8px;font-size:12px;line-height:12px;color:#ebebeb;white-space:pre;left:949.71px;transform:scaleX(0.8867);transform-origin:0 0;">Pfade</div>
<div style="left:1009px;top:371px;width:11px;height:11px;border:1px solid #bbb;"></div>
<svg style="left:1009px;top:371px;" width="11" height="11" viewBox="0 0 11 11"><path d="M7.5 2.5 L7.5 8.5 L2.5 5.5 Z" fill="#bbb"/></svg>
<div style="left:820px;top:386px;width:2px;height:4px;background:#aaa;"></div>
<div style="left:820px;top:393px;width:2px;height:4px;background:#aaa;"></div>
<div style="left:820px;top:400px;width:2px;height:4px;background:#aaa;"></div>
<div style="left:825px;top:391px;width:153px;height:28px;background:#2c2c2c;border-radius:4px;border:1px solid #262626;"></div>
<div style="left:979px;top:391px;width:43px;height:28px;background:#2c2c2c;border-radius:4px;border:1px solid #262626;"></div>
<div style="top:398.8px;font-size:12px;line-height:12px;color:#ebebeb;white-space:pre;left:830.16px;transform:scaleX(0.9371);transform-origin:0 0;">Modus</div>
<div style="top:398.8px;font-size:12px;line-height:12px;color:#ebebeb;white-space:pre;left:915.68px;transform:scaleX(0.9189);transform-origin:0 0;">Normal</div>
<svg style="left:959px;top:400px;" width="12" height="8" viewBox="0 0 12 8"><path d="M1 1 L6 6 L11 1" fill="none" stroke="#e8e8e8" stroke-width="1.6"/></svg>
<svg style="left:1003px;top:400px;" width="12" height="8" viewBox="0 0 12 8"><path d="M1 1 L6 6 L11 1" fill="none" stroke="#e8e8e8" stroke-width="1.6"/></svg>
<svg style="left:983px;top:398px;" width="14" height="14" viewBox="0 0 14 14"><path d="M5 3.5 A4.5 4.5 0 1 1 5.5 11.5" fill="none" stroke="#c4c4c4" stroke-width="1.6"/><path d="M2 2 L6.5 1 L6 6 Z" fill="#c4c4c4"/><circle cx="3.5" cy="11" r="1.8" fill="#c4c4c4"/></svg>
<div style="left:826px;top:421px;width:196px;height:17px;background:#5a5a5a;border:1px solid #6a6a6a;"></div>
<div style="left:1009px;top:422px;width:1px;height:15px;background:#111;"></div>
<div style="left:1010px;top:422px;width:11px;height:15px;background:#3a3a3a;"></div>
<svg style="left:1010px;top:422px;" width="11" height="15" viewBox="0 0 11 15"><path d="M2 5 L5.5 1.5 L9 5" fill="none" stroke="#888" stroke-width="1.3"/><path d="M2 10 L5.5 13.5 L9 10" fill="none" stroke="#ddd" stroke-width="1.3"/></svg>
<div style="top:422.8px;font-size:12px;line-height:12px;color:#ebebeb;white-space:pre;left:825.30px;transform:scaleX(0.9980);transform-origin:0 0;">Deckkraft</div>
<div style="top:422.8px;font-size:12px;line-height:12px;color:#ebebeb;white-space:pre;left:980.92px;transform:scaleX(0.8793);transform-origin:0 0;">100,0</div>
<div style="top:443.8px;font-size:12px;line-height:12px;color:#ebebeb;white-space:pre;left:824.07px;transform:scaleX(0.9289);transform-origin:0 0;">Sperre:</div>
<svg style="left:866px;top:442px;" width="70" height="16" viewBox="0 0 70 16">
<path d="M13 1 L5 11 C4 11 3 12 2 14.5 C4.5 14 6 13 6.5 12 Z" fill="#c4c4c4"/>
<g fill="#c4c4c4"><path d="M31.5 1 L34.5 4 L32.5 4 L32.5 7 L35.5 7 L35.5 5 L38.5 8 L35.5 11 L35.5 9 L32.5 9 L32.5 12 L34.5 12 L31.5 15 L28.5 12 L30.5 12 L30.5 9 L27.5 9 L27.5 11 L24.5 8 L27.5 5 L27.5 7 L30.5 7 L30.5 4 L28.5 4 Z"/></g>
<g><rect x="49" y="1" width="13" height="13" fill="#d0d0d0"/>
<path d="M49 1 h3.25 v3.25 h-3.25 Z M55.5 1 h3.25 v3.25 h-3.25 Z M52.25 4.25 h3.25 v3.25 h-3.25Z M58.75 4.25 h3.25 v3.25 h-3.25Z M49 7.5 h3.25 v3.25 h-3.25 Z M55.5 7.5 h3.25 v3.25 h-3.25 Z M52.25 10.75 h3.25 v3.25 h-3.25Z M58.75 10.75 h3.25 v3.25 h-3.25Z" fill="#707070"/></g>
</svg>
<div style="left:825px;top:462px;width:197px;height:263px;background:#303030;"></div>
<div style="left:826px;top:462px;width:195px;height:40px;background:#1e1e1e;"></div>
<svg style="left:830px;top:474px;" width="21" height="16" viewBox="0 0 21 16"><path d="M0.5 8.5 C5 0.5 15.5 0.5 20 8.5 C15.5 16 5 16 0.5 8.5 Z" fill="#d8d8d8"/><path d="M3.2 9.2 C6.5 4 14 4 17.3 9.2 C14 8 6.5 8 3.2 9.2 Z" fill="#1e1e1e"/><circle cx="10.2" cy="8.4" r="4.2" fill="#1e1e1e"/><circle cx="8.8" cy="7" r="1.3" fill="#d8d8d8"/></svg>
<div style="left:904px;top:464px;width:30px;height:36px;background:#ffffff;"></div>
<svg style="left:904px;top:464px;" width="30" height="36" viewBox="0 0 30 36"><g>
<path d="M15 5 C15 2.5 19 2.5 19.5 5 C20 7 19 9 20 12 L18.5 12 L17 9.5 L15 9 Z" fill="#2a64b8"/>
<path d="M11 8 C11 5.5 15 5 15.5 7.5 L15.5 12.5 L12 12.5 Z" fill="#e6ebf0"/>
<circle cx="13.8" cy="8.2" r="0.8" fill="#222"/>
<path d="M9.8 10.5 C11 9.8 14 10 15.3 11 L15 13.7 L11 13.5 Z" fill="#f0a020"/>
<path d="M12 13.7 L16 13.7 L16.5 16.5 L12.5 16.5 Z" fill="#f0f2f4"/>
<path d="M9.5 17 C11 15.5 17 15 20 16.5 L21 20 L20 24 L15 24.5 L10 23.5 C8.8 21 8.8 19 9.5 17 Z" fill="#1f6cc0"/>
<path d="M12.5 16.5 L14.5 16.5 L14 23 Z" fill="#e8e8e8"/>
<circle cx="17.4" cy="17.8" r="1" fill="#d83a2a"/>
<path d="M6.4 22 C8 21 10 21 11.6 22 L12 25.5 L8 26.3 C6.5 25 6 23.5 6.4 22 Z" fill="#e4e8ec"/>
<path d="M21 21 L25 21 L25 23 L21 23 Z" fill="#e4e8ec"/>
<path d="M5.3 31 C6 28.5 10 27.5 14.8 28 L14.5 32.6 L6.5 32.6 Z" fill="#f0a526"/>
<path d="M16.3 26 C18 24 23 24 25.2 25.5 L24.5 29.5 L19 30.7 L16.5 29 Z" fill="#eb9a2a"/>
</g></svg>
<div style="top:476.8px;font-size:12px;line-height:12px;color:#ebebeb;white-space:pre;font-weight:bold;left:941px;letter-spacing:-0.2px;">DonaldDuck.jpg</div>
<div style="left:1021px;top:462px;width:3px;height:303px;background:#454545;"></div>
<div style="left:1021px;top:462px;width:1px;height:263px;background:#333;"></div>
<div style="left:825px;top:725px;width:197px;height:15px;background:#262626;"></div>
<div style="left:826px;top:726px;width:181px;height:13px;background:#5c5c5c;border-radius:3px;"></div>
<div style="left:823px;top:740px;width:199px;height:25px;background:#363636;"></div>
<svg style="left:826px;top:742px;" width="196" height="20" viewBox="0 0 196 20">
<g fill="none" stroke="#c4c4c4" stroke-width="1.3">
<path d="M7 5.5 L10 5.5 L14 5.5 L16 7.5 L16 16 L7 16 Z"/>
</g>
<path d="M4 5 L10 5 M7 2 L7 8" stroke="#c4c4c4" stroke-width="1.6"/>
<path d="M28 3 L33 3 L34 5 L41 5 L41 16 L28 16 Z" fill="#c4c4c4"/>
<path d="M31.5 11 L38.5 11 M35 7.5 L35 14.5" stroke="#363636" stroke-width="1.8"/>
<path d="M54 13 L59 8 L64 13" fill="none" stroke="#c4c4c4" stroke-width="1.8"/>
<path d="M78 8 L83 13 L88 8" fill="none" stroke="#c4c4c4" stroke-width="1.8"/>
<g fill="none" stroke="#c4c4c4" stroke-width="1.2"><path d="M101 4 L109 4 L109 10 L101 10 Z"/><path d="M104 11 L104 14.5 L112 14.5 L112 7 L110 7"/></g>
<g fill="#c4c4c4"><path d="M126 6 L132 6 L131 8 L125 8 Z M126 10 L132 10 L131 12 L125 12 Z M126 14 L132 14 L131 16 L125 16 Z"/><rect x="134" y="4" width="1.6" height="9"/><path d="M131.5 12 L138 12 L134.8 16 Z"/></g>
<g fill="#c4c4c4"><path d="M151 14 L163 14 L160 17 L148 17 Z"/><rect x="154" y="3" width="7" height="8"/></g>
<path d="M155.5 6 L156.5 6 M158.5 6 L159.5 6 M155.5 8.5 L159.5 8.5" stroke="#363636" stroke-width="1"/>
<rect x="175" y="3" width="13" height="13" fill="#c4c4c4"/>
<path d="M177.5 5.5 L185.5 13.5 M185.5 5.5 L177.5 13.5" stroke="#363636" stroke-width="1.8"/>
</svg>
<div style="left:224px;top:29px;width:300px;height:626px;background:rgba(0,0,0,0.5);filter:blur(1.5px);"></div>
<div style="left:219px;top:26px;width:302px;height:626px;background:#474747;border:1px solid #5c5c5c;"></div>
<div style="top:35.8px;font-size:12px;line-height:12px;color:#ebebeb;white-space:pre;left:246.99px;transform:scaleX(1.0052);transform-origin:0 0;">Duplizieren</div>
<div style="top:35.8px;font-size:12px;line-height:12px;color:#ebebeb;white-space:pre;left:471.37px;transform:scaleX(1.0333);transform-origin:0 0;">Strg+D</div>
<svg style="left:227px;top:36px;" width="14" height="14" viewBox="0 0 14 14"><g fill="none" stroke="#bcbcbc" stroke-width="1.2"><rect x="0.6" y="0.6" width="7.5" height="6"/><path d="M4 8.5 L4 10.4 L11.4 10.4 L11.4 4 L9.5 4"/></g></svg>
<div style="left:225px;top:60px;width:290px;height:1px;background:#1e1e1e;"></div>
<div style="top:76.8px;font-size:12px;line-height:12px;color:#ebebeb;white-space:pre;left:246.95px;transform:scaleX(1.0486);transform-origin:0 0;">Modus</div>
<svg style="left:504px;top:75px;" width="9" height="13" viewBox="0 0 9 13"><path d="M1.5 1 L7.5 6.5 L1.5 12" fill="none" stroke="#e0e0e0" stroke-width="1.5"/></svg>
<div style="top:101.8px;font-size:12px;line-height:12px;color:#ebebeb;white-space:pre;left:248.00px;transform:scaleX(0.9781);transform-origin:0 0;">Genauigkeit</div>
<svg style="left:504px;top:100px;" width="9" height="13" viewBox="0 0 9 13"><path d="M1.5 1 L7.5 6.5 L1.5 12" fill="none" stroke="#e0e0e0" stroke-width="1.5"/></svg>
<div style="top:126.8px;font-size:12px;line-height:12px;color:#ebebeb;white-space:pre;left:247.01px;transform:scaleX(0.9938);transform-origin:0 0;">Farbverwaltung</div>
<svg style="left:504px;top:125px;" width="9" height="13" viewBox="0 0 9 13"><path d="M1.5 1 L7.5 6.5 L1.5 12" fill="none" stroke="#e0e0e0" stroke-width="1.5"/></svg>
<div style="left:225px;top:151px;width:290px;height:1px;background:#1e1e1e;"></div>
<div style="top:167.8px;font-size:12px;line-height:12px;color:#ebebeb;white-space:pre;left:248.00px;transform:scaleX(0.9812);transform-origin:0 0;">Transformation</div>
<svg style="left:504px;top:166px;" width="9" height="13" viewBox="0 0 9 13"><path d="M1.5 1 L7.5 6.5 L1.5 12" fill="none" stroke="#e0e0e0" stroke-width="1.5"/></svg>
<div style="top:192.8px;font-size:12px;line-height:12px;color:#ebebeb;white-space:pre;left:247.01px;transform:scaleX(0.9936);transform-origin:0 0;">Leinwandgröße ...</div>
<svg style="left:227px;top:193px;" width="14" height="14" viewBox="0 0 14 14"><g fill="none" stroke="#bcbcbc" stroke-width="1.2"><rect x="4.5" y="3.5" width="7" height="7.5"/></g><rect x="6" y="5" width="4" height="3.5" fill="#6a6a6a"/><path d="M5 0.8 L11 0.8 M1.5 3 L1.5 11" stroke="#bcbcbc" stroke-width="1.2"/><path d="M10 -0.5 L12 0.8 L10 2 Z M0.2 10 L1.5 12 L2.8 10Z" fill="#bcbcbc"/></svg>
<div style="top:217.8px;font-size:12px;line-height:12px;color:#ebebeb;white-space:pre;left:247.04px;transform:scaleX(0.9605);transform-origin:0 0;">Leinwand an Ebenen anpassen</div>
<div style="top:242.8px;font-size:12px;line-height:12px;color:#ebebeb;white-space:pre;left:247.02px;transform:scaleX(0.9782);transform-origin:0 0;">Leinwand an Auswahl anpassen</div>
<div style="top:267.8px;font-size:12px;line-height:12px;color:#ebebeb;white-space:pre;left:247.01px;transform:scaleX(0.9878);transform-origin:0 0;">Druckgröße ...</div>
<svg style="left:227px;top:267px;" width="14" height="14" viewBox="0 0 14 14"><g fill="#bcbcbc"><rect x="3" y="0" width="6" height="2"/><rect x="0.5" y="3" width="11.5" height="5" rx="1"/><rect x="2.5" y="7" width="7" height="5"/></g><path d="M4 9 L8 8" stroke="#666" stroke-width="1"/></svg>
<div style="left:221px;top:286px;width:298px;height:24px;background:#121212;"></div>
<div style="top:292.8px;font-size:12px;line-height:12px;color:#ebebeb;white-space:pre;left:247.03px;transform:scaleX(0.9675);transform-origin:0 0;">Bild skalieren ...</div>
<svg style="left:227px;top:292px;" width="14" height="14" viewBox="0 0 14 14"><path d="M0.5 0.5 L3.5 3.5 M3.5 0.5 L0.5 3.5" stroke="#bcbcbc" stroke-width="1"/><rect x="4.6" y="4.6" width="7.6" height="7.5" fill="none" stroke="#bcbcbc" stroke-width="1.2"/><rect x="6" y="6" width="5" height="3" fill="#555"/></svg>
<div style="left:225px;top:317px;width:290px;height:1px;background:#1e1e1e;"></div>
<div style="top:333.8px;font-size:12px;line-height:12px;color:#ebebeb;white-space:pre;left:248.00px;transform:scaleX(1.0000);transform-origin:0 0;">Auf Auswahl zuschneiden</div>
<svg style="left:227px;top:333px;" width="14" height="14" viewBox="0 0 14 14"><g fill="none" stroke="#bcbcbc" stroke-width="1.4"><path d="M1.5 0 L1.5 9.5 L11 9.5"/><path d="M0 2.5 L9.5 2.5 L9.5 11"/></g></svg>
<div style="top:358.8px;font-size:12px;line-height:12px;color:#ebebeb;white-space:pre;left:248.00px;transform:scaleX(0.9959);transform-origin:0 0;">Auf Inhalt zuschneiden</div>
<svg style="left:227px;top:358px;" width="14" height="14" viewBox="0 0 14 14"><g fill="none" stroke="#bcbcbc" stroke-width="1.4"><path d="M1.5 0 L1.5 9.5 L11 9.5"/><path d="M0 2.5 L9.5 2.5 L9.5 11"/></g></svg>
<div style="top:383.8px;font-size:12px;line-height:12px;color:#ebebeb;white-space:pre;left:247.03px;transform:scaleX(0.9719);transform-origin:0 0;">Fanatisch zuschneiden</div>
<svg style="left:227px;top:383px;" width="14" height="14" viewBox="0 0 14 14"><g fill="#bcbcbc"><circle cx="9" cy="4" r="3.2"/><circle cx="3" cy="9.5" r="2.4"/></g><g stroke="#bcbcbc" stroke-width="1.2"><path d="M9 -0.5 L9 8.5 M4.5 4 L13.5 4 M5.8 0.8 L12.2 7.2 M12.2 0.8 L5.8 7.2"/></g><circle cx="9" cy="4" r="1.3" fill="#474747"/><circle cx="3" cy="9.5" r="1.1" fill="#474747"/></svg>
<div style="top:408.8px;font-size:12px;line-height:12px;color:#ebebeb;white-space:pre;left:246.98px;transform:scaleX(1.0212);transform-origin:0 0;">Mit Hilfslinien zerlegen</div>
<svg style="left:227px;top:408px;" width="14" height="14" viewBox="0 0 14 14"><g fill="#bcbcbc"><circle cx="9" cy="4" r="3.2"/><circle cx="3" cy="9.5" r="2.4"/></g><g stroke="#bcbcbc" stroke-width="1.2"><path d="M9 -0.5 L9 8.5 M4.5 4 L13.5 4 M5.8 0.8 L12.2 7.2 M12.2 0.8 L5.8 7.2"/></g><circle cx="9" cy="4" r="1.3" fill="#474747"/><circle cx="3" cy="9.5" r="1.1" fill="#474747"/></svg>
<div style="left:225px;top:433px;width:290px;height:1px;background:#1e1e1e;"></div>
<div style="top:449.8px;font-size:12px;line-height:12px;color:#ebebeb;white-space:pre;left:247.03px;transform:scaleX(0.9654);transform-origin:0 0;">Sichtbare Ebenen vereinen ...</div>
<div style="top:449.8px;font-size:12px;line-height:12px;color:#ebebeb;white-space:pre;left:468.11px;transform:scaleX(1.0946);transform-origin:0 0;">Strg+M</div>
<div style="top:474.8px;font-size:12px;line-height:12px;color:#ebebeb;white-space:pre;left:247.01px;transform:scaleX(0.9856);transform-origin:0 0;">Bild zusammenfügen</div>
<div style="top:499.8px;font-size:12px;line-height:12px;color:#ebebeb;white-space:pre;left:247.03px;transform:scaleX(0.9663);transform-origin:0 0;">Sichtbare Ebenen ausrichten ...</div>
<svg style="left:227px;top:499px;" width="14" height="14" viewBox="0 0 14 14"><g fill="#bcbcbc"><circle cx="9" cy="4" r="3.2"/><circle cx="3" cy="9.5" r="2.4"/></g><g stroke="#bcbcbc" stroke-width="1.2"><path d="M9 -0.5 L9 8.5 M4.5 4 L13.5 4 M5.8 0.8 L12.2 7.2 M12.2 0.8 L5.8 7.2"/></g><circle cx="9" cy="4" r="1.3" fill="#474747"/><circle cx="3" cy="9.5" r="1.1" fill="#474747"/></svg>
<div style="left:225px;top:524px;width:290px;height:1px;background:#1e1e1e;"></div>
<div style="top:540.8px;font-size:12px;line-height:12px;color:#ebebeb;white-space:pre;left:246.95px;transform:scaleX(1.0500);transform-origin:0 0;">Hilfslinien</div>
<svg style="left:504px;top:539px;" width="9" height="13" viewBox="0 0 9 13"><path d="M1.5 1 L7.5 6.5 L1.5 12" fill="none" stroke="#e0e0e0" stroke-width="1.5"/></svg>
<div style="top:565.8px;font-size:12px;line-height:12px;color:#ebebeb;white-space:pre;left:247.02px;transform:scaleX(0.9800);transform-origin:0 0;">Raster konfigurieren ...</div>
<svg style="left:226px;top:563px;" width="14" height="14" viewBox="0 0 14 14"><g fill="none" stroke="#bcbcbc" stroke-width="1"><rect x="0.5" y="0.5" width="13" height="13"/><path d="M4.8 0.5 L4.8 13.5 M9.2 0.5 L9.2 13.5 M0.5 4.8 L13.5 4.8 M0.5 9.2 L13.5 9.2"/></g></svg>
<div style="left:225px;top:590px;width:290px;height:1px;background:#1e1e1e;"></div>
<div style="top:606.8px;font-size:12px;line-height:12px;color:#ebebeb;white-space:pre;left:247.00px;transform:scaleX(1.0043);transform-origin:0 0;">Bildeigenschaften</div>
<div style="top:606.8px;font-size:12px;line-height:12px;color:#ebebeb;white-space:pre;left:444.60px;transform:scaleX(1.0015);transform-origin:0 0;">Alt+Eingabe</div>
<svg style="left:226px;top:605px;" width="14" height="14" viewBox="0 0 14 14"><circle cx="6.5" cy="6.5" r="5.8" fill="none" stroke="#bcbcbc" stroke-width="1.3"/><rect x="5.8" y="5" width="1.6" height="5" fill="#bcbcbc"/><circle cx="6.6" cy="3.3" r="0.9" fill="#bcbcbc"/></svg>
<div style="top:631.8px;font-size:12px;line-height:12px;color:#ebebeb;white-space:pre;left:246.97px;transform:scaleX(1.0327);transform-origin:0 0;">Metadaten</div>
<svg style="left:504px;top:630px;" width="9" height="13" viewBox="0 0 9 13"><path d="M1.5 1 L7.5 6.5 L1.5 12" fill="none" stroke="#e0e0e0" stroke-width="1.5"/></svg>
<div style="left:335px;top:313px;width:201px;height:53px;background:rgba(0,0,0,0.45);filter:blur(1.5px);"></div>
<div style="left:334px;top:312px;width:200px;height:52px;background:#3b3b3b;border:1px solid #5e5e5e;"></div>
<div style="top:319.0px;font-size:13px;line-height:13px;color:#ebebeb;white-space:pre;left:337.01px;transform:scaleX(0.9898);transform-origin:0 0;">Die Größe des Bildinhaltes ändern</div>
<div style="left:334px;top:312px;width:199px;height:52px;overflow:hidden;">
<div style="right:0px;top:35.7px;font-size:11px;line-height:11px;color:#dcdcdc;white-space:pre;font-style:italic;">Drücken Sie F1 für mehr Hilfe</div>
</div>
</body></html>
